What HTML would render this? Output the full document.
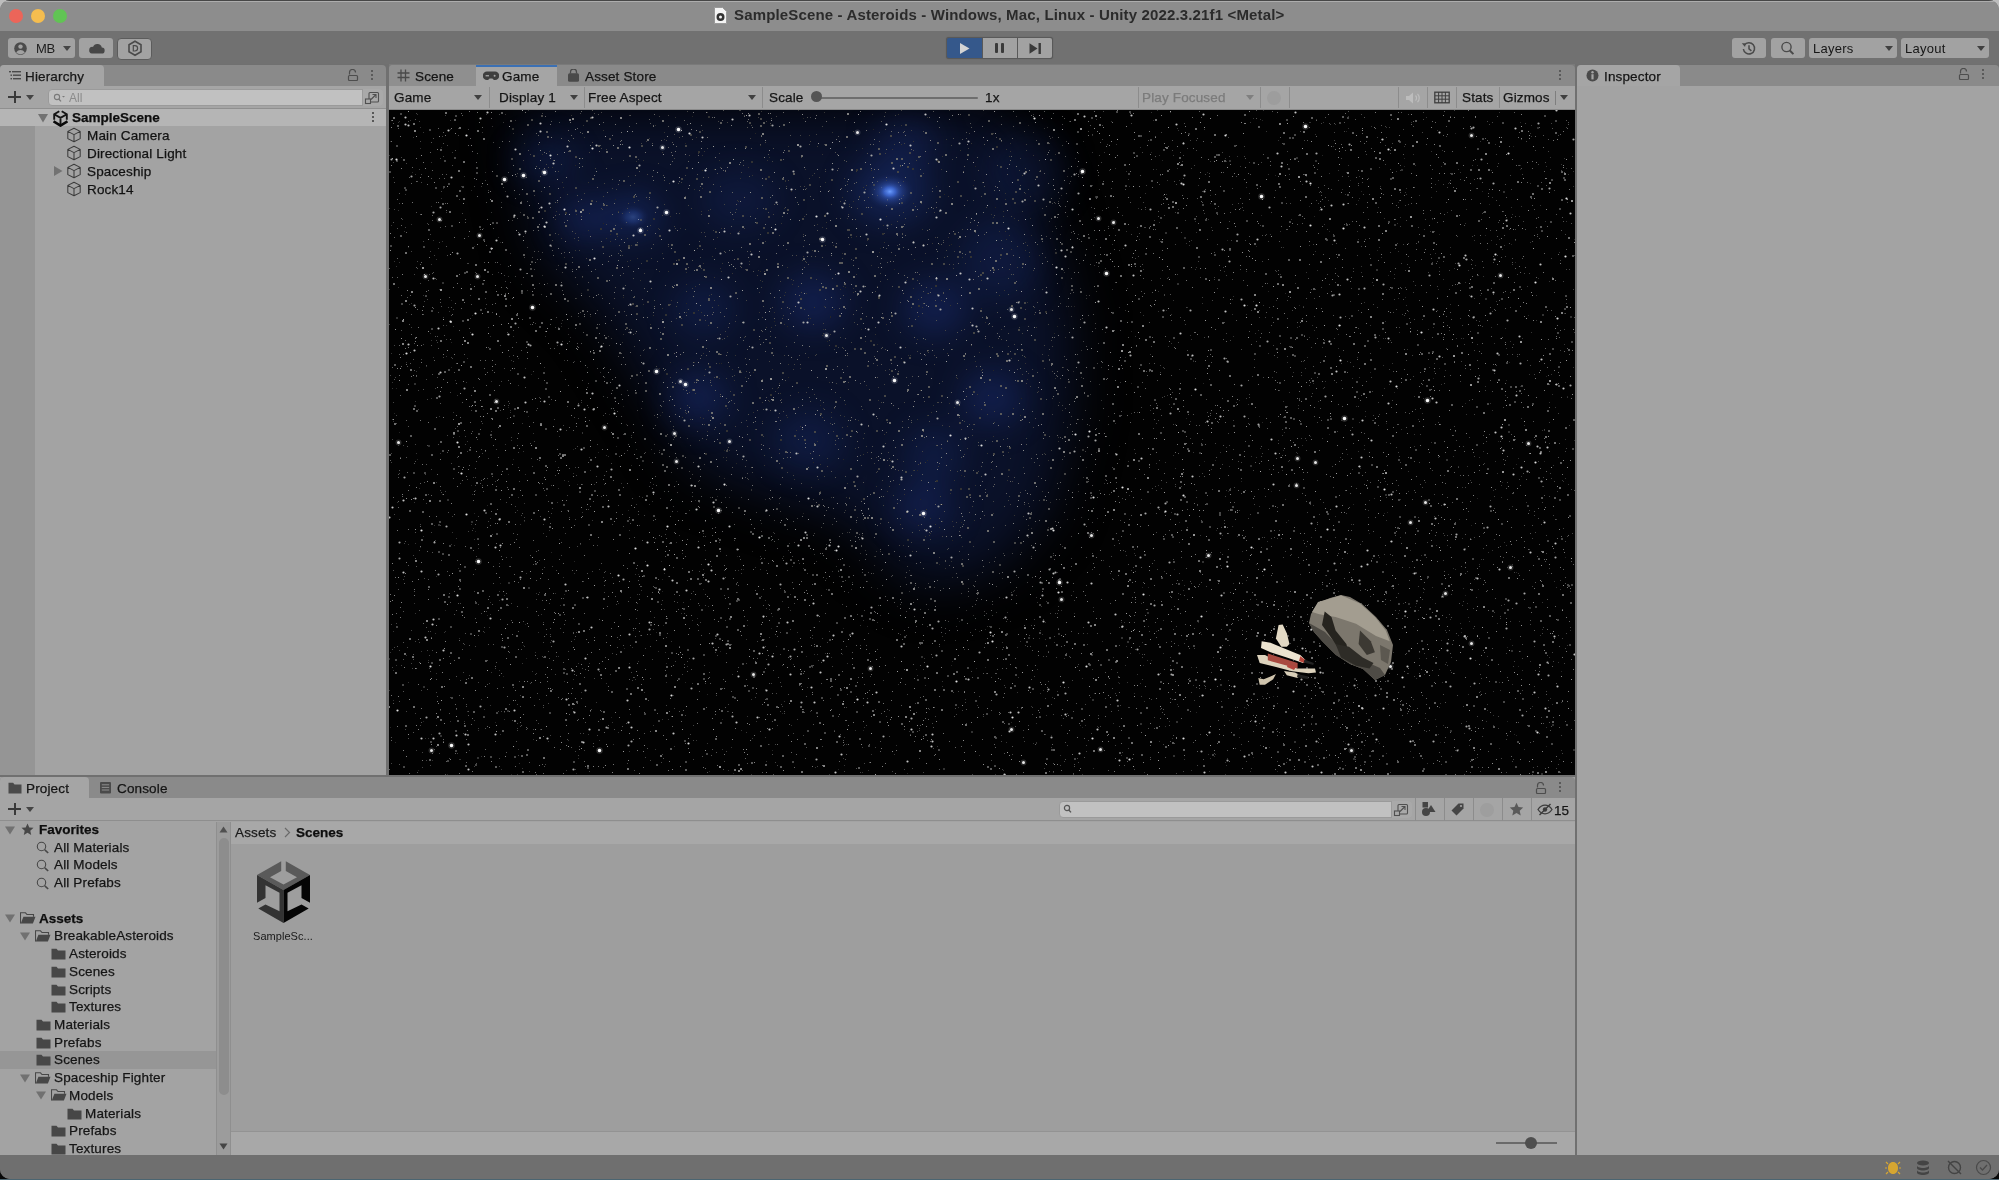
<!DOCTYPE html>
<html><head><meta charset="utf-8">
<style>
*{margin:0;padding:0;box-sizing:border-box}
html,body{width:1999px;height:1180px;overflow:hidden;background:#080808}
body{font-family:"Liberation Sans",sans-serif;font-size:13px;color:#111;position:relative}
.a{position:absolute}
.t{position:absolute;white-space:nowrap;line-height:1;will-change:transform}
#win{position:absolute;left:0;top:0;width:1999px;height:1179px;background:#707070;border-radius:10px;overflow:hidden}
#title{left:0;top:0;width:1999px;height:31px;background:#8d8d8d}
#toolbar{left:0;top:31px;width:1999px;height:33px;background:#717171}
.btn{position:absolute;background:#a2a2a2;border-radius:3px}
.tabbar{position:absolute;background:#8a8a8a;border-top-left-radius:4px;border-top-right-radius:4px}
.tab{position:absolute;top:0;height:22px;background:#a5a5a5;border-top-left-radius:4px;border-top-right-radius:4px}
.sep{position:absolute;width:1px;background:#8c8c8c}
.dd{position:absolute;width:0;height:0;border-left:5px solid transparent;border-right:5px solid transparent;border-top:6px solid #3c3c3c}
.row{position:absolute;left:0;height:18px;width:100%}
.txt{font-size:13.5px;letter-spacing:0.15px;color:#121212;-webkit-text-stroke:0.25px currentColor}
</style></head><body>
<div class="a" style="left:0;top:0;width:20px;height:20px;background:#bdbdbd"></div>
<div class="a" style="left:1979px;top:0;width:20px;height:20px;background:#bdbdbd"></div>
<div id="win">
  <div class="a" style="left:0;top:0;width:1999px;height:1px;background:#474747;z-index:5"></div>
  <div class="a" style="left:0;top:1px;width:1999px;height:1px;background:#adadad;z-index:5"></div>
  <!-- ===== TITLE BAR ===== -->
  <div id="title" class="a">
    <div class="a" style="left:9px;top:9px;width:14px;height:14px;border-radius:50%;background:#ec6559"></div>
    <div class="a" style="left:31px;top:9px;width:14px;height:14px;border-radius:50%;background:#f5bd4f"></div>
    <div class="a" style="left:53px;top:9px;width:14px;height:14px;border-radius:50%;background:#61c454"></div>
    <svg class="a" style="left:712px;top:6px" width="17" height="19" viewBox="0 0 17 19">
      <path d="M2.5 1.5h8l4 4v12h-12z" fill="#f4f4f4" stroke="#9a9a9a" stroke-width="1"/>
      <circle cx="8.5" cy="11" r="4" fill="#333"/><circle cx="8.5" cy="11" r="1.5" fill="#f4f4f4"/>
    </svg>
    <div class="t" style="left:734px;top:7px;font-size:15px;font-weight:bold;color:#2b2b2b;letter-spacing:0.15px">SampleScene - Asteroids - Windows, Mac, Linux - Unity 2022.3.21f1 &lt;Metal&gt;</div>
  </div>
  <!-- ===== TOOLBAR ===== -->
  <div id="toolbar" class="a">
    <div class="btn" style="left:8px;top:7px;width:67px;height:20px"></div>
    <div class="btn" style="left:79px;top:7px;width:34px;height:20px"></div>
    <div class="btn" style="left:117px;top:6.5px;width:35px;height:22.5px;border:1px solid #5c5c5c;border-radius:4px"></div>
    <svg class="a" style="left:13px;top:10px" width="15" height="15" viewBox="0 0 15 15">
      <circle cx="7.5" cy="7.5" r="6.3" fill="#4b4b4b"/>
      <circle cx="7.5" cy="5.6" r="2.2" fill="#a2a2a2"/>
      <path d="M3.2 11.6c1-1.9 2.6-2.6 4.3-2.6s3.3.7 4.3 2.6c-1.1 1.1-2.6 1.6-4.3 1.6s-3.2-.5-4.3-1.6z" fill="#a2a2a2"/>
    </svg>
    <div class="t" style="left:36px;top:11px;font-size:13px;color:#1c1c1c;letter-spacing:-0.3px">MB</div>
    <div class="dd" style="left:63px;top:15px;border-left-width:4px;border-right-width:4px;border-top-width:5px;border-top-color:#454545"></div>
    <svg class="a" style="left:88px;top:10px" width="17" height="14" viewBox="0 0 17 14">
      <path d="M4 12.5h9.5a3 3 0 0 0 .3-6a4.6 4.6 0 0 0-8.8-.6a3.3 3.3 0 0 0-1 6.6z" fill="#474747"/>
    </svg>
    <svg class="a" style="left:127px;top:40px;top:9px" width="16" height="17" viewBox="0 0 16 17">
      <path d="M8 1.3l6 3.5v7l-6 3.5-6-3.5v-7z" fill="none" stroke="#4a4a4a" stroke-width="1.6"/>
      <path d="M6.3 5.6h1.6a2.6 2.6 0 0 1 0 5.4H6.3z" fill="none" stroke="#4a4a4a" stroke-width="1.2"/>
    </svg>
    <!-- play group -->
    <div class="a" style="left:946px;top:6px;width:107px;height:22px;background:#595959;border-radius:3px;box-shadow:0 0 1px #5a5a5a"></div>
    <div class="a" style="left:947px;top:7px;width:35px;height:20px;background:#35588b;border-radius:2px 0 0 2px"></div>
    <div class="a" style="left:983px;top:7px;width:34px;height:20px;background:#a2a2a2"></div>
    <div class="a" style="left:1018px;top:7px;width:34px;height:20px;background:#a2a2a2;border-radius:0 2px 2px 0"></div>
    <svg class="a" style="left:959px;top:11px" width="12" height="13" viewBox="0 0 12 13"><path d="M1 1l9.5 5.5L1 12z" fill="#d4d4d4"/></svg>
    <div class="a" style="left:995px;top:12px;width:3px;height:10px;background:#3a3a3a;border-radius:1px"></div>
    <div class="a" style="left:1001px;top:12px;width:3px;height:10px;background:#3a3a3a;border-radius:1px"></div>
    <svg class="a" style="left:1029px;top:12px" width="13" height="11" viewBox="0 0 13 11"><path d="M0.5 0.2l8 5.3-8 5.3z" fill="#3a3a3a"/><rect x="9.5" y="0" width="2.4" height="11" fill="#3a3a3a"/></svg>
    <!-- right -->
    <div class="btn" style="left:1732px;top:7px;width:34px;height:20px"></div>
    <div class="btn" style="left:1771px;top:7px;width:34px;height:20px"></div>
    <div class="btn" style="left:1809px;top:7px;width:88px;height:20px"></div>
    <div class="btn" style="left:1901px;top:7px;width:88px;height:20px"></div>
    <svg class="a" style="left:1741px;top:10px" width="16" height="15" viewBox="0 0 16 15">
      <path d="M3.3 4.3A5.6 5.6 0 1 1 2.4 8" fill="none" stroke="#4a4a4a" stroke-width="1.5"/>
      <path d="M0.8 2.2l3.6 0.1-0.3 3.6z" fill="#4a4a4a"/>
      <path d="M8 4.2v3.6l2.4 2" fill="none" stroke="#4a4a4a" stroke-width="1.5"/>
    </svg>
    <svg class="a" style="left:1780px;top:10px" width="16" height="15" viewBox="0 0 16 15">
      <circle cx="6.5" cy="6" r="4.6" fill="none" stroke="#4a4a4a" stroke-width="1.4"/>
      <path d="M9.8 9.5l3.6 3.6" stroke="#4a4a4a" stroke-width="2"/>
    </svg>
    <div class="t" style="left:1813px;top:11px;font-size:13px;color:#161616;letter-spacing:0.25px">Layers</div>
    <div class="t" style="left:1905px;top:11px;font-size:13px;color:#161616;letter-spacing:0.25px">Layout</div>
    <div class="dd" style="left:1885px;top:15px;border-left-width:4px;border-right-width:4px;border-top-width:5px;border-top-color:#404040"></div>
    <div class="dd" style="left:1977px;top:15px;border-left-width:4px;border-right-width:4px;border-top-width:5px;border-top-color:#404040"></div>
  </div>

  <!-- ===== HIERARCHY ===== -->
  <div class="a" style="left:0;top:64px;width:386px;height:711px;background:#707070">
    <div class="a" style="left:0;top:22px;width:386px;height:689px;background:#a3a3a3"></div>
    <div class="tabbar" style="left:0;top:1px;width:386px;height:21px"></div>
    <div class="tab" style="left:0;top:1px;height:21px;width:104px"></div>
    <svg class="a" style="left:9px;top:6px" width="12" height="11" viewBox="0 0 12 11">
      <rect x="0" y="1" width="2" height="1.4" fill="#4a4a4a"/><rect x="3" y="1" width="9" height="1.4" fill="#4a4a4a"/>
      <rect x="1.5" y="4.5" width="1.5" height="1.4" fill="#4a4a4a"/><rect x="4" y="4.5" width="8" height="1.4" fill="#4a4a4a"/>
      <rect x="1.5" y="8" width="1.5" height="1.4" fill="#4a4a4a"/><rect x="4" y="8" width="8" height="1.4" fill="#4a4a4a"/>
    </svg>
    <div class="t txt" style="left:25px;top:6px;color:#181818">Hierarchy</div>
    <svg class="a" style="left:347px;top:5px" width="12" height="12" viewBox="0 0 12 12">
      <path d="M2.5 5.5V3.5a3 3 0 0 1 6 0" fill="none" stroke="#4d4d4d" stroke-width="1.2"/>
      <rect x="1.5" y="6.5" width="9" height="5" rx="1" fill="none" stroke="#4d4d4d" stroke-width="1.2"/>
    </svg>
    <div class="a" style="left:371px;top:6px;width:2.4px;height:2.4px;border-radius:50%;background:#4a4a4a;box-shadow:0 4px 0 #4a4a4a,0 8px 0 #4a4a4a"></div>
    <div class="a" style="left:0;top:22px;width:386px;height:23px;background:#a5a5a5;border-bottom:1px solid #8f8f8f"></div>
    <div class="a" style="left:8px;top:32px;width:13px;height:2px;background:#3a3a3a"></div>
    <div class="a" style="left:13.5px;top:27px;width:2px;height:12px;background:#3a3a3a"></div>
    <div class="dd" style="left:26px;top:31px;border-left-width:4px;border-right-width:4px;border-top-width:5px;border-top-color:#444"></div>
    <div class="a" style="left:48px;top:25px;width:335px;height:17px;background:#c1c1c1;border-radius:4px;border:1px solid #9a9a9a"></div>
    <svg class="a" style="left:53px;top:29px" width="12" height="10" viewBox="0 0 12 10">
      <circle cx="4" cy="4" r="2.6" fill="none" stroke="#7a7a7a" stroke-width="1.1"/><path d="M5.8 6l2.2 2.4" stroke="#7a7a7a" stroke-width="1.3"/><path d="M9 3h3l-1.5 1.6z" fill="#7a7a7a"/>
    </svg>
    <div class="t" style="left:69px;top:28px;font-size:12px;color:#8a8a8a">All</div>
    <div class="a" style="left:362px;top:25px;width:21px;height:17px;background:#a9a9a9;border-left:1px solid #9a9a9a;border-radius:0 4px 4px 0"></div>
    <svg class="a" style="left:364px;top:27px" width="16" height="14" viewBox="0 0 16 14">
      <rect x="5" y="1.5" width="9.5" height="9.5" rx="1" fill="none" stroke="#505050" stroke-width="1.1"/>
      <rect x="1.5" y="8" width="5" height="4.5" fill="#a9a9a9" stroke="#505050" stroke-width="1.1"/>
      <path d="M7 8.5l5-5M8.5 3.5h3.5V7" fill="none" stroke="#505050" stroke-width="1.1"/>
    </svg>
    <div class="a" style="left:0;top:45px;width:386px;height:17px;background:#b5b5b5"></div>
    <div class="a" style="left:0;top:62px;width:35px;height:649px;background:#959595"></div>
    <svg class="a" style="left:38px;top:50px" width="10" height="9" viewBox="0 0 10 9"><path d="M0 0h10l-5 8.5z" fill="#727272"/></svg>
    <svg class="a" style="left:52.5px;top:46px" width="15" height="17" viewBox="0 0 15 17">
      <path d="M6.3 1.2L1.2 4.2V9.8M8.7 1.2L13.8 4.2V9.8M1.2 4.2L7.5 7.8 13.8 4.2M7.5 7.8V14" fill="none" stroke="#151515" stroke-width="1.9"/>
      <path d="M0.5 11.4L7.5 15.6 14.5 11.4" fill="none" stroke="#0a0a0a" stroke-width="2.6"/>
    </svg>
    <div class="t txt" style="left:72px;top:46.5px;font-weight:bold;color:#0e0e0e;letter-spacing:0px">SampleScene</div>
    <div class="a" style="left:372px;top:48px;width:2.4px;height:2.4px;border-radius:50%;background:#3a3a3a;box-shadow:0 4px 0 #3a3a3a,0 8px 0 #3a3a3a"></div>
    <svg class="a" style="left:66px;top:63px" width="16" height="16" viewBox="0 0 16 16"><path d="M8 1.2l6.2 3.2v7.2L8 14.8 1.8 11.6V4.4z M1.8 4.4L8 7.6l6.2-3.2 M8 7.6v7.2" fill="none" stroke="#3c3c3c" stroke-width="1.05" stroke-linejoin="round"/></svg>
<div class="t txt" style="left:87px;top:65px">Main Camera</div>
<svg class="a" style="left:66px;top:81px" width="16" height="16" viewBox="0 0 16 16"><path d="M8 1.2l6.2 3.2v7.2L8 14.8 1.8 11.6V4.4z M1.8 4.4L8 7.6l6.2-3.2 M8 7.6v7.2" fill="none" stroke="#3c3c3c" stroke-width="1.05" stroke-linejoin="round"/></svg>
<div class="t txt" style="left:87px;top:83px">Directional Light</div>
<svg class="a" style="left:66px;top:99px" width="16" height="16" viewBox="0 0 16 16"><path d="M8 1.2l6.2 3.2v7.2L8 14.8 1.8 11.6V4.4z M1.8 4.4L8 7.6l6.2-3.2 M8 7.6v7.2" fill="none" stroke="#3c3c3c" stroke-width="1.05" stroke-linejoin="round"/></svg>
<div class="t txt" style="left:87px;top:101px">Spaceship</div>
<svg class="a" style="left:54px;top:102px" width="9" height="10" viewBox="0 0 9 10"><path d="M0 0l8.5 5L0 10z" fill="#727272"/></svg>
<svg class="a" style="left:66px;top:117px" width="16" height="16" viewBox="0 0 16 16"><path d="M8 1.2l6.2 3.2v7.2L8 14.8 1.8 11.6V4.4z M1.8 4.4L8 7.6l6.2-3.2 M8 7.6v7.2" fill="none" stroke="#3c3c3c" stroke-width="1.05" stroke-linejoin="round"/></svg>
<div class="t txt" style="left:87px;top:119px">Rock14</div>
  </div>

  <!-- ===== GAME ===== -->
  <div class="a" style="left:389px;top:64px;width:1186px;height:711px;background:#7a7a7a">
    <div class="tabbar" style="left:0;top:1px;width:1186px;height:21px"></div>
    <div class="a" style="left:0;top:1px;width:87px;height:21px;background:#8f8f8f;border-top-left-radius:4px"></div>
    <div class="tab" style="left:87px;top:1px;height:21px;width:81px;border-top:2px solid #3b70b4;border-radius:0"></div>
    <svg class="a" style="left:8px;top:5px" width="13" height="13" viewBox="0 0 13 13">
      <path d="M4 0.5v12M8.5 0.5v12M0.5 4h12M0.5 8.5h12" stroke="#4a4a4a" stroke-width="1.3"/>
    </svg>
    <div class="t txt" style="left:26px;top:6px;color:#151515">Scene</div>
    <svg class="a" style="left:94px;top:7px" width="16" height="10" viewBox="0 0 16 10">
      <path d="M4 0.5h8a3.8 3.8 0 0 1 0 8.5c-1.5 0-2-1.2-2.6-1.6H6.6C6 7.8 5.5 9 4 9A3.8 3.8 0 0 1 4 0.5z" fill="#3e3e3e"/>
      <rect x="2.6" y="4.1" width="3.4" height="1.3" fill="#a5a5a5"/><circle cx="11.6" cy="4.7" r="1" fill="#a5a5a5"/>
    </svg>
    <div class="t txt" style="left:113px;top:6px;color:#151515">Game</div>
    <svg class="a" style="left:178px;top:5px" width="13" height="13" viewBox="0 0 13 13">
      <path d="M3.5 4.5V3a3 3 0 0 1 6 0v1.5" fill="none" stroke="#4a4a4a" stroke-width="1.3"/>
      <rect x="1" y="4.3" width="11" height="8.5" rx="1.5" fill="#4a4a4a"/>
    </svg>
    <div class="t txt" style="left:196px;top:6px;color:#151515">Asset Store</div>
    <div class="a" style="left:1170px;top:6px;width:2.4px;height:2.4px;border-radius:50%;background:#4a4a4a;box-shadow:0 4px 0 #4a4a4a,0 8px 0 #4a4a4a"></div>
    <!-- game toolbar -->
    <div class="a" style="left:0;top:22px;width:1186px;height:24px;background:#a5a5a5;border-bottom:1px solid #8a8a8a"></div>
    <div class="sep" style="left:100px;top:23px;height:21px"></div>
    <div class="sep" style="left:195px;top:23px;height:21px"></div>
    <div class="sep" style="left:373px;top:23px;height:21px"></div>
    <div class="sep" style="left:749px;top:23px;height:21px"></div>
    <div class="sep" style="left:871px;top:23px;height:21px"></div>
    <div class="sep" style="left:900px;top:23px;height:21px"></div>
    <div class="sep" style="left:1009px;top:23px;height:21px"></div>
    <div class="sep" style="left:1038px;top:23px;height:21px"></div>
    <div class="sep" style="left:1067px;top:23px;height:21px"></div>
    <div class="sep" style="left:1110px;top:23px;height:21px"></div>
    <div class="sep" style="left:1166px;top:27px;height:14px;background:#7e7e7e"></div>
    <div class="t txt" style="left:5px;top:27px;color:#151515">Game</div>
    <div class="dd" style="left:85px;top:31px;border-left-width:4px;border-right-width:4px;border-top-width:5px;border-top-color:#404040"></div>
    <div class="t txt" style="left:110px;top:27px;color:#151515">Display 1</div>
    <div class="dd" style="left:181px;top:31px;border-left-width:4px;border-right-width:4px;border-top-width:5px;border-top-color:#404040"></div>
    <div class="t txt" style="left:199px;top:27px;color:#151515">Free Aspect</div>
    <div class="dd" style="left:359px;top:31px;border-left-width:4px;border-right-width:4px;border-top-width:5px;border-top-color:#404040"></div>
    <div class="t txt" style="left:380px;top:27px;color:#151515">Scale</div>
    <div class="a" style="left:423px;top:32.5px;width:166px;height:2px;background:#6e6e6e;border-radius:1px"></div>
    <div class="a" style="left:422px;top:27px;width:11px;height:11px;border-radius:50%;background:#555"></div>
    <div class="t txt" style="left:596px;top:27px;color:#151515">1x</div>
    <div class="t txt" style="left:753px;top:27px;color:#7b7b7b">Play Focused</div>
    <div class="dd" style="left:857px;top:31px;border-left-width:4px;border-right-width:4px;border-top-width:5px;border-top-color:#7f7f7f"></div>
    <div class="a" style="left:878px;top:27px;width:14px;height:14px;border-radius:50%;background:#9d9d9d"></div>
    <svg class="a" style="left:1016px;top:27px" width="16" height="14" viewBox="0 0 16 14">
      <path d="M1 5h3l4-3.5v11L4 9H1z" fill="#bdbdbd"/><path d="M10.5 4.5a3.5 3.5 0 0 1 0 5M12.5 2.8a6 6 0 0 1 0 8.4" fill="none" stroke="#bdbdbd" stroke-width="1.2"/>
    </svg>
    <svg class="a" style="left:1045px;top:27px" width="16" height="13" viewBox="0 0 16 13">
      <rect x="0.8" y="1.2" width="14.4" height="10.6" fill="none" stroke="#3e3e3e" stroke-width="1.3"/>
      <path d="M1 4.8h14M1 8.2h14M4.6 1v11M8 1v11M11.4 1v11" stroke="#3e3e3e" stroke-width="1"/>
    </svg>
    <div class="t txt" style="left:1073px;top:27px;color:#151515">Stats</div>
    <div class="t txt" style="left:1114px;top:27px;color:#151515">Gizmos</div>
    <div class="dd" style="left:1171px;top:31px;border-left-width:4px;border-right-width:4px;border-top-width:5px;border-top-color:#404040"></div>
    <div class="a" style="left:0;top:46px;width:1186px;height:665px;background:#020202;overflow:hidden">
      <svg class="a" style="left:0;top:0;filter:blur(26px)" width="1186" height="666" viewBox="0 0 1186 666"><path d="M132 -20 L132 41 L153 142 L214 203 L264 285 L305 356 L387 387 L458 407 L509 458 L539 478 L610 458 L661 397 L682 305 L682 203 L661 127 L630 41 L600 -20 Z" fill="#0a1129"/></svg>
      <svg class="a" style="left:0;top:0;filter:blur(15px)" width="1186" height="666" viewBox="0 0 1186 666"><ellipse cx="244.7" cy="105.7" rx="28" ry="22" fill="#1f3685" opacity="0.40"/><ellipse cx="196.7" cy="108.9" rx="28" ry="20" fill="#1f3685" opacity="0.36"/><ellipse cx="155" cy="51" rx="30" ry="20" fill="#1f3685" opacity="0.24"/><ellipse cx="517" cy="32" rx="32" ry="25" fill="#1f3685" opacity="0.28"/><ellipse cx="424" cy="192" rx="32" ry="28" fill="#1f3685" opacity="0.36"/><ellipse cx="545.7" cy="198.5" rx="32" ry="28" fill="#1f3685" opacity="0.36"/><ellipse cx="315" cy="198.5" rx="30" ry="28" fill="#1f3685" opacity="0.24"/><ellipse cx="308.7" cy="288" rx="30" ry="26" fill="#1f3685" opacity="0.36"/><ellipse cx="603" cy="288" rx="30" ry="28" fill="#1f3685" opacity="0.36"/><ellipse cx="500.9" cy="81.6" rx="40" ry="32" fill="#1f3685" opacity="0.40"/><ellipse cx="350" cy="90" rx="40" ry="30" fill="#1f3685" opacity="0.18"/><ellipse cx="420" cy="330" rx="35" ry="30" fill="#1f3685" opacity="0.24"/><ellipse cx="545" cy="345" rx="30" ry="30" fill="#1f3685" opacity="0.24"/><ellipse cx="534" cy="397" rx="30" ry="25" fill="#1f3685" opacity="0.32"/><ellipse cx="610" cy="150" rx="40" ry="40" fill="#1f3685" opacity="0.20"/><ellipse cx="640" cy="60" rx="40" ry="40" fill="#1f3685" opacity="0.20"/></svg>
      <svg class="a" style="left:0;top:0" width="1186" height="666" viewBox="0 0 1186 666">
      <defs>
        <radialGradient id="bg2"><stop offset="0" stop-color="#6a9cff"/><stop offset="0.45" stop-color="#3a64d0" stop-opacity="0.75"/><stop offset="1" stop-color="#18275c" stop-opacity="0"/></radialGradient>
      </defs>
      <path transform="translate(.5 .5)" stroke="rgb(37,37,37)" stroke-width="1" stroke-linecap="square" d="M303 6h0m111 2h0m459 2h0m258 2h0m-750 3h0m258 0h0m445 3h0m-600 1h0m189 0h0m284 2h0m-591 2h0m700 0h0m-1065 8h0m295 2h0m828 3h0m-1072 1h0m710 5h0m171 3h0m82 3h0m-242 2h0m-587 5h0m902 0h0m43 0h0m-545 1h0m429 0h0m-248 3h0m364 0h0m-818 1h0m-290 2h0m795 0h0m68 3h0m31 1h0m44 4h0m-377 5h0m-502 5h0m320 1h0m570 0h0m121 0h0m-538 3h0m219 1h0m-548 4h0m743 1h0m-803 2h0m843 0h0m91 2h0m-180 2h0m-314 1h0m324 3h0m-494 4h0m436 1h0m53 1h0m118 3h0m75 0h0m-904 4h0m-120 5h0m846 3h0m-719 3h0m829 0h0m46 1h0m89 4h0m-347 1h0m-727 2h0m439 2h0m12 0h0m560 0h0m-1037 2h0m782 0h0m-848 1h0m472 1h0m497 2h0m-498 2h0m636 10h0m-1015 2h0m394 5h0m-134 2h0m628 4h0m-543 12h0m310 2h0m113 2h0m17 2h0m195 2h0m-857 2h0m782 0h0m32 0h0m-986 3h0m235 3h0m613 2h0m-225 1h0m-93 2h0m462 5h0m-971 2h0m1056 0h0m-938 1h0m240 0h0m0 1h0m-56 4h0m-213 5h0m226 0h0m270 0h0m-196 3h0m270 2h0m-77 2h0m-227 8h0m-376 1h0m426 2h0m248 13h0m68 3h0m316 2h0m-790 1h0m2 0h0m-302 4h0m32 0h0m208 1h0m780 0h0m-446 2h0m-240 2h0m617 0h0m-839 2h0m1015 2h0m-758 1h0m645 1h0m73 2h0m-375 3h0m72 0h0m317 3h0m-1124 2h0m381 0h0m617 4h0m173 4h0m-546 2h0m218 2h0m226 3h0m-645 2h0m-197 1h0m-115 1h0m-25 2h0m-89 4h0m215 1h0m51 1h0m-132 1h0m731 0h0m-73 2h0m76 4h0m124 1h0m-760 1h0m-227 8h0m930 2h0m-870 2h0m851 0h0m191 3h0m-3 2h0m31 3h0m-913 2h0m503 0h0m-546 3h0m63 0h0m88 1h0m-126 2h0m498 0h0m251 2h0m-930 5h0m96 0h0m330 0h0m84 1h0m288 0h0m-11 1h0m340 0h0m-731 1h0m-77 1h0m780 1h0m-885 1h0m455 2h0m-169 3h0m-409 4h0m453 1h0m-285 6h0m565 0h0m301 0h0m-40 1h0m-925 2h0m-106 1h0m757 6h0m43 0h0m-554 5h0m760 2h0m-557 1h0m-225 1h0m4 2h0m243 2h0m411 0h0m-866 1h0m141 5h0m49 1h0m710 1h0m-913 1h0m329 0h0m581 0h0m-96 7h0m255 0h0m-1019 1h0m437 1h0m218 0h0m292 3h0m-423 2h0m168 3h0m-741 1h0m943 0h0m-49 2h0m-132 3h0m-285 4h0m-532 7h0m1045 1h0m-760 2h0m47 1h0m-201 1h0m1003 0h0m-817 4h0m828 1h0m-991 4h0m87 0h0m278 3h0m-196 5h0m431 0h0m-336 1h0m678 2h0m-104 1h0m-774 1h0m188 4h0m-164 1h0m619 1h0m-781 3h0m642 4h0m6 0h0m-271 1h0m-174 1h0m775 0h0m-816 2h0m-98 3h0m901 1h0m-462 3h0m-106 8h0m391 0h0m127 0h0m-186 3h0m-784 1h0m461 1h0m-419 4h0m739 0h0m-454 1h0m452 2h0m-265 3h0m162 1h0m77 0h0m-673 2h0m138 1h0m84 0h0m120 1h0m-54 1h0m-42 1h0m72 0h0m142 1h0m-6 2h0m-323 1h0m805 0h0m-98 2h0m-644 4h0m791 1h0m-987 6h0m984 2h0m-883 1h0m96 3h0m764 1h0m-345 1h0m-297 1h0m-36 2h0m-280 2h0m625 2h0m-199 1h0m-286 2h0m285 2h0m192 0h0m375 1h0m-533 1h0m-9 1h0m-60 1h0m645 2h0m-1058 5h0m182 6h0m433 0h0m70 0h0m-481 12h0m566 2h0m284 7h0m-169 1h0m-142 4h0m-444 1h0m490 0h0m85 0h0m-787 1h0m-86 2h0m692 0h0m-414 1h0m-171 4h0m111 2h0m507 1h0m-806 1h0m1084 0h0m-1012 1h0m516 0h0m-621 5h0m692 0h0m157 1h0m151 0h0m-527 2h0m651 4h0m-463 1h0m465 0h0m-1121 7h0m1045 0h0m-95 1h0m-576 1h0m777 2h0m-47 2h0m-138 1h0m-589 1h0m481 7h0m222 1h0m-637 11h0m-420 1h0m291 1h0m568 0h0m-701 2h0m157 0h0m174 0h0m-460 1h0m64 0h0m5 1h0"/>
<path transform="translate(.5 .5)" stroke="rgb(52,52,52)" stroke-width="1" stroke-linecap="square" d="M139 0h0m270 0h0m359 0h0m106 0h0m-502 1h0m-54 1h0m117 0h0m327 0h0m19 0h0m329 0h0m-1054 1h0m-28 1h0m69 0h0m19 0h0m367 0h0m26 0h0m135 0h0m-462 1h0m777 1h0m-673 1h0m252 0h0m499 0h0m-173 1h0m-157 1h0m164 0h0m56 0h0m-906 1h0m40 0h0m65 0h0m638 0h0m-754 1h0m670 0h0m42 0h0m-713 1h0m105 0h0m747 0h0m59 0h0m1 0h0m13 0h0m88 0h0m-76 2h0m-752 1h0m72 0h0m246 0h0m630 0h0m-1039 1h0m879 0h0m-951 1h0m627 0h0m259 0h0m80 0h0m-342 1h0m133 0h0m171 0h0m-898 1h0m754 0h0m-756 1h0m155 0h0m575 0h0m259 0h0m-171 1h0m-843 1h0m59 0h0m182 0h0m168 0h0m201 0h0m-520 1h0m480 0h0m537 0h0m-215 1h0m-506 1h0m283 0h0m439 1h0m-1118 1h0m171 0h0m112 0h0m356 0h0m-403 1h0m15 1h0m282 0h0m435 0h0m140 0h0m-243 1h0m-365 1h0m170 0h0m397 0h0m-956 2h0m447 0h0m39 0h0m-109 1h0m215 0h0m379 0h0m-735 1h0m28 1h0m29 0h0m516 0h0m71 0h0m-264 1h0m-720 1h0m442 0h0m30 1h0m114 0h0m-46 1h0m482 0h0m-893 1h0m155 0h0m306 0h0m421 0h0m-979 1h0m210 0h0m430 0h0m12 0h0m-406 1h0m380 0h0m-536 1h0m280 0h0m233 0h0m358 0h0m-1024 1h0m313 0h0m331 0h0m126 0h0m14 0h0m-231 1h0m67 0h0m228 0h0m-468 1h0m781 0h0m-970 1h0m495 0h0m150 0h0m339 0h0m-921 2h0m76 0h0m48 0h0m-131 1h0m546 0h0m28 0h0m16 0h0m-795 1h0m66 2h0m1064 0h0m-213 1h0m67 0h0m57 0h0m-232 1h0m201 0h0m105 0h0m-994 1h0m135 0h0m61 0h0m631 0h0m-311 1h0m47 0h0m62 0h0m389 0h0m-852 1h0m91 0h0m136 0h0m517 0h0m92 0h0m-679 1h0m238 0h0m229 0h0m153 0h0m-635 1h0m270 0h0m270 0h0m177 0h0m-1088 1h0m861 0h0m114 0h0m-131 1h0m-914 1h0m853 0h0m21 0h0m279 0h0m-816 1h0m60 0h0m348 0h0m-696 1h0m603 0h0m292 0h0m-619 2h0m388 1h0m-343 1h0m101 0h0m281 0h0m12 0h0m259 0h0m-653 1h0m524 0h0m-747 1h0m26 0h0m237 0h0m624 0h0m-1 1h0m82 0h0m-228 1h0m133 0h0m-343 1h0m106 0h0m-737 1h0m20 0h0m648 0h0m251 0h0m193 0h0m-1010 1h0m300 0h0m383 0h0m-803 1h0m259 0h0m704 0h0m-712 1h0m405 0h0m243 0h0m39 0h0m-494 1h0m-382 1h0m931 0h0m-31 1h0m-400 1h0m20 0h0m120 0h0m-740 1h0m761 0h0m179 0h0m61 0h0m-345 1h0m149 0h0m209 0h0m-471 1h0m-106 1h0m17 0h0m446 0h0m126 0h0m61 0h0m-1051 1h0m618 0h0m300 0h0m-472 1h0m118 0h0m-268 1h0m591 0h0m-590 1h0m115 0h0m-352 1h0m343 0h0m69 1h0m142 0h0m24 0h0m131 0h0m-361 1h0m691 1h0m-1109 1h0m1090 0h0m-143 1h0m133 0h0m-1122 1h0m395 0h0m354 0h0m-563 1h0m338 0h0m232 0h0m33 0h0m288 0h0m-1068 1h0m310 0h0m394 0h0m-546 1h0m62 0h0m83 0h0m302 0h0m-557 1h0m45 0h0m29 0h0m927 0h0m-858 1h0m505 0h0m-518 1h0m415 0h0m521 0h0m-842 2h0m134 0h0m82 0h0m181 0h0m452 0h0m-526 1h0m101 0h0m306 0h0m-553 1h0m167 0h0m16 0h0m354 0h0m-829 1h0m653 0h0m83 0h0m-96 2h0m350 0h0m21 0h0m-740 1h0m333 0h0m-378 1h0m607 0h0m9 0h0m68 0h0m-1054 1h0m406 0h0m74 0h0m433 0h0m-933 1h0m492 0h0m172 1h0m-233 1h0m389 0h0m-553 1h0m22 0h0m41 0h0m392 0h0m115 0h0m-306 1h0m502 0h0m-836 1h0m59 0h0m-243 1h0m335 0h0m260 0h0m6 0h0m47 0h0m74 0h0m154 0h0m16 0h0m61 0h0m73 0h0m-234 1h0m-806 1h0m340 0h0m-172 1h0m502 0h0m18 0h0m192 0h0m-261 1h0m22 0h0m-414 1h0m239 0h0m-358 1h0m219 0h0m131 0h0m3 0h0m97 0h0m-387 1h0m45 0h0m400 1h0m133 0h0m219 0h0m141 0h0m-1066 1h0m434 0h0m324 0h0m283 0h0m17 0h0m24 0h0m-1073 1h0m168 0h0m274 1h0m141 0h0m505 0h0m-598 1h0m254 0h0m-263 1h0m189 0h0m220 0h0m-701 1h0m194 0h0m8 0h0m116 0h0m240 0h0m120 0h0m195 0h0m-545 1h0m324 1h0m96 0h0m71 0h0m-327 1h0m-112 1h0m476 0h0m15 0h0m-927 1h0m237 0h0m213 0h0m290 1h0m83 0h0m161 1h0m-1049 1h0m152 0h0m180 0h0m593 0h0m-350 1h0m-46 1h0m-327 1h0m91 0h0m226 0h0m-465 1h0m398 0h0m419 0h0m-744 1h0m-201 1h0m478 0h0m-284 1h0m-236 1h0m233 0h0m122 0h0m231 0h0m-581 1h0m304 1h0m19 0h0m357 0h0m-648 1h0m440 1h0m223 0h0m381 0h0m-1079 1h0m965 0h0m-574 1h0m409 0h0m27 0h0m216 0h0m-719 1h0m348 0h0m386 0h0m-311 1h0m52 0h0m-437 1h0m305 0h0m254 0h0m151 0h0m-809 1h0m9 0h0m53 0h0m503 0h0m22 0h0m-748 1h0m64 0h0m124 0h0m378 0h0m242 0h0m55 0h0m-629 1h0m124 1h0m424 0h0m114 0h0m-852 1h0m795 0h0m141 0h0m-970 1h0m975 0h0m-901 1h0m132 0h0m454 0h0m-8 1h0m378 0h0m-747 1h0m652 0h0m-803 1h0m120 0h0m146 0h0m-144 1h0m787 0h0m-177 1h0m93 0h0m-918 1h0m748 0h0m-774 1h0m165 0h0m106 0h0m-97 2h0m148 0h0m34 0h0m650 0h0m-1129 1h0m274 0h0m733 0h0m-552 1h0m60 0h0m167 0h0m47 0h0m-738 1h0m50 0h0m401 0h0m272 0h0m326 0h0m-911 1h0m477 0h0m-592 1h0m684 0h0m62 0h0m-373 1h0m68 0h0m-272 1h0m225 0h0m121 0h0m-386 1h0m-118 1h0m178 0h0m108 0h0m75 0h0m215 0h0m87 0h0m169 0h0m281 0h0m-303 1h0m-657 2h0m510 0h0m312 0h0m76 0h0m-556 1h0m314 0h0m-561 1h0m502 0h0m103 0h0m-23 1h0m243 0h0m-469 1h0m337 0h0m-953 1h0m791 0h0m-793 1h0m234 0h0m807 0h0m-819 1h0m87 0h0m232 0h0m297 0h0m16 0h0m143 0h0m-771 1h0m189 0h0m247 0h0m232 0h0m-489 1h0m47 0h0m61 0h0m197 0h0m68 0h0m-574 1h0m49 0h0m172 1h0m-136 1h0m427 0h0m41 0h0m271 0h0m-988 1h0m709 0h0m250 0h0m84 0h0m-1086 1h0m280 0h0m15 0h0m58 0h0m15 0h0m339 0h0m451 1h0m-530 1h0m137 0h0m61 0h0m14 0h0m-593 1h0m490 0h0m-565 1h0m6 0h0m334 0h0m-475 1h0m365 1h0m2 0h0m249 0h0m-497 2h0m974 0h0m-151 1h0m-400 1h0m-424 1h0m89 1h0m134 0h0m102 0h0m-440 1h0m262 0h0m604 0h0m58 0h0m-917 1h0m846 0h0m-741 1h0m208 0h0m5 0h0m265 0h0m261 0h0m136 0h0m58 0h0m-923 1h0m937 0h0m-682 1h0m178 0h0m427 0h0m-170 1h0m56 0h0m135 0h0m-979 2h0m635 0h0m294 0h0m11 0h0m121 0h0m-1101 1h0m205 0h0m620 0h0m-687 1h0m55 0h0m252 0h0m463 0h0m-516 1h0m368 0h0m189 0h0m-889 1h0m23 0h0m32 0h0m182 0h0m408 0h0m98 0h0m-663 1h0m174 0h0m321 0h0m244 0h0m74 1h0m73 0h0m5 0h0m2 0h0m59 0h0m-800 1h0m37 0h0m158 0h0m274 0h0m233 0h0m-993 1h0m959 0h0m-525 1h0m513 0h0m132 0h0m-888 1h0m549 1h0m323 0h0m-30 1h0m13 0h0m87 0h0m-1007 1h0m432 1h0m179 0h0m154 1h0m16 1h0m42 0h0m126 0h0m-862 1h0m763 0h0m125 0h0m-451 1h0m-154 1h0m-337 1h0m389 0h0m-588 1h0m312 0h0m244 0h0m321 0h0m193 0h0m-311 1h0m-415 1h0m173 0h0m2 0h0m138 0h0m-602 1h0m63 0h0m682 0h0m-758 1h0m375 0h0m217 0h0m282 0h0m50 0h0m-890 1h0m51 0h0m239 1h0m-246 1h0m53 0h0m10 1h0m329 0h0m72 0h0m218 0h0m110 0h0m44 0h0m-941 1h0m264 0h0m24 0h0m593 0h0m-262 1h0m367 0h0m42 0h0m-726 1h0m80 0h0m595 1h0m-957 1h0m118 1h0m43 0h0m476 0h0m38 0h0m328 0h0m144 0h0m-1048 1h0m275 0h0m-68 1h0m40 0h0m407 0h0m-368 1h0m170 0h0m464 0h0m-1029 1h0m657 0h0m361 0h0m-834 1h0m693 0h0m236 2h0m22 0h0m-806 3h0m211 0h0m125 0h0m191 0h0m87 0h0m-640 1h0m238 0h0m98 0h0m297 0h0m-325 1h0m-572 1h0m279 0h0m-243 1h0m834 0h0m-933 1h0m74 0h0m363 0h0m291 0h0m445 0h0m-786 1h0m534 0h0m-214 1h0m290 0h0m52 0h0m-923 1h0m348 0h0m42 0h0m577 1h0m-1012 1h0m114 0h0m-195 1h0m931 0h0m61 0h0m-757 2h0m293 0h0m118 1h0m-240 1h0m491 0h0m-630 1h0m121 0h0m197 1h0m113 0h0m462 0h0m-1095 1h0m710 0h0m338 0h0m-956 1h0m865 0h0m153 1h0m-1136 1h0m992 0h0m-928 1h0m383 1h0m223 0h0m-686 1h0m354 0h0m514 0h0m35 0h0m-750 1h0m13 0h0m181 0h0m297 0h0m177 0h0m313 0h0m-600 1h0m541 0h0m-645 1h0m324 0h0m79 0h0m-670 1h0m355 0h0m303 0h0m62 0h0m58 1h0m-768 1h0m366 0h0m601 0h0m-914 1h0m86 0h0m96 0h0m11 0h0m179 0h0m-595 1h0m742 0h0m-650 1h0m552 0h0m88 0h0m342 0h0m-127 1h0m-912 1h0m57 0h0m152 0h0m23 0h0m68 0h0m78 0h0m100 0h0m206 0h0m-6 1h0m291 0h0m-465 1h0m509 0h0m-539 1h0m93 0h0m-581 1h0m405 0h0m264 0h0m257 0h0m-683 1h0m18 0h0m87 0h0m35 0h0m-315 1h0m196 0h0m818 0h0m-604 1h0m501 0h0m-560 1h0m483 0h0m31 0h0m-979 1h0m369 0h0m428 0h0m-127 1h0m296 0h0m-837 1h0m593 0h0m60 1h0m-86 1h0m435 0h0m-724 1h0m47 0h0m162 1h0m392 2h0m-605 1h0m746 0h0m2 0h0m-837 1h0m-125 1h0m702 0h0m-751 1h0m49 0h0m302 1h0m530 0h0m-783 1h0m-72 1h0m434 0h0m65 1h0m264 1h0m-120 1h0m363 0h0m-1054 1h0m767 0h0m28 0h0m268 0h0m-1107 1h0m350 0h0m241 0h0m487 0h0m-159 1h0m45 0h0m-763 1h0m881 0h0m-1044 1h0m-107 1h0m904 0h0m62 0h0m50 1h0m-339 1h0m151 0h0m34 1h0m-609 1h0m617 0h0m96 0h0m-705 1h0m70 0h0m554 0h0m-760 1h0m665 0h0m170 0h0m125 0h0m-616 1h0m141 0h0m185 0h0m27 0h0m76 0h0m-880 1h0m24 0h0m547 0h0m57 0h0m253 0h0m-434 1h0m-257 1h0m567 0h0m-565 1h0m643 0h0m202 0h0m-864 1h0m134 0h0m3 0h0m530 0h0m84 0h0m98 0h0m41 0h0m39 1h0m-567 1h0m168 0h0m-393 1h0m164 0h0m158 0h0m-493 1h0m573 0h0m160 0h0m207 0h0m-570 1h0m240 0h0m-9 1h0m-336 1h0m-56 1h0m789 0h0m-615 1h0m291 0h0m229 0h0m9 0h0m-292 2h0m185 0h0m-369 1h0m220 0h0m58 0h0m83 0h0m-762 1h0m323 0h0m369 0h0m126 1h0m-835 2h0m924 0h0m-972 1h0m919 1h0m-725 1h0m802 0h0m-438 1h0m-359 1h0m841 0h0m-771 1h0m24 0h0m287 0h0m-541 1h0m390 0h0m53 0h0m463 0h0m92 0h0m-994 1h0m130 0h0m687 0h0m178 0h0m-1127 1h0m989 0h0m-804 1h0m226 0h0m257 0h0m-510 1h0m59 0h0m915 0h0m-1086 1h0m242 0h0m251 0h0m183 0h0m343 0h0m-625 1h0m305 0h0m361 0h0m-80 1h0m-1043 1h0m139 0h0m193 1h0m-276 1h0m276 0h0m348 0h0m127 0h0m267 0h0m-673 1h0m67 0h0m155 0h0m36 0h0m330 0h0m-458 2h0m-508 1h0m30 0h0m432 0h0m225 1h0m-611 2h0m124 0h0m68 0h0m19 0h0m102 0h0m15 0h0m3 0h0m652 0h0m-841 1h0m714 0h0m-609 1h0m5 0h0m289 0h0m226 0h0m115 0h0m-31 1h0m-717 1h0m658 0h0m-913 1h0m17 0h0m143 0h0m493 0h0m476 0h0m-1002 1h0m255 0h0m371 0h0m-514 1h0m13 0h0m417 0h0m247 1h0m-54 1h0m253 0h0m-597 3h0m11 0h0m-409 1h0m50 0h0m122 0h0m156 0h0m394 0h0m129 0h0m-786 2h0m589 0h0m255 0h0m-433 1h0m-282 1h0m303 1h0m321 1h0m-478 1h0m224 0h0m-151 1h0m167 0h0m-468 1h0m438 0h0m392 0h0m-867 1h0m382 0h0m412 0h0m-444 1h0m10 0h0m151 1h0m183 0h0m-525 1h0m-290 1h0m49 0h0m380 0h0m35 0h0m416 0h0m-917 1h0m484 0h0m110 0h0m204 1h0m-293 1h0m248 0h0m-714 1h0m558 0h0m-3 1h0m-479 1h0m80 0h0m-177 2h0m321 0h0m74 0h0m-304 1h0m22 0h0m138 0h0m227 0h0m-251 2h0m183 0h0m67 0h0m271 0h0m22 0h0m-799 1h0m502 0h0m103 1h0m283 0h0m-855 1h0m821 0h0m185 0h0m-988 1h0m85 0h0m912 0h0m-168 1h0m24 0h0m-60 1h0m123 0h0m-714 1h0m503 0h0m325 0h0m-1089 1h0m374 0h0m-381 1h0m43 0h0m129 0h0m246 0h0m-372 1h0m434 0h0m15 0h0m533 0h0m11 0h0m59 0h0m-544 1h0m100 0h0m244 0h0m-828 2h0m656 1h0m-346 1h0m77 0h0m545 0h0m82 0h0m-616 1h0m4 0h0m32 0h0m330 0h0m-221 1h0m199 0h0m268 0h0m-806 1h0m178 0h0m274 0h0m-320 1h0m312 1h0m295 0h0m-661 1h0m23 0h0m91 0h0m157 0h0m-92 1h0m266 0h0m174 0h0m-37 1h0m30 0h0m-612 1h0m202 0h0m519 0h0m-1003 1h0m61 0h0m320 0h0m40 0h0m204 0h0m-287 1h0m135 0h0m443 0h0m-3 1h0m-892 1h0m300 0h0m500 0h0m166 0h0m-209 1h0m223 0h0m33 0h0m-638 1h0m-82 1h0m44 0h0m13 0h0m-94 1h0m462 0h0m192 0h0m-951 1h0m345 0h0m142 0h0m508 0h0m-750 1h0m57 0h0m695 0h0m-717 1h0m28 0h0m143 0h0m580 0h0m-657 1h0m332 0h0m-107 1h0m-531 1h0m48 0h0m90 0h0m40 0h0m814 0h0m29 0h0m-912 1h0m628 1h0m62 0h0m-889 1h0m232 0h0m171 0h0m445 0h0m-721 1h0m40 0h0m9 0h0m340 0h0m50 1h0m110 0h0m368 0h0m-298 2h0m64 0h0m-379 1h0m687 0h0m-702 1h0m-456 1h0m837 0h0m165 1h0m-483 1h0m269 0h0m-266 2h0m514 0h0m124 0h0m-93 1h0m-637 1h0m25 0h0m471 0h0m238 0h0m-919 1h0m373 0h0m169 0h0m-684 1h0m410 0h0m104 0h0m60 0h0m265 0h0m-799 1h0m198 0h0m111 0h0m446 0h0m129 0h0m-887 1h0m19 0h0m82 1h0m153 0h0m-286 1h0m512 0h0m133 0h0m-519 2h0m406 0h0m405 0h0m2 0h0m-466 1h0m-287 1h0m566 0h0m-757 1h0m266 0h0m17 1h0m264 0h0m-556 1h0m193 0h0m354 0h0m505 0h0m-1128 1h0m204 0h0m523 0h0m262 0h0m64 0h0m-907 2h0m318 0h0m-170 1h0m333 0h0m-514 1h0m566 0h0m255 0h0m62 0h0m-746 2h0m105 0h0m159 0h0m-138 1h0m176 0h0m95 0h0m357 0h0m-123 1h0m-299 1h0m11 0h0m-592 1h0m266 0h0m393 0h0m258 0h0m66 0h0m-908 1h0m51 0h0m800 0h0m23 0h0m-484 1h0m93 0h0m275 0h0m21 0h0m199 2h0m-771 1h0m700 0h0m53 1h0m-758 1h0m171 0h0m300 0h0m-344 1h0m191 0h0m459 0h0m50 0h0m-642 1h0m168 0h0m79 0h0m336 1h0m37 0h0m-990 1h0m353 1h0m-84 1h0m151 0h0m29 0h0m31 0h0m161 0h0m265 0h0m-924 1h0m984 1h0m-347 1h0m260 0h0m156 0h0m-909 1h0m407 0h0m393 0h0m137 0h0m-1177 1h0m52 0h0m711 0h0m72 0h0m-784 1h0m40 0h0m54 0h0m259 0h0m-362 1h0m652 0h0m171 0h0m-608 1h0m250 0h0m142 0h0m159 0h0m-561 1h0m818 0h0m82 0h0m-598 1h0m-173 1h0m-310 1h0m353 0h0m227 0h0m262 0h0m178 0h0m-905 1h0m172 0h0m18 0h0m281 0h0m141 0h0m-231 1h0m486 0h0m-770 1h0m349 0h0m82 0h0m-552 1h0m452 0h0m52 0h0m88 0h0m2 2h0m34 1h0m51 0h0m283 0h0m55 0h0m-521 1h0m80 0h0m171 0h0m-665 1h0m385 0h0m256 0h0m-309 2h0m256 1h0m-799 1h0m237 0h0m727 0h0m135 0h0m-1130 1h0m145 0h0m130 0h0m728 0h0m26 0h0m-594 1h0m2 0h0m303 0h0m33 0h0m-349 1h0m3 0h0m-411 1h0m152 1h0m703 0h0m121 0h0m105 0h0m-656 1h0m63 0h0m219 0h0m100 0h0m336 0h0m-625 1h0m140 0h0m355 0h0m-949 1h0m834 0h0m-876 1h0m719 0h0m328 0h0m-837 1h0m892 0h0m-84 1h0m112 0h0m-1036 1h0m56 0h0m11 0h0m40 0h0m218 0h0m497 0h0m-551 1h0m418 0h0m33 0h0m242 0h0m-1090 1h0m631 0h0m98 0h0m-438 1h0m678 0h0m14 0h0m-567 1h0m379 0h0m-154 2h0m55 0h0m347 0h0m-1046 1h0m106 0h0m1023 0h0m-990 1h0m425 0h0m-466 1h0m397 0h0m494 0h0m-946 1h0m972 0h0m-676 1h0m405 0h0m287 0h0m-507 1h0m356 0h0m-255 2h0m64 1h0m334 0h0m-843 1h0m62 0h0m282 0h0m273 1h0m38 0h0m-664 1h0m378 0h0m-534 1h0m258 0h0m461 0h0m222 0h0m93 0h0m57 0h0m-893 1h0m86 0h0m427 0h0m21 0h0m-242 1h0m459 0h0m155 0h0m-587 1h0m268 0h0m59 0h0m115 0h0m-566 1h0m141 0h0m-135 1h0m567 0h0m30 0h0m-199 1h0m-440 1h0m594 0h0m-970 1h0m654 0h0m457 0h0m-443 1h0m423 0h0m13 0h0m-912 1h0m63 0h0m373 0h0m23 1h0m54 0h0m40 0h0m334 1h0m-795 1h0m183 1h0m406 0h0m82 0h0m-292 1h0m38 0h0m448 0h0m-708 1h0m720 0h0m-1069 1h0m270 0h0m214 0h0m402 0h0m-974 1h0m391 1h0m360 0h0m-548 1h0m752 0h0m213 0h0m-121 1h0m-263 1h0m310 0h0m65 0h0m-1062 1h0m487 0h0m54 1h0m501 0h0m-574 1h0m286 0h0m195 0h0m109 0h0m-976 1h0m468 0h0m-556 1h0m391 0h0m54 0h0m231 0h0m171 0h0m-891 1h0m449 0h0m598 0h0m84 0h0m-1104 1h0m261 0h0m82 0h0m106 1h0m151 1h0m156 1h0m-177 1h0m295 0h0m152 0h0m-746 1h0m-309 1h0m-2 1h0m989 0h0m-921 1h0m96 0h0m62 0h0m6 0h0m767 0h0m-985 2h0m14 0h0m292 0h0m413 0h0m297 0h0m20 0h0m-874 1h0m424 1h0m77 0h0m198 0h0m241 1h0m14 0h0m-913 1h0m138 0h0m289 0h0m5 0h0m358 0h0m50 0h0m-396 1h0m68 0h0m-301 1h0m682 0h0m-1006 2h0m756 0h0m114 0h0m-932 1h0m263 0h0m93 0h0m21 0h0m449 0h0m51 0h0m-446 1h0m-291 1h0m128 0h0m718 1h0m-1033 1h0m69 0h0m88 0h0m850 0h0m-673 3h0m79 0h0m395 0h0m-814 1h0m3 0h0m324 0h0m420 0h0m-639 1h0m398 0h0m488 0h0m-851 1h0m31 0h0m97 0h0m463 1h0m219 0h0m-372 1h0m30 0h0m339 0h0m-668 1h0m326 0h0m3 0h0m343 0h0m-766 1h0m233 0h0m50 1h0m364 0h0m209 0h0m-795 1h0m263 0h0m-206 1h0m131 0h0m189 0h0m218 0h0m-751 2h0m137 0h0m67 0h0m736 0h0m66 0h0m-1055 1h0m427 0h0m344 0h0m321 0h0m-932 1h0m781 0h0m-24 2h0m-515 1h0m23 0h0m314 0h0m7 0h0m-236 1h0m81 0h0m61 0h0m-640 1h0m733 0h0m237 0h0m-125 1h0m151 0h0m-899 1h0m265 0h0m367 0h0m17 0h0m-768 1h0m1 0h0m724 0h0m375 0h0m-1127 1h0m334 1h0m459 1h0m-706 1h0m908 0h0m-583 2h0m382 0h0m-411 2h0m-293 1h0m571 0h0m-592 1h0m65 1h0m162 0h0m140 0h0m135 0h0m188 0h0m18 1h0m41 0h0m-388 1h0m191 0h0m91 0h0m-627 2h0m234 0h0m78 0h0m166 0h0m87 0h0m143 0h0m107 0h0m-872 1h0m973 0h0m78 0h0"/>
<path transform="translate(.5 .5)" stroke="rgb(67,67,67)" stroke-width="1" stroke-linecap="square" d="M512 0h0m48 0h0m34 0h0m471 0h0m-767 1h0m416 0h0m-502 1h0m284 0h0m538 0h0m-1007 1h0m126 0h0m38 0h0m14 0h0m-95 1h0m862 0h0m47 0h0m-963 1h0m184 0h0m39 0h0m76 0h0m151 0h0m-236 1h0m117 0h0m225 0h0m15 0h0m434 0h0m-692 1h0m52 0h0m24 0h0m629 0h0m-40 2h0m-578 1h0m-426 1h0m299 0h0m48 0h0m721 0h0m-760 1h0m765 0h0m-722 1h0m361 0h0m190 0h0m204 0h0m26 0h0m-489 1h0m268 0h0m159 0h0m-738 1h0m351 0h0m-280 1h0m563 0h0m4 1h0m177 0h0m-1108 1h0m10 1h0m417 0h0m518 0h0m-701 1h0m209 0h0m-58 1h0m235 0h0m212 0h0m44 0h0m-465 1h0m282 0h0m173 0h0m88 0h0m-453 1h0m-153 1h0m276 0h0m-634 1h0m342 0h0m758 0h0m-1116 1h0m448 0h0m556 0h0m-767 1h0m549 0h0m149 0h0m9 0h0m-636 1h0m300 0h0m52 1h0m-436 1h0m524 0h0m6 0h0m108 0h0m30 0h0m-914 1h0m226 0h0m164 0h0m191 0h0m65 0h0m460 0h0m-1033 1h0m99 0h0m173 0h0m-124 1h0m263 0h0m145 0h0m343 0h0m-854 1h0m286 0h0m70 0h0m132 0h0m81 0h0m-660 1h0m504 0h0m111 0h0m323 0h0m-141 1h0m-643 2h0m106 0h0m261 0h0m219 0h0m-581 1h0m250 1h0m57 0h0m113 0h0m23 0h0m123 0h0m24 0h0m194 0h0m145 0h0m-248 1h0m261 0h0m-959 1h0m553 0h0m38 0h0m42 0h0m-503 1h0m166 0h0m505 0h0m-860 1h0m836 0h0m130 0h0m-807 1h0m410 0h0m84 0h0m-740 1h0m786 0h0m15 0h0m328 0h0m-1171 1h0m400 0h0m-361 1h0m234 0h0m346 0h0m321 0h0m-703 1h0m314 0h0m-429 1h0m393 0h0m123 0h0m-267 1h0m-379 1h0m708 0h0m148 0h0m12 0h0m284 0h0m-1139 1h0m252 0h0m270 0h0m570 0h0m-952 1h0m839 0h0m153 0h0m-1147 1h0m803 0h0m324 0h0m-618 1h0m177 0h0m420 0h0m-949 1h0m172 0h0m-125 1h0m596 0h0m-772 1h0m406 0h0m328 0h0m164 0h0m73 0h0m42 0h0m-413 1h0m381 0h0m161 0h0m-1172 1h0m169 0h0m267 0h0m214 0h0m-298 1h0m-224 1h0m297 0h0m109 0h0m286 0h0m241 0h0m-1029 1h0m226 0h0m558 0h0m99 0h0m218 0h0m-837 1h0m337 0h0m488 0h0m-994 1h0m112 0h0m443 0h0m165 0h0m106 0h0m6 0h0m-955 1h0m315 0h0m111 0h0m-10 1h0m35 0h0m339 0h0m185 0h0m92 1h0m14 0h0m-989 1h0m303 0h0m186 0h0m364 0h0m-435 1h0m167 0h0m-649 1h0m260 0h0m301 0h0m380 0h0m-758 1h0m30 0h0m35 0h0m9 0h0m391 0h0m-222 1h0m312 0h0m17 0h0m267 0h0m-681 1h0m104 0h0m280 0h0m-672 1h0m246 0h0m66 0h0m14 0h0m4 0h0m132 0h0m-433 1h0m944 0h0m-835 1h0m194 0h0m305 0h0m121 0h0m244 0h0m-860 1h0m258 0h0m154 0h0m303 0h0m180 0h0m-1023 1h0m787 0h0m279 0h0m-1113 1h0m100 0h0m343 0h0m318 0h0m117 1h0m2 0h0m-737 1h0m665 0h0m-682 1h0m796 0h0m-829 1h0m343 0h0m26 0h0m-300 1h0m82 0h0m345 0h0m75 0h0m-237 1h0m-409 2h0m179 1h0m249 0h0m80 0h0m349 0h0m83 0h0m97 0h0m-975 1h0m75 0h0m244 0h0m80 0h0m115 0h0m23 0h0m-501 1h0m77 0h0m509 0h0m424 0h0m-1168 1h0m229 0h0m293 0h0m131 0h0m186 0h0m52 0h0m28 0h0m29 0h0m-683 1h0m60 0h0m107 0h0m401 0h0m124 0h0m52 0h0m-801 1h0m81 0h0m717 0h0m-556 1h0m137 1h0m105 0h0m17 0h0m134 0h0m-641 1h0m26 0h0m64 0h0m66 0h0m100 0h0m71 0h0m114 0h0m198 0h0m-846 1h0m208 0h0m108 0h0m26 0h0m507 1h0m208 0h0m-429 1h0m481 0h0m-874 1h0m274 0h0m31 0h0m241 0h0m96 0h0m-809 1h0m160 0h0m57 0h0m525 0h0m278 0h0m-781 1h0m72 0h0m75 0h0m209 0h0m-395 1h0m460 0h0m42 0h0m134 0h0m-382 1h0m87 0h0m8 0h0m504 0h0m-9 1h0m-74 1h0m-1030 1h0m63 0h0m268 0h0m292 0h0m343 0h0m57 0h0m-913 1h0m506 0h0m136 0h0m31 0h0m221 0h0m-509 1h0m152 0h0m180 0h0m294 0h0m-25 1h0m-1071 1h0m281 0h0m-102 1h0m44 1h0m327 0h0m283 0h0m-586 1h0m387 0h0m47 0h0m292 0h0m-995 1h0m732 0h0m7 0h0m1 0h0m273 0h0m-797 1h0m54 0h0m69 0h0m82 0h0m30 0h0m-197 1h0m26 0h0m277 0h0m365 0h0m182 0h0m6 0h0m-802 1h0m777 0h0m-56 1h0m-733 1h0m3 0h0m271 0h0m96 0h0m110 0h0m-606 1h0m309 0h0m255 0h0m-709 1h0m373 0h0m328 0h0m135 0h0m299 0h0m-786 1h0m336 0h0m359 0h0m-1006 1h0m578 0h0m411 0h0m15 0h0m-537 1h0m-361 1h0m53 0h0m131 1h0m321 0h0m80 0h0m206 0h0m-869 1h0m56 0h0m26 0h0m653 0h0m14 0h0m-822 1h0m342 0h0m395 0h0m108 0h0m-829 1h0m979 0h0m-82 1h0m61 0h0m11 0h0m-559 1h0m326 0h0m42 0h0m96 0h0m90 0h0m93 0h0m-599 1h0m130 0h0m66 0h0m-425 1h0m349 0h0m344 0h0m-834 1h0m754 0h0m-843 1h0m259 0h0m18 0h0m71 1h0m-207 1h0m367 0h0m173 0h0m-708 1h0m19 0h0m108 0h0m83 0h0m129 0h0m204 0h0m-412 1h0m487 0h0m361 0h0m-465 1h0m444 1h0m61 0h0m20 0h0m-1016 1h0m188 0h0m174 0h0m561 0h0m140 0h0m77 0h0m-436 1h0m367 0h0m-981 1h0m8 0h0m412 0h0m101 0h0m-459 1h0m65 0h0m191 0h0m158 0h0m135 0h0m416 0h0m-700 1h0m614 0h0m-789 1h0m126 0h0m670 0h0m88 0h0m-1143 1h0m388 0h0m393 0h0m64 0h0m175 0h0m6 0h0m-637 1h0m36 0h0m590 0h0m-965 1h0m1 0h0m173 0h0m324 0h0m436 0h0m54 0h0m-706 1h0m204 0h0m454 0h0m105 0h0m-954 1h0m140 1h0m400 0h0m-81 1h0m-316 1h0m252 0h0m152 0h0m230 0h0m18 0h0m-819 1h0m22 0h0m16 0h0m173 0h0m264 0h0m231 0h0m326 0h0m3 0h0m-536 1h0m129 0h0m113 0h0m130 0h0m44 0h0m-685 1h0m512 0h0m77 0h0m86 0h0m-964 1h0m87 0h0m537 0h0m329 0h0m-784 1h0m236 0h0m644 0h0m5 0h0m-1115 1h0m78 0h0m685 0h0m150 0h0m190 0h0m-1013 1h0m253 0h0m469 0h0m251 0h0m-962 1h0m414 0h0m-406 1h0m677 0h0m14 0h0m338 0h0m-385 1h0m227 0h0m-958 1h0m380 0h0m71 0h0m327 0h0m18 0h0m-439 1h0m124 0h0m19 0h0m45 0h0m170 0h0m-646 1h0m275 0h0m100 0h0m533 0h0m150 0h0m-1053 1h0m605 0h0m220 0h0m-915 1h0m119 0h0m921 0h0m-990 1h0m107 0h0m752 0h0m44 1h0m42 0h0m-617 1h0m639 0h0m-676 1h0m560 0h0m-629 1h0m239 0h0m286 0h0m134 0h0m140 0h0m-542 1h0m93 0h0m269 0h0m4 0h0m74 0h0m60 0h0m124 0h0m-887 2h0m189 0h0m-116 1h0m42 0h0m612 0h0m97 0h0m-1005 1h0m206 1h0m453 0h0m-694 1h0m153 0h0m466 0h0m75 0h0m305 0h0m-880 1h0m45 1h0m0 0h0m568 0h0m-717 1h0m90 0h0m739 0h0m-887 1h0m967 0h0m-680 1h0m32 0h0m195 0h0m271 0h0m75 0h0m-863 1h0m926 0h0m-290 2h0m506 0h0m-1080 1h0m184 0h0m703 0h0m-697 2h0m390 0h0m-618 1h0m463 0h0m123 0h0m152 0h0m83 0h0m34 0h0m74 0h0m133 0h0m-1025 1h0m-32 1h0m351 0h0m221 0h0m371 0h0m-799 1h0m654 0h0m8 0h0m33 0h0m66 0h0m-920 2h0m54 0h0m648 0h0m253 0h0m-714 1h0m212 0h0m511 1h0m-666 1h0m47 0h0m621 0h0m-905 1h0m72 0h0m500 0h0m243 0h0m-758 1h0m206 0h0m418 0h0m79 0h0m6 0h0m7 0h0m-802 1h0m206 0h0m5 0h0m101 0h0m90 0h0m37 0h0m173 0h0m378 0h0m-910 1h0m112 0h0m752 0h0m8 0h0m-717 1h0m415 0h0m356 0h0m-741 1h0m744 0h0m-625 1h0m-319 1h0m288 0h0m272 0h0m-706 1h0m141 0h0m283 0h0m235 0h0m137 0h0m283 0h0m29 0h0m-722 1h0m289 0h0m276 0h0m122 0h0m20 1h0m-1071 1h0m77 0h0m67 0h0m464 0h0m380 0h0m-824 1h0m520 0h0m263 0h0m-727 1h0m0 0h0m933 0h0m-619 1h0m175 0h0m-395 1h0m745 0h0m-963 1h0m847 0h0m220 0h0m-899 1h0m148 0h0m199 0h0m204 0h0m-719 1h0m323 0h0m474 1h0m-696 1h0m162 0h0m-355 1h0m425 0h0m364 0h0m4 0h0m235 0h0m-832 1h0m706 0h0m17 0h0m51 0h0m115 0h0m-1054 1h0m555 0h0m-565 1h0m393 0h0m222 0h0m179 0h0m94 0h0m-762 1h0m7 0h0m514 0h0m173 0h0m-819 1h0m79 0h0m335 0h0m327 0h0m-575 1h0m292 0h0m203 0h0m182 0h0m-857 1h0m314 0h0m195 0h0m82 0h0m340 0h0m110 0h0m49 0h0m-1119 1h0m215 0h0m220 0h0m142 0h0m73 0h0m229 0h0m-639 1h0m374 0h0m44 0h0m99 0h0m-663 1h0m350 0h0m4 0h0m63 0h0m87 0h0m319 0h0m-648 1h0m43 0h0m137 0h0m603 0h0m-790 1h0m178 0h0m51 0h0m356 0h0m-54 1h0m287 0h0m86 0h0m-643 1h0m11 1h0m-369 1h0m115 0h0m696 0h0m-649 1h0m95 0h0m226 0h0m465 0h0m10 0h0m-877 1h0m144 0h0m31 0h0m110 0h0m9 0h0m478 0h0m-125 1h0m230 0h0m-1074 1h0m8 0h0m826 0h0m-825 1h0m559 0h0m-590 1h0m833 0h0m174 0h0m-22 1h0m-893 1h0m256 0h0m692 0h0m-111 1h0m-253 1h0m52 0h0m192 0h0m-547 1h0m140 0h0m-57 1h0m283 0h0m336 0h0m34 0h0m-874 1h0m73 0h0m118 0h0m506 0h0m-190 1h0m-659 1h0m540 0h0m120 0h0m141 0h0m-600 1h0m88 0h0m96 0h0m77 0h0m16 0h0m50 0h0m357 0h0m81 0h0m-960 1h0m375 0h0m301 0h0m-653 1h0m28 0h0m185 0h0m306 0h0m97 0h0m-408 1h0m419 0h0m116 0h0m25 0h0m-273 1h0m466 0h0m-472 1h0m512 0h0m-1144 1h0m252 0h0m62 0h0m30 0h0m567 0h0m-49 1h0m161 0h0m-1018 1h0m42 0h0m167 0h0m66 0h0m44 0h0m549 0h0m54 0h0m54 0h0m-833 1h0m92 0h0m96 0h0m334 0h0m251 0h0m-885 1h0m336 0h0m-180 1h0m759 0h0m-840 1h0m441 0h0m518 0h0m-612 1h0m488 0h0m-748 1h0m248 0h0m190 0h0m418 0h0m-560 1h0m665 0h0m-240 1h0m-279 1h0m-222 1h0m70 0h0m187 0h0m259 0h0m-889 1h0m337 0h0m625 0h0m-714 1h0m165 0h0m21 0h0m39 0h0m593 0h0m-1083 1h0m861 0h0m206 0h0m-755 1h0m45 0h0m597 0h0m-922 1h0m239 0h0m117 0h0m231 0h0m135 0h0m-477 1h0m617 0h0m-691 1h0m193 0h0m312 0h0m123 0h0m-261 1h0m203 0h0m-588 1h0m561 0h0m-625 1h0m68 0h0m233 0h0m322 0h0m87 0h0m-197 1h0m170 0h0m24 0h0m53 0h0m59 0h0m-931 1h0m124 0h0m230 0h0m425 0h0m93 0h0m-718 1h0m187 0h0m624 0h0m77 0h0m-1076 2h0m488 0h0m23 0h0m33 0h0m1 0h0m440 0h0m-869 1h0m40 1h0m-41 1h0m179 0h0m287 0h0m88 0h0m95 0h0m-590 1h0m720 0h0m71 0h0m-217 1h0m362 0h0m-438 1h0m233 0h0m-436 1h0m119 0h0m434 0h0m-944 1h0m29 0h0m36 0h0m78 0h0m23 0h0m71 0h0m377 0h0m-91 1h0m-28 1h0m241 0h0m-521 1h0m119 0h0m753 0h0m-571 1h0m65 0h0m327 0h0m95 0h0m-1078 1h0m207 0h0m51 0h0m132 0h0m54 0h0m88 0h0m445 0h0m-302 1h0m-497 1h0m204 0h0m53 0h0m128 0h0m324 0h0m-705 1h0m-186 1h0m162 0h0m136 0h0m388 0h0m4 0h0m61 0h0m66 0h0m-463 1h0m353 0h0m59 0h0m75 0h0m140 0h0m-471 1h0m62 0h0m30 1h0m323 0h0m121 0h0m111 0h0m-1067 1h0m238 0h0m110 0h0m326 0h0m92 0h0m-544 1h0m265 0h0m4 0h0m135 0h0m65 0h0m-610 1h0m379 0h0m403 0h0m33 0h0m191 0h0m-834 1h0m12 0h0m202 0h0m505 0h0m-612 1h0m191 0h0m319 0h0m-897 1h0m698 0h0m-480 1h0m41 0h0m41 0h0m206 0h0m321 0h0m262 0h0m-978 1h0m-75 1h0m342 0h0m504 0h0m118 0h0m-569 1h0m-22 1h0m364 0h0m-605 1h0m797 0h0m69 0h0m-1042 1h0m525 0h0m310 0h0m201 0h0m-1018 1h0m298 0h0m88 0h0m-340 1h0m120 0h0m838 0h0m-782 1h0m15 0h0m161 0h0m163 0h0m164 0h0m111 0h0m4 0h0m-913 1h0m85 0h0m196 0h0m33 0h0m297 0h0m199 0h0m313 0h0m-816 1h0m213 0h0m35 0h0m509 0h0m-922 1h0m952 0h0m23 0h0m-624 2h0m330 0h0m63 0h0m-863 1h0m50 0h0m132 0h0m57 0h0m-251 1h0m287 0h0m419 0h0m120 0h0m297 0h0m-949 1h0m289 0h0m597 0h0m-735 1h0m668 0h0m-821 1h0m280 0h0m86 0h0m26 0h0m599 0h0m-1070 1h0m638 0h0m99 0h0m-606 1h0m424 0h0m255 0h0m148 0h0m-987 1h0m18 0h0m437 0h0m163 0h0m464 0h0m16 0h0m-1047 1h0m127 0h0m243 0h0m510 0h0m-1007 1h0m91 0h0m172 0h0m125 0h0m328 0h0m28 0h0m127 0h0m-298 1h0m81 0h0m-281 1h0m96 0h0m422 0h0m-663 1h0m445 0h0m197 0h0m138 0h0m75 0h0m-1074 1h0m57 0h0m21 0h0m398 0h0m-388 1h0m43 0h0m105 0h0m191 0h0m62 0h0m121 0h0m-113 1h0m-358 1h0m620 0h0m130 0h0m-386 1h0m335 0h0m300 0h0m-1147 1h0m529 0h0m321 0h0m159 0h0m19 0h0m-968 1h0m160 0h0m263 0h0m610 0h0m-780 1h0m214 0h0m304 0h0m-333 1h0m260 0h0m-690 1h0m73 0h0m295 0h0m505 0h0m-814 1h0m40 0h0m17 0h0m448 0h0m89 0h0m338 0h0m8 0h0m55 1h0m-1082 1h0m467 1h0m16 0h0m339 0h0m179 0h0m16 0h0m-759 1h0m188 0h0m80 0h0m21 0h0m-307 1h0m81 0h0m35 0h0m89 0h0m307 0h0m-784 1h0m803 0h0m348 0h0m-1125 1h0m267 0h0m-137 1h0m21 0h0m217 0h0m-197 1h0m228 0h0m140 0h0m44 0h0m30 0h0m161 0h0m-726 1h0m2 0h0m1068 0h0m-1056 1h0m260 0h0m388 0h0m416 0h0m-1084 1h0m281 0h0m771 0h0m-820 1h0m183 0h0m435 0h0m-822 1h0m24 0h0m416 0h0m77 0h0m542 0h0m-904 1h0m516 0h0m341 0h0m-1047 1h0m122 1h0m22 0h0m295 0h0m179 0h0m97 0h0m212 0h0m92 0h0m-1004 1h0m76 0h0m847 0h0m-749 1h0m240 0h0m266 0h0m20 0h0m368 0h0m-732 1h0m423 0h0m99 0h0m34 0h0m55 0h0m43 0h0m-313 1h0m9 0h0m69 0h0m126 0h0m-452 1h0m308 0h0m46 0h0m237 0h0m76 0h0m-1131 1h0m291 0h0m425 0h0m40 0h0m-751 1h0m219 0h0m893 0h0m-1116 1h0m236 0h0m15 0h0m821 1h0m-1085 1h0m391 0h0m290 0h0m325 0h0m-888 1h0m21 0h0m229 0h0m97 0h0m-292 1h0m38 0h0m53 0h0m248 0h0m69 0h0m216 0h0m40 0h0m229 0h0m55 0h0m-824 1h0m16 0h0m455 0h0m190 0h0m-264 1h0m-309 1h0m9 0h0m243 0h0m76 0h0m366 0h0m-941 1h0m442 0h0m31 0h0m46 0h0m405 0h0m-497 1h0m477 0h0m-964 1h0m817 0h0m219 0h0m-1116 1h0m602 0h0m179 0h0m-267 1h0m70 0h0m14 0h0m230 0h0m56 0h0m-692 1h0m265 0h0m314 0h0m244 0h0m-926 1h0m158 0h0m299 0h0m305 1h0m-725 1h0m942 0h0m-906 1h0m178 0h0m462 1h0m301 0h0m-749 1h0m-265 1h0m241 0h0m88 0h0m463 0h0m-756 1h0m167 0h0m628 0h0m-952 1h0m244 0h0m612 0h0m69 0h0m-798 1h0m123 0h0m487 0h0m307 0h0m96 0h0m19 0h0m17 0h0m-1118 1h0m26 0h0m62 0h0m483 0h0m411 0h0m-910 1h0m45 0h0m799 0h0m50 0h0m-928 1h0m222 0h0m85 0h0m103 0h0m348 0h0m-849 1h0m176 0h0m499 0h0m482 0h0m-1032 1h0m250 0h0m346 0h0m-632 1h0m217 0h0m151 1h0m100 0h0m136 0h0m-212 1h0m344 0h0m176 0h0m-980 1h0m86 0h0m37 0h0m69 0h0m220 0h0m521 0h0m-913 1h0m199 0h0m-16 1h0m330 0h0m-132 1h0m400 0h0m31 0h0m63 1h0m101 0h0m147 0h0m-776 1h0m-315 1h0m447 0h0m100 0h0m162 0h0m98 0h0m-811 1h0m235 0h0m58 0h0m-330 1h0m418 0h0m307 0h0m379 0h0m-970 1h0m209 0h0m40 0h0m28 0h0m236 0h0m15 0h0m312 0h0m38 0h0m40 0h0m89 0h0m-1080 1h0m173 0h0m194 0h0m585 1h0m3 0h0m99 0h0m-1000 1h0m159 0h0m237 0h0m129 0h0m496 0h0m-606 1h0m229 0h0m72 0h0m2 0h0m71 0h0m65 0h0m74 0h0m-845 1h0m26 0h0m616 0h0m199 0h0m62 0h0m-943 1h0m189 0h0m81 0h0m71 0h0m564 0h0m-1059 1h0m299 0h0m37 0h0m347 0h0m244 1h0m203 0h0m-846 1h0m75 0h0m117 0h0m516 0h0m-1023 1h0m265 0h0m691 1h0m-763 1h0m302 0h0m215 0h0m-537 1h0m396 0h0m527 0h0m-363 1h0m124 0h0m222 1h0m-657 1h0m121 0h0m41 0h0m240 0h0m301 0h0m-1110 1h0m346 0h0m355 0h0m3 0h0m195 0h0m-598 1h0m405 0h0m160 0h0m33 1h0m-919 1h0m604 0h0m0 0h0m9 0h0m41 0h0m153 0h0m132 0h0m208 0h0m-324 1h0m69 0h0m62 0h0m31 0h0m-971 1h0m148 0h0m165 0h0m327 0h0m82 0h0m-659 1h0m316 0h0m83 0h0m236 0h0m-605 1h0m5 0h0m484 0h0m288 0h0m143 0h0m77 0h0m11 0h0m-750 1h0m18 0h0m289 0h0m-233 1h0m411 0h0m234 0h0m-329 1h0m166 0h0m123 0h0m-968 1h0m170 0h0m597 0h0m-253 1h0m407 0h0m-695 2h0m649 0h0m36 0h0m-166 1h0m-668 1h0m159 0h0m196 0h0m202 0h0m370 0h0m33 0h0m-968 1h0m129 0h0m460 0h0m374 0h0m-825 1h0m867 0h0m-1074 1h0m67 0h0m57 0h0m142 0h0m141 0h0m210 0h0m65 0h0m196 0h0m-797 1h0m168 0h0m407 0h0m-539 1h0m13 0h0m94 0h0m436 0h0m332 0h0m-605 1h0m6 0h0m646 0h0m-773 1h0m66 0h0m66 0h0m237 0h0m69 0h0m286 0h0m-165 1h0m148 0h0m-432 1h0m-612 1h0m487 0h0m14 1h0m127 0h0m-608 1h0m615 0h0m388 0h0m-1024 1h0m927 0h0m43 0h0m101 0h0m-787 1h0m138 0h0m20 0h0m372 0h0m343 0h0m-977 1h0m21 0h0m238 0h0m185 1h0m174 0h0m-761 1h0m296 0h0m192 0h0m263 0h0m51 0h0m321 2h0m-567 1h0m210 0h0m185 0h0m27 0h0m114 0h0m-661 1h0m63 0h0m331 0h0m-485 1h0m145 0h0m18 0h0m25 0h0m456 1h0m-950 2h0m219 0h0m877 0h0m-966 1h0m407 0h0m-109 1h0m59 0h0m217 0h0m220 0h0m-759 1h0m541 0h0m262 0h0m9 0h0m-727 1h0m347 0h0m204 0h0m-514 1h0m207 0h0m402 0h0m-371 1h0m477 0h0m-940 2h0m599 0h0m52 0h0m63 0h0m172 0h0m-760 1h0m412 0h0m80 0h0m77 0h0m58 0h0m101 0h0m27 1h0m46 0h0m-786 1h0m563 0h0m115 0h0m-895 1h0m51 0h0m38 0h0m88 0h0m157 0h0m428 0h0m138 0h0m1 0h0m55 0h0m19 0h0m-957 1h0m138 0h0m45 0h0m107 0h0m74 0h0m58 0h0m75 0h0m17 0h0m376 0h0m17 0h0m119 0h0m-805 1h0m6 0h0m583 0h0m174 0h0m39 0h0m-443 1h0m249 1h0m-541 1h0m458 0h0m249 0h0m-553 1h0m-56 1h0m531 0h0m4 0h0m-913 1h0m420 0h0m78 0h0m510 1h0m-1013 1h0m203 0h0m302 0h0m64 0h0m5 0h0m2 0h0m161 0h0m-361 1h0m450 0h0m45 0h0m97 0h0m-457 1h0m-78 1h0m344 0h0m242 0h0m-846 1h0m109 0h0m683 0h0m-810 1h0m321 0h0m298 0h0m245 0h0m-493 1h0m27 0h0m9 0h0m-318 1h0m22 0h0m127 0h0m364 0h0m64 0h0m-354 1h0m58 0h0m288 0h0m13 0h0m203 0h0m-967 1h0m106 0h0m51 0h0m-304 1h0m962 0h0m-967 1h0m1139 0h0m-832 1h0m333 0h0m344 0h0m7 0h0m-393 1h0m187 0h0m-692 1h0m599 0h0m36 0h0m209 0h0m215 0h0m27 0h0m-1010 1h0m322 0h0m63 0h0m54 0h0m59 0h0m136 0h0m161 0h0m47 0h0m59 0h0m-808 1h0m137 0h0m86 0h0m99 0h0m198 0h0m0 0h0m48 0h0m-810 1h0m831 0h0m203 0h0m-1015 1h0m53 0h0m346 0h0m320 0h0m97 0h0m138 0h0m-414 1h0m230 0h0m152 0h0m94 0h0m-578 1h0m77 0h0m138 0h0m199 0h0m260 0h0m24 0h0m-1016 1h0m262 1h0m94 0h0m123 0h0m529 0h0m-504 1h0m-388 1h0m49 1h0m107 0h0m740 0h0m-943 1h0m510 0h0m-578 1h0m210 0h0m162 0h0m21 0h0m284 0h0m72 0h0m54 0h0m-939 1h0m342 0h0m41 0h0m373 0h0m-752 1h0m124 0h0m284 0h0m301 0h0m56 1h0m106 0h0m-826 1h0m267 0h0m189 0h0m167 0h0m59 0h0m-286 1h0m165 0h0m-550 1h0m49 0h0m155 0h0m86 0h0m11 0h0m70 0h0m93 0h0m91 0h0m109 0h0m395 0h0m-1140 1h0m13 0h0m933 0h0m-695 1h0m549 0h0m371 0h0m-1173 1h0m485 0h0m229 0h0m29 0h0m160 0h0m-896 1h0m28 0h0m5 0h0m675 0h0m140 0h0m99 0h0m-798 1h0m20 0h0m480 0h0m-333 1h0m837 0h0m-940 1h0m114 0h0m698 0h0m82 0h0m-726 1h0m362 0h0m131 0h0m-844 1h0m288 0h0m601 0h0m229 0h0m-1098 1h0m93 0h0m14 0h0m487 0h0m3 0h0m23 0h0m-526 1h0m513 0h0m86 0h0m28 0h0m56 0h0m225 0h0m-914 1h0m152 0h0m102 0h0m536 0h0m99 0h0m96 0h0m-870 1h0m114 0h0m52 1h0m-143 1h0m12 0h0m628 0h0m199 0h0m39 0h0m-1142 2h0m335 0h0m818 0h0m-486 1h0m172 0h0m195 0h0m-1044 1h0m303 0h0m78 0h0m388 0h0m277 0h0m-615 1h0m40 0h0m205 0h0m142 0h0m294 0h0m-1121 1h0m624 0h0m180 0h0m-784 1h0m17 0h0m66 0h0m87 0h0m434 0h0m-93 1h0m188 0h0m62 0h0m248 0h0m29 1h0m-1020 1h0m169 0h0m372 0h0m361 0h0m-869 1h0m168 0h0m486 0h0m94 0h0m240 0h0m-915 1h0m450 0h0m174 0h0m229 0h0m18 0h0m47 0h0m-919 1h0m20 0h0m55 0h0m56 0h0m16 0h0m562 0h0m0 0h0m236 0h0m-1011 1h0m401 1h0m164 0h0m84 0h0m296 0h0m-780 1h0m357 0h0m117 0h0m174 0h0m-688 1h0m595 0h0m292 0h0m-339 1h0m-682 1h0m172 0h0m251 0h0m189 0h0m-553 1h0m529 0h0m-570 1h0m302 0h0m516 0h0m3 0h0m18 0h0m-828 1h0m41 0h0m175 0h0m66 0h0m621 0h0m-78 1h0m29 0h0m34 0h0m-373 1h0m200 0h0m122 0h0m-95 1h0m101 0h0m138 0h0m64 0h0m-1021 1h0m492 0h0m63 0h0m161 2h0m-808 1h0m803 0h0m121 0h0m177 0h0m-564 1h0m588 0h0m-1110 1h0m517 0h0m238 0h0m-415 1h0m339 0h0m-268 1h0m60 0h0m417 0h0m41 0h0m-845 1h0m196 0h0m487 0h0m277 0h0m-501 1h0m162 0h0m58 0h0m78 0h0m-827 1h0m305 0h0m108 1h0m4 0h0m178 0h0m60 0h0m123 0h0m35 0h0m-724 1h0m612 0h0m21 0h0m241 0h0m-219 1h0m354 0h0m-327 1h0m117 0h0m-373 1h0m-417 1h0m367 0h0m362 0h0m67 0h0m-835 1h0m8 0h0m211 0h0m53 0h0m270 0h0m34 0h0m25 0h0m290 0h0m-734 1h0m454 0h0m283 0h0m-621 1h0m396 0h0m285 0h0m-920 1h0m303 0h0m171 0h0m15 0h0m96 0h0m1 0h0m106 0h0m2 0h0m-563 1h0m643 0h0m-861 1h0m135 0h0m296 0h0m436 0h0m-361 1h0m156 0h0m-712 1h0m92 0h0m3 0h0m89 0h0m11 0h0m126 0h0m53 0h0m-365 2h0m369 0h0m582 0h0m41 0h0m18 0h0m-795 1h0m326 0h0m76 0h0m21 0h0m-368 1h0m413 0h0m133 0h0m-560 1h0m215 0h0m49 0h0m48 0h0m494 0h0m21 0h0m-344 1h0m387 0h0m-478 1h0m-266 1h0m-323 1h0m38 0h0m739 0h0m177 0h0m-184 1h0m-727 2h0m21 0h0m394 0h0m34 0h0m293 0h0m10 0h0m139 0h0m53 0h0m-150 1h0m86 0h0m-977 1h0m273 0h0m84 0h0m89 0h0m162 0h0m33 0h0m195 0h0m-850 1h0m114 0h0m580 0h0m19 0h0m4 0h0m313 0h0m-338 1h0m-620 1h0m39 0h0m402 0h0m74 0h0m284 0h0m221 0h0m-1093 1h0m128 0h0m-16 1h0m402 0h0m104 0h0m305 0h0m32 1h0m66 0h0m-963 2h0m117 0h0m3 0h0m210 0h0m298 0h0m273 0h0m175 0h0m-849 1h0m220 0h0m135 0h0m155 0h0m204 0h0m-854 1h0m47 0h0m206 0h0m198 0h0m560 0h0m-672 1h0m593 0h0m-459 1h0m-384 1h0m667 1h0m13 0h0m187 0h0m-813 1h0m395 0h0m-645 1h0m105 0h0m453 0h0m23 0h0m271 0h0m48 0h0m11 1h0m-579 2h0m69 0h0m319 0h0m78 0h0m-270 1h0m96 0h0m19 0h0m29 0h0m-679 1h0m143 0h0m243 0h0m40 1h0m13 0h0m424 0h0m-366 1h0m195 0h0m107 0h0m-819 2h0m168 0h0m871 0h0m-880 1h0m151 0h0m360 0h0m225 0h0m-889 1h0m700 0h0m-683 1h0m18 0h0m757 0h0m348 0h0m-900 1h0m350 0h0m130 0h0m187 0h0m32 0h0m-843 1h0m60 0h0m596 0h0m142 1h0m-671 1h0m758 0h0m10 0h0m-914 1h0m420 0h0m158 0h0m424 0h0m-808 1h0m662 0h0m158 0h0m-1087 1h0m224 0h0m341 0h0m-267 1h0m340 0h0m182 0h0m31 0h0m235 0h0m-851 1h0m114 0h0m94 0h0m209 0h0m208 0h0m51 0h0m-946 1h0m236 0h0m237 0h0m-319 1h0m819 0h0m77 0h0m117 0h0m-1128 1h0m347 0h0m283 0h0m137 0h0m148 0h0m15 0h0m-886 1h0m25 0h0m318 0h0m720 0h0m-1115 1h0m1056 0h0m55 0h0m-621 1h0m132 0h0m207 0h0m305 0h0m-981 1h0m329 0h0m98 0h0m132 0h0m-500 1h0m-105 1h0m60 0h0m255 0h0m48 0h0m291 0h0m297 0h0m-620 1h0m63 0h0m467 0h0m116 0h0m54 0h0m-384 1h0m-204 1h0m33 0h0m68 0h0m235 0h0m156 0h0m68 0h0m-1106 1h0m668 0h0m138 0h0m307 0h0"/>
<path transform="translate(.5 .5)" stroke="rgb(82,82,82)" stroke-width="1" stroke-linecap="square" d="M203 0h0m131 0h0m533 0h0m-323 1h0m111 0h0m228 0h0m76 0h0m96 0h0m-43 1h0m113 0h0m-461 1h0m77 0h0m-532 1h0m362 0h0m-330 1h0m-19 1h0m273 0h0m178 0h0m435 0h0m-690 1h0m394 0h0m124 0h0m39 0h0m-593 1h0m293 0h0m192 0h0m-841 1h0m940 0h0m36 0h0m-1000 1h0m1175 0h0m-1158 1h0m143 0h0m330 0h0m-322 1h0m307 0h0m478 0h0m224 0h0m-1175 1h0m257 0h0m320 0h0m214 0h0m145 0h0m5 0h0m-647 1h0m881 0h0m-674 1h0m196 0h0m291 0h0m-713 1h0m345 0h0m400 0h0m33 0h0m-699 1h0m224 0h0m581 1h0m-629 3h0m101 0h0m-58 1h0m0 0h0m-384 1h0m92 1h0m116 1h0m753 0h0m-705 1h0m211 0h0m106 0h0m-159 1h0m284 0h0m-847 1h0m520 0h0m13 0h0m231 0h0m-505 1h0m270 0h0m586 0h0m-512 1h0m112 0h0m24 0h0m135 0h0m-738 1h0m310 0h0m-448 1h0m241 0h0m376 0h0m52 0h0m83 0h0m28 0h0m-768 1h0m209 0h0m630 0h0m-522 1h0m49 0h0m175 0h0m421 0h0m21 0h0m-826 1h0m909 1h0m-664 1h0m546 0h0m74 0h0m-714 1h0m22 0h0m598 0h0m-916 2h0m73 0h0m385 0h0m432 0h0m-777 1h0m797 0h0m-530 1h0m-358 1h0m390 0h0m618 0h0m-717 1h0m69 0h0m210 0h0m216 0h0m140 0h0m-414 2h0m76 0h0m90 0h0m-199 1h0m289 1h0m-692 2h0m70 0h0m221 0h0m2 1h0m552 2h0m89 0h0m-926 1h0m-109 1h0m291 0h0m254 0h0m403 0h0m119 0h0m-983 1h0m70 2h0m232 0h0m187 0h0m496 0h0m-543 2h0m62 0h0m-401 1h0m324 0h0m-573 1h0m118 0h0m590 0h0m125 0h0m341 0h0m-847 1h0m364 0h0m-635 1h0m251 0h0m381 0h0m172 0h0m-615 1h0m28 0h0m435 0h0m42 0h0m-600 1h0m209 0h0m329 0h0m131 0h0m-506 1h0m-272 1h0m8 0h0m173 1h0m52 1h0m786 0h0m-1033 1h0m430 0h0m30 0h0m297 0h0m-780 1h0m1088 0h0m59 0h0m-183 1h0m-740 1h0m887 0h0m-875 1h0m390 0h0m304 0h0m34 0h0m188 0h0m-562 1h0m334 1h0m96 0h0m39 0h0m-521 1h0m-67 1h0m260 0h0m80 0h0m-506 1h0m130 0h0m18 1h0m85 0h0m92 1h0m376 0h0m-1001 1h0m151 0h0m516 0h0m422 0h0m-969 1h0m850 0h0m14 0h0m-806 1h0m744 0h0m-511 1h0m49 0h0m122 0h0m507 0h0m-842 1h0m639 0h0m40 0h0m181 0h0m-991 1h0m437 0h0m144 0h0m101 0h0m-548 1h0m514 0h0m308 0h0m-498 1h0m-446 1h0m-41 1h0m69 0h0m242 0h0m257 0h0m76 0h0m72 0h0m244 0h0m-204 1h0m44 0h0m125 0h0m-637 1h0m622 1h0m103 0h0m33 0h0m-617 1h0m131 0h0m14 0h0m5 0h0m153 0h0m-433 1h0m86 0h0m65 0h0m181 0h0m28 0h0m23 0h0m-235 1h0m282 0h0m-74 1h0m393 0h0m-104 1h0m-272 1h0m-742 1h0m202 0h0m117 0h0m33 0h0m158 0h0m304 0h0m147 0h0m106 0h0m-807 1h0m-256 1h0m139 0h0m247 0h0m272 0h0m139 0h0m227 0h0m112 0h0m-1001 1h0m439 0h0m-467 1h0m54 0h0m201 0h0m376 0h0m38 0h0m315 1h0m51 0h0m-1045 1h0m319 0h0m4 0h0m65 0h0m146 0h0m-586 1h0m390 0h0m626 0h0m-1049 1h0m682 1h0m238 0h0m211 0h0m-1170 1h0m72 0h0m161 0h0m811 0h0m-681 1h0m546 0h0m44 0h0m225 0h0m-1143 1h0m869 0h0m47 0h0m5 0h0m115 1h0m-1024 2h0m709 0h0m387 0h0m-1139 1h0m96 0h0m385 0h0m178 0h0m52 0h0m-628 1h0m675 0h0m131 0h0m1 0h0m238 0h0m-987 1h0m279 0h0m287 0h0m108 0h0m349 0h0m-989 1h0m724 0h0m-771 2h0m30 0h0m347 0h0m-142 1h0m142 0h0m82 0h0m349 0h0m204 0h0m-275 1h0m3 0h0m239 0h0m-981 1h0m182 0h0m544 0h0m248 0h0m40 0h0m-959 1h0m359 0h0m21 1h0m411 0h0m170 0h0m-443 1h0m111 0h0m308 0h0m-572 1h0m-244 1h0m214 0h0m276 0h0m90 0h0m139 0h0m114 0h0m-895 1h0m306 0h0m306 1h0m167 0h0m93 0h0m-856 1h0m288 0h0m96 0h0m-551 1h0m0 0h0m0 0h0m133 0h0m-173 1h0m105 0h0m252 0h0m100 1h0m-17 1h0m459 0h0m50 0h0m-693 1h0m353 0h0m59 0h0m452 0h0m-1014 1h0m-18 1h0m190 0h0m23 0h0m12 0h0m-195 1h0m161 0h0m166 0h0m323 0h0m-596 1h0m705 1h0m-876 1h0m345 0h0m103 0h0m190 0h0m-274 1h0m4 0h0m132 0h0m461 0h0m85 0h0m-921 1h0m128 0h0m122 0h0m679 0h0m-131 1h0m61 0h0m81 0h0m10 0h0m-985 1h0m229 0h0m655 0h0m50 0h0m-779 1h0m-35 1h0m265 0h0m560 0h0m-998 1h0m11 0h0m77 0h0m315 0h0m606 0h0m19 0h0m48 1h0m-752 1h0m141 0h0m103 0h0m38 0h0m52 0h0m329 0h0m-252 1h0m-711 1h0m120 0h0m112 0h0m400 0h0m-452 1h0m12 0h0m41 0h0m63 0h0m74 0h0m531 0h0m74 0h0m-1066 1h0m178 1h0m403 0h0m222 1h0m58 0h0m-525 1h0m-320 1h0m-1 1h0m191 0h0m-194 1h0m490 0h0m92 0h0m2 0h0m-235 1h0m-196 1h0m-59 1h0m52 0h0m776 0h0m-916 1h0m198 0h0m199 0h0m176 0h0m63 0h0m72 0h0m165 0h0m-880 2h0m815 0h0m-655 2h0m410 1h0m269 0h0m-568 1h0m433 0h0m325 0h0m-832 1h0m715 0h0m112 0h0m-560 1h0m370 0h0m-647 1h0m311 0h0m474 0h0m-893 1h0m144 0h0m750 0h0m-415 1h0m535 0h0m-959 1h0m454 0h0m-93 1h0m218 0h0m-198 1h0m130 0h0m79 0h0m274 0h0m128 0h0m-626 1h0m15 0h0m127 0h0m-133 1h0m71 0h0m162 0h0m188 0h0m135 0h0m-650 1h0m36 1h0m409 0h0m-881 1h0m42 0h0m331 0h0m443 0h0m-711 1h0m90 0h0m12 0h0m692 0h0m97 1h0m-749 1h0m281 0h0m484 0h0m-863 1h0m463 0h0m-579 1h0m460 0h0m137 0h0m-114 1h0m34 0h0m39 0h0m-525 1h0m39 1h0m-69 1h0m322 0h0m305 0h0m83 0h0m-700 1h0m261 0h0m60 0h0m53 0h0m665 0h0m-1057 1h0m348 0h0m8 0h0m50 0h0m482 0h0m184 0h0m-817 1h0m806 0h0m-442 1h0m499 0h0m-927 1h0m-44 1h0m417 0h0m114 0h0m155 0h0m184 0h0m-528 1h0m643 0h0m-1154 1h0m12 0h0m430 0h0m240 0h0m-642 1h0m175 0h0m462 0h0m245 0h0m-467 1h0m479 0h0m101 0h0m23 0h0m-487 1h0m588 0h0m4 0h0m-287 1h0m62 0h0m60 0h0m-887 1h0m558 0h0m371 0h0m-515 1h0m235 0h0m65 0h0m-266 2h0m179 0h0m75 0h0m49 0h0m24 0h0m-888 2h0m141 0h0m49 0h0m258 0h0m131 0h0m-545 1h0m828 0h0m176 0h0m-455 1h0m36 0h0m-510 1h0m146 0h0m53 0h0m11 0h0m147 0h0m-406 1h0m160 1h0m196 0h0m139 0h0m-563 1h0m58 0h0m54 0h0m375 0h0m73 0h0m153 0h0m303 0h0m-872 1h0m217 0h0m487 0h0m-666 1h0m45 0h0m272 0h0m57 0h0m51 1h0m-375 1h0m87 0h0m-276 1h0m-9 1h0m2 0h0m308 0h0m383 1h0m132 0h0m172 0h0m70 0h0m-778 1h0m121 0h0m153 0h0m-301 1h0m228 0h0m298 0h0m-625 3h0m793 0h0m-977 1h0m163 0h0m4 0h0m-150 2h0m69 0h0m286 1h0m300 0h0m50 0h0m153 0h0m-689 1h0m282 0h0m630 0h0m-1074 1h0m112 0h0m4 0h0m327 0h0m71 1h0m97 0h0m355 0h0m-883 1h0m122 0h0m285 0h0m415 0h0m-616 2h0m-106 1h0m184 0h0m-402 1h0m61 0h0m613 0h0m435 0h0m7 0h0m50 0h0m-1056 1h0m188 0h0m5 0h0m93 0h0m48 0h0m175 0h0m252 0h0m-737 1h0m81 0h0m256 0h0m150 0h0m40 0h0m378 1h0m-697 1h0m-332 1h0m551 0h0m-397 1h0m482 0h0m428 0h0m50 0h0m-332 1h0m106 0h0m-728 1h0m638 0h0m109 0h0m-910 1h0m46 0h0m260 0h0m157 0h0m281 0h0m-354 1h0m81 0h0m-455 1h0m-19 1h0m569 0h0m136 0h0m18 0h0m78 0h0m105 0h0m-709 1h0m458 0h0m192 0h0m-657 1h0m868 0h0m-464 1h0m16 0h0m50 0h0m337 0h0m-990 1h0m78 0h0m172 0h0m-219 1h0m453 0h0m248 0h0m247 0h0m-939 1h0m222 0h0m361 0h0m-605 2h0m624 1h0m91 0h0m24 0h0m279 0h0m29 0h0m69 0h0m-1132 1h0m316 0h0m180 0h0m-35 1h0m29 0h0m177 1h0m112 0h0m-801 1h0m171 0h0m425 0h0m219 0h0m201 0h0m-902 1h0m202 0h0m75 0h0m372 0h0m177 0h0m156 0h0m-400 1h0m276 0h0m-672 1h0m448 0h0m168 0h0m-635 1h0m264 0h0m-531 1h0m1014 0h0m-923 1h0m69 0h0m143 0h0m-186 2h0m253 0h0m188 1h0m376 0h0m-919 1h0m189 1h0m880 1h0m-657 1h0m-57 1h0m-58 1h0m197 0h0m190 0h0m94 0h0m-730 1h0m319 0h0m571 0h0m-641 1h0m591 0h0m-545 1h0m405 0h0m336 0h0m54 0h0m-1021 1h0m186 0h0m320 1h0m426 0h0m-652 1h0m-312 1h0m134 0h0m168 0h0m114 0h0m-462 1h0m361 0h0m118 0h0m-501 1h0m138 0h0m156 0h0m604 1h0m-751 1h0m372 0h0m99 0h0m92 0h0m-489 1h0m200 0h0m481 0h0m-544 1h0m373 0h0m-634 1h0m74 0h0m69 0h0m423 0h0m50 0h0m167 0h0m-557 1h0m61 0h0m-67 1h0m13 0h0m-153 1h0m166 0h0m338 0h0m284 1h0m-800 1h0m174 0h0m169 0h0m262 0h0m199 0h0m-661 1h0m440 0h0m5 0h0m-72 1h0m40 0h0m49 0h0m-589 1h0m387 0h0m306 0h0m-657 1h0m220 1h0m158 0h0m213 0h0m-94 1h0m-565 1h0m322 0h0m110 0h0m300 0h0m-840 1h0m189 0h0m259 0h0m604 0h0m-792 1h0m146 0h0m24 0h0m118 0h0m176 0h0m13 0h0m-824 1h0m2 0h0m211 0h0m367 1h0m113 0h0m310 0h0m1 0h0m37 0h0m-808 1h0m28 0h0m541 0h0m3 0h0m-791 1h0m265 0h0m394 1h0m339 0h0m-310 1h0m171 0h0m-511 1h0m216 0h0m-500 2h0m225 0h0m226 0h0m441 2h0m-697 1h0m844 0h0m-58 1h0m-404 1h0m-596 1h0m227 0h0m380 0h0m-358 1h0m140 0h0m165 0h0m-209 1h0m737 0h0m-700 1h0m157 1h0m253 0h0m255 0h0m-781 1h0m259 0h0m315 0h0m-763 1h0m671 0h0m152 0h0m37 0h0m93 0h0m76 0h0m-1121 1h0m190 0h0m133 0h0m74 0h0m191 0h0m-599 1h0m90 0h0m419 0h0m42 0h0m245 0h0m-816 1h0m465 0h0m44 0h0m91 0h0m254 0h0m-403 1h0m-377 2h0m246 0h0m52 0h0m-332 3h0m212 0h0m770 0h0m-805 1h0m20 0h0m154 0h0m12 0h0m368 0h0m309 0h0m-445 1h0m-223 1h0m-150 1h0m838 0h0m-1101 1h0m92 0h0m178 0h0m111 0h0m174 0h0m255 0h0m64 0h0m278 0h0m-282 1h0m75 0h0m-289 1h0m72 0h0m208 0h0m161 0h0m-757 1h0m759 0h0m-1090 1h0m61 0h0m863 0h0m75 0h0m-721 1h0m341 0h0m221 0h0m-841 1h0m365 0h0m-353 1h0m86 0h0m971 0h0m-622 1h0m178 0h0m160 0h0m188 0h0m-642 1h0m236 0h0m377 0h0m-626 1h0m19 0h0m-276 1h0m94 0h0m502 0h0m87 1h0m115 0h0m-874 1h0m551 0h0m529 0h0m-873 1h0m225 0h0m447 1h0m87 0h0m-618 1h0m776 0h0m-1125 1h0m206 1h0m307 0h0m549 0h0m8 0h0m-976 1h0m163 0h0m190 0h0m136 0h0m223 0h0m-806 1h0m344 0h0m3 0h0m90 0h0m179 0h0m-561 1h0m31 0h0m206 0h0m551 0h0m-743 1h0m590 0h0m215 0h0m223 0h0m-1045 1h0m440 0h0m185 0h0m55 0h0m206 0h0m29 0h0m-308 1h0m-664 1h0m439 0h0m253 0h0m254 0h0m101 0h0m-991 1h0m321 0h0m256 0h0m-277 1h0m509 0h0m75 0h0m56 0h0m-764 1h0m36 0h0m400 0h0m-469 2h0m29 1h0m48 0h0m564 0h0m242 0h0m-521 1h0m-441 1h0m481 0h0m220 0h0m34 0h0m66 0h0m51 0h0m18 0h0m160 0h0m-1091 1h0m185 0h0m352 1h0m395 0h0m-174 1h0m61 0h0m48 0h0m162 0h0m-525 1h0m-381 1h0m938 0h0m-843 1h0m417 0h0m136 0h0m-474 1h0m667 0h0m-815 1h0m147 0h0m70 0h0m241 0h0m-667 1h0m77 0h0m556 0h0m264 0h0m92 0h0m-379 1h0m-485 1h0m45 0h0m206 0h0m507 0h0m-72 1h0m218 0h0m10 0h0m-565 1h0m300 1h0m-383 1h0m32 0h0m-256 1h0m414 0h0m25 0h0m320 1h0m-256 1h0m11 0h0m165 0h0m-110 1h0m28 0h0m143 0h0m179 0h0m-788 1h0m105 0h0m-188 1h0m34 0h0m93 0h0m179 0h0m524 0h0m66 0h0m-1086 1h0m521 0h0m95 0h0m100 0h0m-642 1h0m164 0h0m470 0h0m-534 1h0m147 1h0m215 0h0m147 0h0m68 1h0m176 1h0m-589 1h0m153 0h0m599 0h0m-675 1h0m225 0h0m41 0h0m106 0h0m94 0h0m226 0h0m-902 1h0m107 0h0m441 0h0m23 0h0m-431 1h0m262 0h0m-167 1h0m429 0h0m138 0h0m-825 1h0m104 1h0m229 0h0m354 0h0m224 0h0m-536 1h0m519 0h0m8 0h0m-446 1h0m-523 1h0m152 0h0m245 0h0m33 0h0m234 0h0m-538 2h0m161 0h0m169 1h0m150 0h0m105 0h0m77 0h0m80 0h0m-472 1h0m414 0h0m-958 1h0m259 0h0m238 0h0m493 0h0m-892 1h0m603 0h0m112 0h0m302 0h0m-1013 1h0m948 0h0m-652 1h0m582 0h0m40 0h0m-774 1h0m42 0h0m136 0h0m16 0h0m266 0h0m124 0h0m-611 1h0m640 0h0m-608 1h0m52 0h0m563 0h0m-765 1h0m171 0h0m-45 1h0m-237 1h0m293 0h0m76 0h0m556 0h0m194 0h0m-963 1h0m19 1h0m539 0h0m282 0h0m14 0h0m-355 1h0m479 0h0m-678 1h0m0 1h0m410 0h0m179 1h0m-673 1h0m171 0h0m-410 2h0m79 0h0m217 0h0m-298 1h0m423 0h0m-527 1h0m660 1h0m255 0h0m-137 1h0m180 0h0m-860 1h0m760 0h0m102 0h0m-891 1h0m164 0h0m74 0h0m166 0h0m607 0h0m25 0h0m-451 1h0m95 0h0m117 0h0m-883 1h0m325 1h0m125 0h0m189 0h0m119 0h0m-732 1h0m16 0h0m341 0h0m147 0h0m0 1h0m49 0h0m377 0h0m174 0h0m26 0h0m-253 1h0m-717 1h0m551 0h0m-619 1h0m595 0h0m-720 1h0m541 0h0m-533 1h0m93 0h0m562 0h0m390 0h0m-320 1h0m261 0h0m-216 1h0m35 0h0m-828 2h0m179 0h0m120 0h0m43 0h0m52 0h0m94 0h0m189 0h0m-623 1h0m391 0h0m606 0h0m-840 1h0m302 0h0m76 0h0m218 0h0m-613 1h0m284 0h0m85 0h0m43 0h0m126 0h0m147 0h0m-799 1h0m626 0h0m-207 1h0m226 0h0m208 0h0m193 0h0m-816 2h0m22 0h0m98 0h0m528 0h0m214 0h0m-221 1h0m-916 1h0m120 0h0m420 0h0m452 0h0m103 0h0m-987 1h0m102 0h0m299 0h0m240 0h0m232 0h0m-566 1h0m132 0h0m215 0h0m92 0h0m105 0h0m-869 1h0m219 0h0m55 0h0m351 0h0m96 0h0m296 0h0m-1042 1h0m208 0h0m475 0h0m42 0h0m347 0h0m-829 1h0m170 0h0m266 0h0m27 0h0m123 0h0m10 0h0m-728 1h0m134 0h0m235 0h0m113 0h0m483 0h0m-929 1h0m1 0h0m12 0h0m247 0h0m14 1h0m102 0h0m-102 1h0m509 0h0m-1025 1h0m365 0h0m-8 1h0m605 0h0m127 0h0m-1073 1h0m40 0h0m390 0h0m-223 1h0m31 0h0m84 0h0m398 0h0m96 0h0m22 0h0m-803 1h0m57 0h0m47 0h0m138 0h0m-153 1h0m136 0h0m31 0h0m479 1h0m151 0h0m-846 1h0m126 0h0m270 0h0m285 0h0m-38 1h0m264 0h0m-958 1h0m125 0h0m932 0h0m-514 1h0m120 0h0m77 0h0m207 0h0m139 0h0m23 0h0m-1005 1h0m-67 1h0m153 0h0m46 0h0m318 0h0m295 0h0m56 0h0m40 0h0m-933 1h0m444 0h0m7 0h0m12 0h0m-455 1h0m369 0h0m283 0h0m190 0h0m159 0h0m-967 1h0m434 0h0m330 0h0m-748 1h0m255 0h0m480 0h0m122 0h0m-848 1h0m90 0h0m239 0h0m126 0h0m202 0h0m-386 1h0m740 0h0m-16 1h0m-834 1h0m468 0h0m1 0h0m24 0h0m61 0h0m235 0h0m95 0h0m-1143 1h0m37 0h0m181 0h0m421 0h0m194 0h0m34 0h0m-883 1h0m690 0h0m113 0h0m138 1h0m88 0h0m-661 1h0m54 0h0m355 0h0m-726 1h0m110 0h0m862 0h0m-888 1h0m280 0h0m166 0h0m150 0h0m140 1h0m18 0h0m159 1h0m-976 1h0m192 0h0m308 0h0m28 0h0m323 0h0m76 0h0m104 0h0m-1006 1h0m99 0h0m30 0h0m100 0h0m-218 1h0m54 0h0m556 0h0m409 0h0m-1007 1h0m611 1h0m21 0h0m-516 1h0m-75 1h0m358 0h0m263 0h0m190 0h0m-351 1h0m-108 1h0m378 0h0m180 0h0m-1048 1h0m482 0h0m33 0h0m-391 1h0m-4 1h0m43 0h0m303 0h0m359 0h0m-553 1h0m251 0h0m356 0h0m144 0h0m-1021 1h0m90 0h0m553 0h0m-508 1h0m10 0h0m3 0h0m204 0h0m135 0h0m26 0h0m-476 1h0m108 0h0m94 0h0m42 0h0m189 0h0m180 0h0m19 0h0m13 0h0m346 0h0m-910 1h0m101 0h0m128 0h0m-297 1h0m128 0h0m95 0h0m631 0h0m-782 1h0m25 0h0m60 0h0m125 0h0m17 0h0m690 0h0m-1036 1h0m186 0h0m193 0h0m346 0h0m116 0h0m231 0h0m-470 1h0m-131 1h0m343 0h0m-589 1h0m-85 1h0m-168 1h0m763 0h0m-703 1h0m856 0h0m-831 1h0m5 0h0m959 0h0m70 0h0m-1053 1h0m154 0h0m7 0h0m236 0h0m253 0h0m103 0h0m-825 1h0m111 0h0m142 0h0m164 0h0m6 0h0m186 0h0m21 0h0m34 0h0m498 0h0m-942 1h0m367 0h0m12 0h0m7 0h0m186 1h0m303 0h0m-1030 1h0m59 0h0m320 0h0m161 0h0m30 1h0m451 0h0m-974 2h0m343 0h0m196 0h0m44 0h0m278 0h0m-541 1h0m40 0h0m197 0h0m217 0h0m99 0h0m24 0h0m44 0h0m-1037 1h0m174 0h0m29 0h0m315 0h0m213 0h0m261 0h0m-106 1h0m-67 1h0m123 0h0m-750 1h0m275 0h0m52 0h0m138 0h0m165 0h0m95 0h0m106 0h0m-887 1h0m208 0h0m-354 1h0m10 0h0m27 1h0m47 0h0m806 0h0m163 0h0m-701 1h0m506 0h0m-842 1h0m9 0h0m68 0h0m67 0h0m258 0h0m103 0h0m-240 2h0m229 0h0m585 0h0m-1059 1h0m374 0h0m107 0h0m170 0h0m122 1h0m-474 1h0m264 1h0m4 0h0m-441 1h0m20 0h0m106 0h0m213 0h0m93 0h0m167 0h0m-391 1h0m516 0h0m10 0h0m77 0h0m56 0h0m103 0h0m-848 1h0m717 0h0m-695 1h0m396 0h0m154 0h0m-456 1h0m59 0h0m121 0h0m12 0h0m1 0h0m423 0h0m-845 1h0m823 0h0m-821 1h0m95 0h0m-215 1h0m928 0h0m-800 1h0m49 0h0m145 0h0m80 0h0m114 0h0m146 0h0m90 0h0m299 0h0m-1039 1h0m182 0h0m593 0h0m-807 1h0m287 0h0m23 0h0m254 0h0m31 0h0m189 0h0m-45 2h0m210 0h0m-675 2h0m59 0h0m52 0h0m735 0h0m-1069 1h0m377 0h0m41 0h0m-106 1h0m-18 1h0m51 0h0m228 0h0m145 0h0m12 0h0m130 0h0m-844 1h0m327 0h0m366 0h0m-474 1h0m390 0h0m87 0h0m156 0h0m-928 1h0m199 0h0m243 1h0m-466 1h0m296 0h0m32 0h0m444 1h0m223 0h0m81 0h0m-942 1h0m219 0h0m16 0h0m495 0h0m218 0h0m-697 1h0m655 0h0m89 0h0m14 0h0m-1087 1h0m657 0h0m306 0h0m35 0h0m-1020 1h0m369 0h0m-248 1h0m362 0h0m446 0h0m-785 1h0m282 0h0m307 0h0m-405 1h0m409 0h0m-526 1h0m691 0h0m62 0h0m-1002 1h0m1046 1h0m-1052 1h0m184 0h0m499 0h0m224 0h0m-834 1h0m781 0h0m179 0h0m-883 1h0m320 0h0m38 0h0m-435 1h0m54 0h0m527 0h0m256 0h0m-578 1h0m119 0h0m90 0h0m87 0h0m-93 1h0m27 0h0m66 0h0m140 0h0m184 0h0m72 0h0m113 0h0m-727 1h0m163 0h0m197 0h0m-172 1h0m424 0h0m-947 1h0m211 0h0m105 0h0m289 0h0m38 0h0m79 0h0m112 0h0m56 0h0m-661 1h0m107 0h0m112 0h0m246 0h0m-713 1h0m48 0h0m384 0h0m386 0h0m41 0h0m-325 1h0m-515 1h0m934 0h0m-564 1h0m116 0h0m310 0h0m-505 1h0m794 0h0m-975 2h0m-42 1h0m682 0h0m356 0h0m-802 1h0m793 0h0m-1144 1h0m164 0h0m694 0h0m54 0h0m185 0h0m31 0h0m-923 1h0m792 0h0m125 0h0m-730 1h0m546 0h0m-838 1h0m87 0h0m312 0h0m249 0h0m55 0h0m303 0h0m-905 1h0m393 0h0m176 0h0m360 0h0m-618 1h0m438 0h0m74 0h0m30 0h0m84 0h0m-1074 1h0m42 0h0m621 0h0m6 0h0m-628 1h0m88 0h0m290 0h0m667 0h0m-225 1h0m78 0h0m5 0h0m121 0h0m-900 1h0m110 0h0m74 0h0m83 0h0m336 0h0m9 0h0m-849 1h0m866 0h0m5 0h0m-640 1h0m196 1h0m518 0h0m-185 1h0m104 0h0m74 0h0m156 0h0m-1116 2h0m1054 0h0m-1037 1h0m159 1h0m360 1h0m438 0h0m-870 1h0m21 0h0m364 0h0m290 0h0m363 0h0m-468 1h0m128 0h0m125 0h0m212 0h0m-937 1h0m581 0h0m147 0h0m-553 1h0m75 1h0m521 0h0m-771 1h0m419 0h0m-441 1h0m235 0h0m-159 1h0m-213 1h0m278 0h0m515 1h0m261 1h0m-982 1h0m210 0h0m723 0h0m-435 1h0m257 0h0m-489 1h0m74 0h0m287 0h0m344 0h0m-766 1h0m-9 1h0m606 0h0m133 0h0m-357 1h0m66 0h0m15 0h0m-716 1h0m214 0h0m142 0h0m514 0h0m103 0h0m-577 1h0m220 0h0m85 0h0m53 0h0m106 0h0m33 2h0m29 0h0m99 0h0m-941 1h0m-53 1h0m271 0h0m306 0h0m-654 1h0m675 0h0m45 1h0m5 0h0m-580 1h0m530 0h0m-218 2h0m689 0h0m-822 1h0m216 0h0m-197 1h0m366 0h0m-59 1h0m4 0h0m-636 1h0m290 0h0m55 0h0m592 0h0m116 0h0m-397 1h0m-628 1h0m91 0h0m237 0h0m243 0h0m-535 1h0m399 0h0"/>
<path transform="translate(.5 .5)" stroke="rgb(97,97,97)" stroke-width="1" stroke-linecap="square" d="M192 1h0m432 0h0m81 0h0m105 0h0m-416 1h0m494 0h0m121 0h0m-937 1h0m884 0h0m-691 1h0m-192 1h0m569 0h0m-486 1h0m199 0h0m-32 1h0m217 0h0m171 0h0m-609 1h0m551 0h0m-393 1h0m35 1h0m38 0h0m594 0h0m-569 1h0m79 0h0m244 0h0m343 0h0m19 0h0m-829 1h0m832 0h0m-799 1h0m365 1h0m410 0h0m-758 1h0m48 0h0m-72 1h0m353 0h0m-500 1h0m457 0h0m370 0h0m230 0h0m-1141 1h0m40 0h0m139 0h0m142 0h0m656 0h0m192 0h0m-999 2h0m323 1h0m13 0h0m-461 1h0m137 0h0m323 0h0m616 0h0m-983 1h0m826 0h0m198 1h0m-1022 1h0m33 0h0m190 0h0m638 0h0m44 0h0m-761 1h0m634 0h0m219 0h0m-477 1h0m234 0h0m-822 1h0m91 0h0m12 0h0m912 0h0m-824 2h0m826 0h0m-985 1h0m7 0h0m111 0h0m583 0h0m157 0h0m6 0h0m-2 2h0m-494 1h0m3 0h0m468 0h0m-873 1h0m768 0h0m-560 1h0m492 0h0m331 0h0m-1000 1h0m169 0h0m875 0h0m-350 1h0m-307 1h0m25 0h0m424 0h0m-863 2h0m972 0h0m8 0h0m-1022 1h0m241 0h0m-114 2h0m141 1h0m313 1h0m-34 1h0m-366 1h0m286 0h0m-114 1h0m368 0h0m324 0h0m37 0h0m-769 1h0m267 0h0m463 0h0m-801 1h0m16 0h0m582 0h0m28 0h0m234 0h0m-1056 1h0m967 0h0m-864 1h0m708 1h0m-387 1h0m198 0h0m82 0h0m90 0h0m43 0h0m117 0h0m86 0h0m-934 1h0m382 0h0m-552 1h0m127 1h0m993 0h0m39 0h0m-651 1h0m249 0h0m-737 1h0m291 0h0m2 0h0m112 0h0m260 0h0m261 0h0m-816 1h0m183 0h0m315 0h0m504 0h0m-344 1h0m-156 1h0m204 0h0m-806 1h0m565 0h0m296 0h0m-651 2h0m626 0h0m-869 1h0m117 0h0m830 0h0m-912 1h0m946 0h0m-355 1h0m209 0h0m45 0h0m78 0h0m-951 2h0m263 0h0m93 0h0m331 0h0m-247 1h0m42 0h0m629 0h0m-1116 1h0m443 0h0m194 0h0m383 0h0m39 0h0m-1043 1h0m286 0h0m49 1h0m548 0h0m-761 1h0m151 0h0m120 0h0m175 0h0m225 0h0m-623 1h0m284 0h0m271 0h0m-311 1h0m416 0h0m199 0h0m21 0h0m-682 1h0m10 0h0m489 0h0m195 0h0m-495 1h0m326 1h0m-832 1h0m119 0h0m125 0h0m326 0h0m157 2h0m-581 1h0m288 0h0m260 0h0m222 0h0m-927 1h0m159 0h0m-76 1h0m184 0h0m26 0h0m370 0h0m134 0h0m78 0h0m-451 1h0m150 0h0m136 0h0m53 0h0m291 0h0m-1134 1h0m416 0h0m436 0h0m73 0h0m143 0h0m-620 1h0m-267 1h0m623 0h0m119 0h0m-884 1h0m500 0h0m431 0h0m-922 1h0m718 0h0m317 0h0m-744 1h0m425 0h0m7 0h0m-562 1h0m-105 2h0m49 0h0m316 0h0m501 0h0m31 0h0m-859 1h0m224 0h0m331 0h0m-648 2h0m757 0h0m-264 1h0m563 0h0m-847 1h0m75 0h0m335 0h0m298 0h0m60 1h0m-811 1h0m-180 1h0m467 0h0m-149 1h0m552 0h0m-245 1h0m432 0h0m49 0h0m-1137 1h0m141 0h0m429 0h0m235 0h0m98 0h0m232 0h0m-1049 1h0m908 0h0m-954 1h0m1058 0h0m-56 1h0m-879 1h0m406 0h0m228 1h0m-294 1h0m-503 1h0m214 0h0m199 0h0m256 0h0m-625 1h0m286 0h0m172 0h0m378 0h0m41 0h0m225 0h0m-660 2h0m262 0h0m-220 1h0m224 0h0m-620 1h0m5 0h0m389 0h0m569 0h0m-1090 2h0m112 0h0m440 0h0m360 1h0m-674 1h0m444 0h0m331 0h0m-514 1h0m204 0h0m347 0h0m24 0h0m-677 1h0m334 0h0m-743 1h0m454 0h0m202 1h0m-435 1h0m98 0h0m155 0h0m60 0h0m142 0h0m-266 1h0m197 0h0m-400 1h0m410 0h0m31 0h0m39 0h0m-245 2h0m187 0h0m-355 1h0m21 0h0m210 0h0m226 1h0m-25 2h0m-449 1h0m-160 1h0m101 0h0m494 0h0m330 0h0m9 0h0m-805 1h0m109 0h0m433 0h0m-225 1h0m312 0h0m-688 2h0m42 0h0m359 0h0m80 0h0m68 0h0m434 0h0m-633 1h0m54 0h0m135 0h0m213 0h0m23 0h0m222 0h0m-1005 1h0m460 0h0m82 0h0m-486 1h0m198 0h0m439 0h0m-114 1h0m205 0h0m-940 1h0m63 0h0m203 0h0m71 1h0m534 0h0m74 0h0m-489 1h0m525 0h0m37 0h0m-807 1h0m285 0h0m154 0h0m-626 1h0m76 0h0m38 0h0m561 0h0m-216 1h0m78 0h0m478 0h0m-1016 1h0m590 0h0m299 0h0m188 0h0m-644 1h0m-153 1h0m414 0h0m21 0h0m384 0h0m-1103 1h0m606 0h0m169 0h0m334 0h0m-1136 1h0m346 0h0m660 0h0m77 0h0m43 0h0m-859 1h0m174 0h0m339 0h0m85 2h0m-337 1h0m157 0h0m4 0h0m442 0h0m-1044 1h0m50 0h0m809 0h0m-57 1h0m-658 1h0m284 0h0m434 1h0m134 0h0m-1080 1h0m5 0h0m1139 0h0m-163 1h0m-890 2h0m78 2h0m555 0h0m398 0h0m-595 1h0m138 0h0m398 1h0m-790 1h0m9 0h0m488 0h0m85 0h0m183 0h0m-929 2h0m33 1h0m110 0h0m762 1h0m-978 1h0m203 0h0m829 0h0m-605 1h0m476 0h0m174 0h0m-575 1h0m66 0h0m507 0h0m-600 1h0m241 0h0m337 0h0m-980 1h0m4 0h0m93 0h0m197 0h0m-394 1h0m9 0h0m389 0h0m58 0h0m-223 1h0m244 0h0m264 0h0m177 0h0m-686 1h0m288 0h0m369 0h0m-553 1h0m103 0h0m-400 1h0m202 0h0m208 0h0m532 0h0m184 0h0m-67 1h0m-555 1h0m-480 1h0m213 0h0m-222 1h0m40 0h0m735 0h0m131 0h0m118 0h0m-987 1h0m1005 0h0m-39 1h0m-804 1h0m379 0h0m240 0h0m-841 1h0m355 0h0m-326 1h0m265 0h0m44 0h0m75 0h0m-428 1h0m590 0h0m-151 1h0m183 0h0m168 0h0m200 0h0m88 0h0m52 0h0m-894 2h0m60 0h0m7 0h0m315 0h0m326 0h0m-479 1h0m523 0h0m-815 1h0m122 0h0m-97 1h0m71 0h0m18 0h0m20 1h0m262 0h0m-212 2h0m528 0h0m-387 1h0m269 1h0m303 0h0m-816 1h0m635 0h0m-773 1h0m209 0h0m668 0h0m33 0h0m-714 1h0m-197 1h0m65 0h0m881 1h0m2 0h0m77 0h0m-241 2h0m39 0h0m41 0h0m-60 1h0m74 0h0m-785 1h0m477 0h0m113 0h0m122 0h0m-576 1h0m799 0h0m-790 1h0m322 0h0m-432 1h0m409 0h0m125 0h0m1 0h0m74 0h0m-272 1h0m264 0h0m-850 1h0m386 1h0m368 1h0m139 0h0m187 0h0m65 0h0m-781 1h0m139 0h0m140 0h0m98 0h0m407 0h0m-574 1h0m-535 1h0m315 0h0m191 0h0m339 0h0m12 0h0m241 0h0m-1143 1h0m338 0h0m263 0h0m220 1h0m-463 1h0m31 0h0m594 0h0m84 0h0m33 0h0m-938 1h0m349 0h0m566 0h0m-231 1h0m-852 1h0m1058 0h0m-880 1h0m-65 1h0m14 0h0m52 0h0m596 0h0m-402 1h0m773 0h0m22 0h0m-820 1h0m196 0h0m341 0h0m-357 1h0m-218 1h0m56 0h0m245 0h0m469 0h0m85 0h0m-934 1h0m767 0h0m-723 1h0m246 0h0m561 0h0m-1082 1h0m566 0h0m245 0h0m-484 1h0m47 0h0m434 1h0m132 0h0m-403 1h0m-409 1h0m173 0h0m201 0h0m325 0h0m-429 1h0m252 0h0m17 0h0m291 0h0m-923 1h0m46 0h0m5 0h0m533 0h0m286 0h0m-724 1h0m874 0h0m-761 1h0m409 0h0m-211 1h0m653 0h0m-1049 1h0m998 0h0m-1092 2h0m-9 1h0m346 0h0m809 0h0m-1063 1h0m30 0h0m608 0h0m-512 1h0m55 0h0m177 0h0m266 0h0m-40 1h0m-42 1h0m31 0h0m217 0h0m-787 1h0m7 0h0m255 0h0m598 0h0m73 0h0m138 0h0m-123 1h0m-546 1h0m-490 1h0m17 0h0m540 0h0m603 0h0m-502 1h0m235 0h0m152 0h0m-696 2h0m359 0h0m-664 1h0m169 0h0m494 0h0m-562 1h0m571 0h0m133 0h0m36 0h0m38 1h0m-712 1h0m100 0h0m274 0h0m293 0h0m124 0h0m-945 1h0m182 0h0m222 0h0m50 0h0m511 0h0m84 0h0m-247 1h0m-772 1h0m422 0h0m511 1h0m-381 1h0m107 1h0m286 1h0m93 0h0m-838 1h0m29 0h0m563 0h0m161 0h0m-140 1h0m217 0h0m-775 1h0m210 0h0m133 0h0m-473 1h0m473 0h0m95 0h0m342 0h0m-1121 2h0m270 1h0m296 0h0m174 0h0m-331 1h0m762 1h0m-949 1h0m109 1h0m49 0h0m64 0h0m455 0h0m61 0h0m-820 1h0m123 0h0m-169 1h0m287 0h0m102 0h0m136 1h0m137 0h0m-652 2h0m389 0h0m322 0h0m-744 1h0m712 0h0m72 1h0m59 0h0m77 0h0m132 0h0m26 0h0m-936 1h0m124 1h0m-52 1h0m53 0h0m294 1h0m147 0h0m-491 1h0m446 0h0m-20 1h0m39 0h0m-478 1h0m452 1h0m-416 1h0m512 0h0m55 0h0m-842 1h0m24 0h0m125 0h0m-93 1h0m774 0h0m28 0h0m-841 1h0m402 0h0m53 0h0m-502 1h0m374 0h0m182 0h0m-207 1h0m462 0h0m83 0h0m86 0h0m33 0h0m-949 1h0m63 0h0m597 0h0m95 0h0m45 0h0m-508 1h0m72 0h0m242 0h0m-682 1h0m239 0h0m437 0h0m179 0h0m191 0h0m-983 2h0m119 0h0m292 0h0m-370 1h0m71 0h0m333 0h0m6 0h0m255 0h0m96 0h0m134 0h0m-740 1h0m636 0h0m-809 1h0m322 0h0m648 0h0m-877 1h0m777 0h0m-278 1h0m-619 1h0m404 0h0m504 0h0m-890 1h0m627 0h0m-351 1h0m310 1h0m252 0h0m143 0h0m-346 1h0m80 0h0m-695 1h0m122 0h0m61 0h0m250 0h0m44 0h0m566 0h0m-1017 1h0m321 0h0m224 0h0m-77 2h0m-128 1h0m587 0h0m-809 1h0m887 0h0m-708 1h0m311 0h0m67 0h0m13 1h0m-712 1h0m444 0h0m312 1h0m210 0h0m-161 1h0m203 0h0m-732 1h0m743 0h0m-910 1h0m236 0h0m508 0h0m-27 1h0m136 0h0m-211 1h0m220 0h0m-674 1h0m81 0h0m285 0h0m19 0h0m194 0h0m76 0h0m28 0h0m-131 1h0m-306 1h0m114 0h0m-529 1h0m382 0h0m77 1h0m306 0h0m-791 1h0m90 0h0m723 0h0m-771 1h0m146 0h0m88 0h0m9 0h0m151 0h0m-494 1h0m205 0h0m490 0h0m-842 1h0m497 0h0m374 1h0m-673 1h0m332 1h0m19 0h0m178 0h0m142 0h0m-164 1h0m409 0h0m-1035 1h0m170 0h0m-181 1h0m120 1h0m230 0h0m341 0h0m-472 1h0m543 0h0m210 0h0m110 0h0m-1072 1h0m174 0h0m58 0h0m195 0h0m-349 1h0m356 0h0m71 0h0m-471 1h0m1044 0h0m-1139 1h0m51 0h0m845 0h0m4 0h0m147 0h0m-290 1h0m130 0h0m-857 1h0m485 0h0m222 0h0m84 1h0m134 0h0m-545 1h0m513 0h0m86 0h0m-634 1h0m259 1h0m-558 1h0m120 0h0m-141 1h0m151 0h0m280 0h0m152 0h0m379 0h0m-442 1h0m28 0h0m-414 1h0m464 0h0m320 0h0m-960 1h0m119 0h0m3 0h0m85 0h0m391 0h0m89 0h0m189 0h0m149 0h0m-864 1h0m413 0h0m-585 1h0m78 0h0m82 0h0m157 0h0m794 0h0m-1080 1h0m56 0h0m178 0h0m319 0h0m358 0h0m-844 1h0m36 1h0m515 0h0m-201 1h0m381 1h0m-253 2h0m126 0h0m15 0h0m387 0h0m-507 1h0m-187 1h0m51 0h0m160 0h0m412 0h0m-1011 1h0m660 0h0m116 0h0m98 0h0m-903 1h0m479 0h0m2 0h0m538 0h0m-1028 1h0m116 0h0m203 0h0m121 0h0m264 0h0m36 0h0m-8 2h0m172 0h0m-824 1h0m93 0h0m480 0h0m-648 1h0m284 0h0m179 0h0m609 0h0m-749 1h0m95 0h0m378 1h0m-683 1h0m424 0h0m270 0h0m-70 1h0m-346 1h0m35 0h0m31 0h0m-457 1h0m561 0h0m123 0h0m-249 1h0m705 0h0m-1041 1h0m89 0h0m282 0h0m497 0h0m-797 1h0m149 0h0m-226 1h0m57 0h0m13 0h0m716 0h0m-661 1h0m116 0h0m299 0h0m226 0h0m-572 1h0m843 0h0m-1074 1h0m929 1h0m-713 1h0m132 0h0m-253 1h0m80 0h0m236 0h0m59 0h0m-90 1h0m-303 1h0m124 0h0m457 0h0m58 0h0m280 0h0m16 0h0m-990 1h0m563 0h0m-203 1h0m199 0h0m-255 1h0m-230 1h0m273 0h0m652 0h0m-1000 1h0m276 0h0m170 0h0m-431 1h0m84 0h0m303 0h0m-457 1h0m720 0h0m154 1h0m217 0h0m-799 1h0m190 0h0m315 0h0m-551 1h0m258 0h0m391 1h0m53 0h0m-646 1h0m209 0h0m465 0h0m-467 1h0m162 0h0m345 0h0m-132 1h0m-174 1h0m35 0h0m286 0h0m-792 1h0m53 0h0m530 0h0m326 0h0m-797 1h0m350 0h0m440 0h0m-700 1h0m13 0h0m215 0h0m291 0h0m-645 1h0m485 0h0m337 0h0m-207 1h0m-817 1h0m713 0h0m185 0h0m85 0h0m-209 1h0m-811 2h0m-18 1h0m115 1h0m295 0h0m143 0h0m354 0h0m101 0h0m-1021 1h0m443 0h0m-408 1h0m69 0h0m929 0h0m-688 1h0m443 0h0m-515 1h0m142 0h0m648 0h0m-1055 1h0m773 0h0m-819 1h0m467 0h0m22 0h0m295 1h0m116 0h0m-507 1h0m2 0h0m44 1h0m-43 1h0m87 0h0m94 0h0m333 0h0m41 0h0m-693 1h0m838 0h0m-427 1h0m110 0h0m-445 1h0m270 0h0m-472 1h0m146 0h0m135 0h0m704 0h0m-761 1h0m318 0h0m202 0h0m117 0h0m98 0h0m-106 1h0m25 0h0m-517 1h0m-357 1h0m205 0h0m148 0h0m177 0h0m400 1h0m80 0h0m-936 1h0m87 0h0m809 0h0m-1040 1h0m6 0h0m11 0h0m473 0h0m482 1h0m-838 1h0m9 0h0m287 0h0m127 0h0m427 0h0m-724 1h0m505 0h0m305 0h0m-987 1h0m742 0h0m211 0h0m-1008 1h0m709 0h0m-228 1h0m-392 1h0m556 0h0m385 0h0m-1037 1h0m688 0h0m-349 1h0m57 0h0m67 0h0m294 0h0m-602 1h0m288 1h0m61 0h0m-285 1h0m-75 1h0m455 0h0m-653 2h0m122 0h0m219 0h0m65 0h0m482 0h0m193 0h0m-708 1h0m299 0h0m124 0h0m97 0h0m71 0h0m61 0h0m-1081 1h0m209 0h0m460 0h0m263 0h0m134 0h0m-658 1h0m639 0h0m32 0h0m-601 1h0m272 0h0m-180 1h0m58 0h0m166 0h0m-544 1h0m541 0h0m-425 1h0m623 0h0m177 0h0m-236 1h0m31 0h0m-581 1h0m22 0h0m162 1h0m74 0h0m245 0h0m3 0h0m196 0h0m-933 2h0m106 0h0m317 0h0m410 0h0m-409 1h0m396 0h0m-694 1h0m142 0h0m264 0h0m-438 1h0m524 1h0m-610 1h0m164 0h0m-237 1h0m62 0h0m89 0h0m261 0h0m111 0h0m292 0h0m-327 1h0m167 2h0m262 0h0m-707 1h0m595 0h0m41 3h0m221 0h0m-1155 1h0m559 0h0m588 0h0m-819 1h0m263 2h0m497 0h0m-614 1h0m1 1h0m656 0h0m-1135 1h0m188 0h0m304 0h0m-268 2h0m71 0h0m454 0h0m297 0h0m-698 1h0m22 0h0m482 0h0m244 0h0m-919 2h0m207 0h0m616 0h0m-682 1h0m704 0h0m-473 1h0m-57 1h0m681 0h0m-1146 2h0m544 0h0m265 0h0m71 0h0m-796 1h0m724 0h0m-197 1h0m312 0h0m-569 1h0m497 0h0m48 1h0m-711 1h0m595 0h0m185 0h0m-333 1h0m489 0h0m-643 1h0m53 0h0m201 0h0m376 0h0m-895 1h0m631 1h0m217 0h0m-975 2h0m553 0h0m-424 1h0m18 0h0m313 0h0m209 0h0m-637 1h0m976 0h0m-926 1h0m69 1h0m324 0h0m259 0h0m308 0h0m-1136 1h0m168 0h0m678 0h0m-805 1h0m768 0h0m226 0h0m-865 2h0m18 0h0m379 1h0m189 0h0m243 0h0m-603 1h0m125 0h0m441 0h0m47 0h0m-616 1h0m45 0h0m190 0h0m18 0h0m310 0h0m-823 1h0m162 1h0m5 0h0m-200 2h0m348 0h0m102 0h0m451 2h0m100 0h0m-963 1h0m928 0h0m-711 1h0m68 0h0m-306 2h0m233 0h0m270 0h0m-250 2h0m227 1h0m205 0h0m130 0h0m-782 1h0m1003 0h0m-1117 1h0m99 0h0m314 0h0m624 0h0m-208 1h0m-557 1h0m548 0h0m-675 1h0m38 0h0m215 1h0m158 0h0m341 0h0m-678 1h0m354 0h0m8 0h0m384 0h0m69 0h0m-993 1h0m788 0h0m269 0h0m-868 1h0m855 0h0m-1123 1h0m349 0h0m-214 1h0m94 0h0m-57 1h0m77 0h0m414 0h0m-342 1h0m64 0h0m41 0h0m396 0h0m301 0h0m-1038 2h0m486 0h0m-442 1h0m-46 1h0m784 0h0m155 0h0m-97 1h0m-632 1h0m-108 1h0m-152 1h0m17 0h0m163 0h0m14 0h0m545 0h0m333 0h0m-986 1h0m12 1h0m942 0h0m-958 1h0m746 0h0m157 0h0m45 1h0m-838 1h0m208 0h0m-102 1h0m-139 1h0m223 0h0m465 0h0m83 0h0m-332 1h0m17 0h0m293 0h0m-860 1h0m227 0h0m-172 1h0m658 0h0m111 2h0m-347 1h0m56 0h0m89 0h0m-548 1h0m949 0h0m-141 1h0m-833 1h0m543 0h0m-582 1h0m432 0h0m64 1h0m266 0h0m-707 1h0m492 0h0m95 0h0m7 0h0m92 0h0m18 0h0m160 0h0m89 0h0m-264 1h0m-736 1h0m476 0h0m571 0h0m-392 2h0m81 0h0m57 1h0m-853 1h0m307 0h0m-228 1h0m714 0h0m-609 1h0m771 0h0m-704 1h0m272 0h0m451 0h0m-973 1h0m-16 1h0m391 0h0m231 0h0m347 0h0m-809 1h0m83 0h0m128 0h0m424 0h0m-731 1h0m165 0h0m672 0h0m185 0h0m-882 1h0m364 0h0m31 0h0m451 0h0m-833 1h0m343 0h0m242 0h0m-673 1h0m146 0h0m52 0h0m232 0h0m165 0h0m-103 1h0m192 0h0m136 0h0m-572 1h0m288 0h0m220 0h0m-853 2h0m453 0h0m173 0h0m62 0h0m21 0h0m-253 1h0m-351 1h0m268 0h0m1 0h0m-248 1h0m83 0h0m-161 1h0m712 0h0m-768 1h0m540 0h0m75 0h0m162 0h0m-770 1h0m318 0h0m-353 1h0m51 1h0m185 0h0m-146 1h0m814 0h0m-568 1h0m711 0h0m-942 1h0m735 0h0m-809 1h0m654 0h0m156 1h0m-673 1h0m537 0h0m90 0h0m219 0h0m-383 1h0m255 0h0m-278 1h0m175 0h0m4 1h0m-663 1h0m363 0h0m161 2h0m-641 1h0m23 0h0m167 0h0m349 0h0m472 0h0m-1063 1h0m452 0h0m626 0h0m-555 1h0m16 0h0m19 0h0m299 0h0m-116 1h0m282 0h0m30 0h0m-759 1h0m436 0h0m96 0h0m66 0h0m-506 1h0m92 0h0m125 0h0m41 0h0m17 0h0m98 1h0m-189 1h0m-6 1h0m40 0h0m271 1h0m-781 1h0m75 0h0m544 1h0m370 0h0m-594 1h0m317 0h0m174 0h0m-580 1h0m-359 1h0m23 0h0m964 0h0m-623 1h0m456 0h0m104 0h0m-422 1h0m395 0h0m182 1h0m45 0h0m-811 2h0m370 0h0m17 0h0m155 0h0m92 1h0m18 1h0m-951 1h0m138 0h0m255 0h0m288 0h0m228 0h0m-889 1h0m1105 0h0m-138 1h0m-891 1h0m-27 2h0m70 0h0m695 0h0m14 0h0m77 0h0m-768 1h0m40 0h0m151 0h0m688 0h0m66 0h0m-843 1h0m537 0h0m-853 1h0m886 0h0m-214 1h0m405 1h0m92 0h0m-535 1h0m-614 1h0m134 0h0m20 0h0m811 1h0m-969 1h0m93 0h0"/>
<path transform="translate(.5 .5)" stroke="rgb(112,112,112)" stroke-width="1" stroke-linecap="square" d="M728 0h0m351 0h0m-999 1h0m86 0h0m305 0h0m169 0h0m-552 1h0m48 0h0m168 0h0m682 0h0m-633 1h0m26 0h0m2 0h0m363 0h0m195 1h0m-512 1h0m401 0h0m-503 2h0m478 0h0m262 0h0m21 0h0m-727 2h0m201 0h0m-144 2h0m132 0h0m151 0h0m-609 1h0m91 0h0m542 0h0m191 0h0m-753 2h0m65 0h0m38 2h0m126 0h0m406 0h0m285 0h0m-718 1h0m711 1h0m-597 2h0m231 1h0m52 0h0m379 0h0m35 0h0m-942 1h0m277 0h0m483 0h0m-859 2h0m925 0h0m-1002 1h0m167 0h0m293 0h0m183 0h0m-688 1h0m361 0h0m715 0h0m-769 1h0m794 0h0m17 0h0m-506 1h0m-176 1h0m38 0h0m260 0h0m-513 1h0m932 0h0m-1162 1h0m989 1h0m-216 1h0m-542 1h0m345 0h0m-377 1h0m557 0h0m-41 1h0m71 0h0m154 0h0m-396 3h0m-151 1h0m-185 1h0m76 0h0m250 0h0m-381 1h0m101 0h0m-99 1h0m139 1h0m465 0h0m-33 1h0m-197 1h0m-205 1h0m486 0h0m237 0h0m-1022 1h0m134 0h0m32 0h0m385 1h0m241 0h0m-785 3h0m317 0h0m346 0h0m441 0h0m9 0h0m-627 1h0m-239 1h0m69 0h0m270 0h0m221 0h0m28 0h0m-745 1h0m950 0h0m-447 1h0m-289 1h0m518 0h0m69 0h0m-770 1h0m327 0h0m136 0h0m-133 1h0m4 0h0m-225 1h0m376 0h0m-537 1h0m63 0h0m575 0h0m91 1h0m-145 1h0m158 0h0m45 0h0m132 0h0m28 0h0m15 0h0m-294 1h0m-566 1h0m638 1h0m-812 1h0m363 0h0m103 0h0m580 0h0m-992 1h0m288 0h0m437 0h0m232 0h0m46 0h0m69 0h0m-1070 1h0m577 0h0m-434 1h0m34 0h0m411 0h0m400 0h0m-465 1h0m301 0h0m-143 1h0m89 0h0m-759 2h0m358 1h0m55 0h0m239 1h0m121 0h0m171 1h0m-743 1h0m91 0h0m7 0h0m542 0h0m52 0h0m-577 1h0m766 0h0m-1055 1h0m152 0h0m804 0h0m-980 1h0m231 0h0m620 1h0m8 0h0m-714 2h0m756 1h0m-742 2h0m479 0h0m37 0h0m246 0h0m-830 2h0m277 0h0m29 0h0m-23 1h0m436 0h0m100 0h0m-333 1h0m-655 1h0m26 0h0m9 1h0m156 0h0m11 0h0m444 0h0m253 0h0m81 0h0m24 0h0m-639 1h0m21 0h0m88 1h0m78 0h0m95 0h0m265 1h0m-473 1h0m17 0h0m452 0h0m-214 1h0m77 0h0m52 1h0m188 1h0m-440 2h0m-196 1h0m437 0h0m216 0h0m-708 1h0m244 0h0m483 1h0m-611 1h0m-295 1h0m413 0h0m-211 1h0m-188 2h0m789 1h0m-601 1h0m248 0h0m255 1h0m34 0h0m96 0h0m-849 1h0m226 0h0m10 0h0m353 0h0m231 1h0m70 0h0m-279 1h0m85 0h0m54 0h0m-565 2h0m503 0h0m-745 1h0m485 0h0m546 0h0m-836 1h0m417 0h0m-625 1h0m484 0h0m120 0h0m233 0h0m-320 1h0m-331 1h0m294 0h0m125 0h0m-177 2h0m144 0h0m493 0h0m-944 1h0m375 0h0m-511 1h0m10 1h0m613 0h0m424 0h0m-880 1h0m-137 2h0m81 0h0m744 0h0m-807 1h0m330 0h0m145 0h0m503 1h0m7 0h0m-678 1h0m118 0h0m-149 1h0m110 0h0m184 1h0m-331 1h0m142 0h0m-325 1h0m378 1h0m-160 4h0m377 0h0m58 0h0m-107 1h0m277 0h0m-770 1h0m9 0h0m211 0h0m692 1h0m-1094 1h0m319 0h0m189 1h0m-397 1h0m174 0h0m-96 1h0m272 1h0m-162 1h0m832 1h0m-1030 1h0m201 0h0m51 1h0m458 0h0m102 2h0m-484 1h0m176 0h0m166 0h0m-624 1h0m670 0h0m-674 2h0m19 0h0m42 0h0m757 0h0m-475 1h0m628 0h0m-1042 1h0m397 0h0m-439 1h0m376 0h0m340 0h0m264 0h0m-827 1h0m528 0h0m155 0h0m-317 1h0m384 0h0m133 0h0m-588 1h0m66 2h0m359 0h0m138 0h0m-284 1h0m369 0h0m-820 1h0m281 0h0m334 0h0m-893 2h0m344 0h0m20 0h0m444 0h0m13 0h0m191 0h0m-974 2h0m426 0h0m500 0h0m-947 1h0m198 0h0m193 0h0m229 0h0m-641 1h0m53 0h0m540 0h0m146 0h0m198 0h0m-356 2h0m446 1h0m-1054 1h0m70 0h0m151 0h0m-33 1h0m156 1h0m557 0h0m-781 3h0m147 0h0m-100 1h0m181 0h0m57 0h0m-6 2h0m42 1h0m0 0h0m40 0h0m-443 2h0m145 1h0m315 0h0m203 1h0m-499 1h0m72 0h0m226 0h0m-131 1h0m725 0h0m-226 1h0m-334 1h0m148 0h0m169 0h0m169 0h0m23 2h0m-882 1h0m206 0h0m335 0h0m260 0h0m48 0h0m-752 1h0m233 0h0m194 0h0m279 0h0m-812 1h0m212 0h0m256 0h0m238 0h0m-862 1h0m30 0h0m132 0h0m224 1h0m362 0h0m-586 1h0m940 0h0m-877 1h0m353 0h0m-532 2h0m290 0h0m-147 1h0m279 2h0m237 0h0m173 0h0m-437 1h0m503 0h0m102 1h0m-560 2h0m96 0h0m-586 1h0m240 1h0m-42 1h0m769 3h0m-786 1h0m761 0h0m-163 1h0m149 0h0m-742 1h0m454 0h0m-73 1h0m223 0h0m142 0h0m-610 1h0m312 0h0m-335 1h0m206 0h0m216 0h0m-373 1h0m686 0h0m-283 2h0m-621 2h0m401 0h0m-189 1h0m-339 1h0m715 0h0m-327 1h0m648 0h0m-1049 1h0m723 0h0m-726 1h0m546 1h0m-19 1h0m640 0h0m-695 1h0m-467 1h0m1010 0h0m-977 2h0m11 0h0m226 0h0m40 0h0m68 1h0m186 1h0m238 0h0m113 0h0m-702 1h0m168 0h0m329 0h0m-371 2h0m-257 1h0m627 0h0m86 0h0m345 0h0m-449 1h0m406 0h0m32 0h0m-1118 1h0m307 0h0m726 0h0m106 0h0m-852 1h0m-302 1h0m215 0h0m4 0h0m121 0h0m-161 1h0m466 0h0m70 0h0m344 0h0m-628 1h0m143 0h0m96 1h0m10 0h0m204 0h0m-627 1h0m357 0h0m119 0h0m220 0h0m119 0h0m-645 1h0m176 1h0m210 0h0m321 0h0m14 0h0m-130 1h0m-816 1h0m931 0h0m-485 1h0m-569 1h0m441 0h0m-176 1h0m-339 1h0m192 0h0m315 0h0m-303 1h0m202 0h0m-339 1h0m1057 0h0m-1056 1h0m589 0h0m-53 1h0m260 0h0m34 0h0m114 0h0m-960 1h0m141 0h0m260 0h0m-192 1h0m24 0h0m136 0h0m474 0h0m-126 1h0m378 0h0m-324 1h0m321 0h0m-193 1h0m-10 2h0m-183 1h0m147 0h0m-146 1h0m105 0h0m-781 1h0m562 0h0m163 0h0m201 2h0m-733 1h0m230 1h0m-289 1h0m374 0h0m380 0h0m-329 1h0m-130 1h0m74 0h0m369 0h0m170 0h0m-239 1h0m-765 1h0m-52 1h0m189 0h0m45 0h0m606 0h0m-591 1h0m572 0h0m-573 1h0m256 0h0m537 0h0m-452 2h0m-409 1h0m14 0h0m128 0h0m-333 1h0m13 0h0m353 0h0m627 0h0m-773 1h0m145 0h0m45 1h0m19 0h0m522 0h0m-209 2h0m17 0h0m57 0h0m18 0h0m109 1h0m-126 1h0m110 0h0m-909 1h0m729 0h0m170 0h0m-930 2h0m115 0h0m158 0h0m-249 1h0m136 0h0m714 0h0m48 0h0m61 0h0m-996 1h0m408 0h0m-360 1h0m599 0h0m125 0h0m-523 1h0m385 0h0m142 0h0m-799 1h0m404 0h0m24 0h0m-420 2h0m325 0h0m-132 1h0m372 0h0m83 0h0m-374 1h0m130 0h0m357 0h0m-547 1h0m226 0h0m130 0h0m10 1h0m415 0h0m-708 1h0m496 1h0m-432 1h0m316 0h0m292 0h0m-923 1h0m991 0h0m-898 1h0m54 1h0m-93 1h0m586 0h0m303 0h0m59 0h0m-394 1h0m178 1h0m-448 1h0m241 2h0m99 0h0m12 0h0m143 0h0m247 0h0m-827 1h0m186 0h0m57 0h0m351 0h0m-364 2h0m598 1h0m-740 1h0m381 0h0m-245 1h0m236 0h0m-414 1h0m574 0h0m83 0h0m-950 2h0m425 0h0m192 0h0m96 0h0m-664 1h0m765 0h0m-727 1h0m-109 1h0m288 0h0m-260 1h0m311 1h0m596 0h0m-708 1h0m206 0h0m234 0h0m164 0h0m250 0h0m-895 1h0m-76 1h0m727 0h0m-827 1h0m399 0h0m387 0h0m125 0h0m70 0h0m-668 1h0m67 1h0m-398 1h0m655 0h0m-217 1h0m37 1h0m77 0h0m-340 1h0m330 0h0m9 0h0m438 0h0m-1007 2h0m913 0h0m-389 1h0m327 0h0m178 1h0m-74 1h0m-417 3h0m569 2h0m-505 1h0m326 0h0m32 0h0m105 0h0m-756 1h0m478 0h0m117 0h0m236 0h0m-122 1h0m23 0h0m-997 1h0m107 0h0m127 0h0m-156 1h0m217 0h0m233 0h0m-510 1h0m735 0h0m-722 2h0m881 0h0m-488 1h0m552 1h0m26 1h0m-976 1h0m702 0h0m241 0h0m-683 1h0m-295 1h0m1051 0h0m-717 2h0m143 0h0m182 0h0m251 0h0m-859 1h0m211 0h0m421 0h0m-732 1h0m112 0h0m250 0h0m0 0h0m157 0h0m419 0h0m-872 1h0m657 0h0m-83 1h0m24 0h0m288 1h0m-886 1h0m630 0h0m-507 1h0m742 0h0m-369 2h0m-201 1h0m484 0h0m-505 1h0m149 0h0m495 0h0m-722 1h0m303 1h0m51 1h0m95 0h0m111 0h0m-385 1h0m593 0h0m-592 1h0m519 0h0m-734 1h0m711 0h0m-644 1h0m577 0h0m278 0h0m-919 1h0m65 0h0m14 0h0m13 0h0m819 0h0m-467 1h0m247 0h0m23 0h0m-780 3h0m667 0h0m0 1h0m2 0h0m104 0h0m3 0h0m151 0h0m-751 2h0m168 1h0m253 0h0m-736 1h0m7 0h0m146 0h0m380 0h0m479 1h0m-544 1h0m83 0h0m-411 1h0m457 0h0m-344 1h0m174 0h0m-242 1h0m327 0h0m117 1h0m66 0h0m-629 1h0m943 0h0m-923 1h0m360 0h0m254 0h0m-73 1h0m92 0h0m185 0h0m-371 1h0m-475 1h0m573 0h0m335 0h0m-641 1h0m-346 1h0m-11 1h0m700 0h0m146 0h0m105 0h0m136 2h0m-622 1h0m365 0h0m73 0h0m196 1h0m-536 1h0m87 0h0m-101 1h0m217 0h0m316 0h0m-881 1h0m136 1h0m38 1h0m683 0h0m-605 1h0m597 0h0m-143 3h0m-794 1h0m1001 0h0m-1023 1h0m-68 1h0m1048 0h0m-949 1h0m307 0h0m255 0h0m443 0h0m29 1h0m-214 1h0m224 0h0m-463 1h0m20 0h0m-455 1h0m516 0h0m360 0h0m23 1h0m-596 2h0m52 0h0m175 0h0m56 0h0m-667 1h0m315 1h0m601 0h0m-49 1h0m-949 2h0m466 0h0m338 0h0m240 0h0m-175 1h0m-661 1h0m63 0h0m729 0h0m-1096 1h0m15 0h0m116 0h0m965 0h0m-699 1h0m11 0h0m526 0h0m-717 2h0m330 2h0m141 0h0m320 0h0m146 0h0m-1125 3h0m714 0h0m-62 2h0m222 0h0m40 0h0m-853 1h0m-47 2h0m327 0h0m135 0h0m-272 1h0m-244 1h0m657 0h0m195 0h0m-707 1h0m905 0h0m-1027 1h0m102 0h0m964 1h0m-1072 1h0m207 0h0m10 0h0m506 0h0m-125 1h0m312 0h0m-178 1h0m185 0h0m-764 1h0m74 0h0m108 0h0m105 0h0m690 0h0m25 3h0m-1018 1h0m244 0h0m263 0h0m478 0h0m-1120 1h0m14 0h0m783 0h0m104 0h0m-375 1h0m37 0h0m390 0h0m85 0h0m-875 1h0m81 0h0m425 0h0m-693 3h0m24 1h0m194 1h0m99 0h0m630 0h0m-751 1h0m142 0h0m348 0h0m-263 2h0m87 0h0m17 0h0m-30 1h0m99 0h0m-369 1h0m544 0h0m-26 1h0m-119 1h0m250 0h0m-410 1h0m79 2h0m346 0h0m-531 1h0m-147 1h0m79 0h0m218 0h0m9 0h0m-365 1h0m117 0h0m658 0h0m-821 1h0m978 0h0m-940 1h0m114 0h0m-96 1h0m251 2h0m-119 1h0m443 0h0m-310 1h0m-419 1h0m64 0h0m593 0h0m350 0h0m159 0h0m-900 1h0m430 0h0m4 0h0m57 0h0m-169 1h0m158 0h0m95 0h0m315 0h0m-787 1h0m104 0h0m-155 1h0m453 0h0m-557 1h0m452 0h0m63 0h0m-602 1h0m16 1h0m154 0h0m64 0h0m584 1h0m-817 1h0m616 0h0m142 0h0m161 0h0m-42 1h0m-772 1h0m2 0h0m54 0h0m445 1h0m73 0h0m137 0h0m73 1h0m-729 4h0m330 0h0m-277 1h0m249 0h0m71 0h0m-559 3h0m298 0h0m64 1h0m535 0h0m49 0h0m18 0h0m-964 1h0m341 1h0m184 0h0m-505 1h0m410 1h0m226 1h0m-585 3h0m106 0h0m239 0h0m-319 2h0m873 0h0m-705 1h0m21 0h0m447 0h0m-727 1h0m1058 0h0m-1130 1h0m155 0h0m501 0h0m-416 1h0m405 0h0m-399 1h0m276 1h0m523 0h0m-237 2h0m101 0h0m217 0h0m-1119 1h0m63 0h0m247 0h0m467 0h0m-430 1h0m213 0h0m355 0h0m-260 1h0m-496 1h0m-21 3h0m898 0h0m-594 1h0m-309 1h0m95 0h0m208 0h0m-308 2h0m837 0h0m165 1h0m-999 2h0m62 0h0m168 0h0m393 1h0m40 0h0m216 1h0m-582 1h0m189 2h0m59 1h0m192 0h0m154 0h0m21 0h0m-778 1h0m100 0h0m93 0h0m13 0h0m84 0h0m95 0h0m16 0h0m-283 1h0m9 0h0m706 0h0m-864 1h0m831 0h0m-981 1h0m198 0h0m640 0h0m-825 1h0m317 0h0m447 0h0m198 0h0m-701 1h0m-383 1h0m623 0h0m64 0h0m73 1h0m-693 1h0m660 0h0m170 0h0m89 0h0m-560 1h0m-272 1h0m-57 2h0m93 0h0m703 0h0m-419 1h0m72 0h0m83 0h0m-235 1h0m356 0h0m-452 1h0m288 0h0m-192 1h0m669 0h0m-1090 1h0m717 0h0m207 0h0m-392 1h0m-393 1h0m-67 1h0m112 0h0m95 0h0m641 0h0m-750 1h0m696 0h0m-434 1h0m68 0h0m509 1h0m162 0h0m5 0h0m-214 1h0m-470 1h0m523 0h0m-832 1h0m835 1h0m-824 1h0m614 0h0m64 1h0m-842 1h0m566 0h0m149 0h0m264 0h0m7 0h0m-778 1h0m173 0h0m529 0h0m-421 1h0m128 0h0m375 0h0m-904 1h0m64 0h0m311 0h0m524 0h0m-793 1h0m117 0h0m267 0h0m-476 2h0m247 0h0m69 0h0m229 1h0m21 0h0m167 0h0m56 0h0m-441 1h0m195 0h0m305 0h0m-752 1h0m685 0h0m49 0h0m-933 1h0m292 0h0m409 0h0m-231 1h0m478 1h0m114 0h0m-619 1h0m-10 1h0m118 0h0m545 0h0m-819 1h0m453 0h0m391 0h0m-975 2h0m282 0h0m-451 1h0m529 0h0m233 0h0m186 0h0m-856 1h0m801 0h0m11 0h0m146 0h0m-712 1h0m32 0h0m452 1h0m180 0h0m4 0h0m-766 1h0m432 0h0m402 0h0m39 1h0m-942 2h0m61 0h0m314 0h0m418 0h0m-698 2h0m91 0h0m34 0h0m122 0h0m197 0h0m100 0h0m-664 1h0m372 0h0m347 0h0m-185 1h0m-438 1h0m49 0h0m235 0h0m395 0h0m33 0h0m-554 1h0m24 0h0m-285 1h0m214 0h0m445 0h0m-87 1h0m-265 1h0m5 2h0m-282 1h0m697 1h0m120 0h0m-829 1h0m900 0h0m-766 1h0m193 0h0m-302 1h0m58 1h0m259 0h0m318 0h0m112 0h0m-683 1h0m649 0h0m-826 1h0m498 0h0m331 0h0m-571 2h0m211 0h0m137 0h0m112 1h0m87 2h0m225 2h0m24 0h0m-1098 1h0m1015 0h0m-768 1h0m560 0h0m210 0h0m90 0h0m-644 2h0m-272 1h0m-74 1h0m178 0h0m105 0h0m-224 1h0m82 0h0m132 0h0m-109 1h0m377 1h0m214 1h0m-626 1h0m-196 1h0m642 0h0m-579 1h0m231 0h0m735 0h0m-1042 1h0m180 0h0m256 0h0m634 0h0m-382 1h0m308 0h0m87 1h0"/>
<path transform="translate(.5 .5)" stroke="rgb(127,127,127)" stroke-width="1" stroke-linecap="square" d="M860 1h0m-758 1h0m215 0h0m42 1h0m663 1h0m110 0h0m-569 1h0m209 0h0m282 0h0m-410 1h0m260 0h0m182 0h0m-25 1h0m-635 1h0m236 0h0m-659 2h0m397 2h0m65 0h0m387 0h0m3 1h0m1 0h0m-514 2h0m395 1h0m-735 1h0m712 0h0m271 0h0m57 0h0m-980 1h0m124 1h0m116 0h0m5 1h0m-64 1h0m342 0h0m329 0h0m-118 1h0m-730 1h0m771 1h0m186 1h0m-973 1h0m228 0h0m-116 1h0m604 0h0m137 0h0m135 1h0m94 0h0m8 0h0m28 1h0m-989 1h0m197 0h0m165 0h0m71 0h0m-300 1h0m410 0h0m-212 1h0m-226 2h0m761 0h0m-963 1h0m638 0h0m-385 1h0m441 1h0m177 0h0m-641 1h0m34 0h0m-298 1h0m103 1h0m229 0h0m570 1h0m-556 1h0m265 0h0m-376 3h0m92 2h0m370 0h0m204 0h0m0 0h0m20 0h0m-68 2h0m-750 1h0m843 0h0m-161 1h0m-357 1h0m314 0h0m139 1h0m-448 1h0m-479 1h0m1172 0h0m-984 2h0m225 0h0m759 0h0m-1162 1h0m24 0h0m296 0h0m-6 1h0m102 0h0m293 0h0m-514 2h0m61 1h0m835 0h0m-48 1h0m-929 1h0m647 0h0m123 1h0m-248 1h0m284 0h0m-755 1h0m98 0h0m119 0h0m90 0h0m32 0h0m457 1h0m183 0h0m-279 1h0m-154 2h0m-678 1h0m438 0h0m111 0h0m538 0h0m-71 1h0m-761 2h0m364 0h0m-104 1h0m48 1h0m416 0h0m-855 1h0m934 1h0m-493 1h0m500 0h0m-679 1h0m729 1h0m-677 2h0m-100 1h0m341 1h0m-280 1h0m547 0h0m-384 1h0m187 0h0m-693 1h0m409 0h0m-159 2h0m-338 2h0m136 0h0m810 0h0m-162 2h0m-345 1h0m76 3h0m322 0h0m307 0h0m-539 1h0m245 3h0m-831 1h0m144 0h0m493 0h0m-477 5h0m209 0h0m62 0h0m239 0h0m303 0h0m-886 1h0m291 0h0m31 0h0m144 0h0m283 1h0m-798 1h0m1044 1h0m-421 1h0m378 0h0m58 1h0m-878 3h0m882 0h0m-552 1h0m-580 4h0m415 2h0m55 1h0m42 1h0m654 1h0m-1128 1h0m936 2h0m-740 1h0m411 0h0m-558 2h0m959 0h0m-653 1h0m-375 1h0m957 0h0m-762 1h0m312 0h0m-244 1h0m331 0h0m165 0h0m-259 1h0m525 0h0m-701 1h0m492 0h0m24 0h0m-489 1h0m59 0h0m-249 1h0m855 0h0m-291 1h0m273 1h0m-529 2h0m351 0h0m21 0h0m-230 1h0m-138 1h0m371 0h0m-176 1h0m34 0h0m-27 1h0m-595 2h0m896 0h0m-342 1h0m-440 1h0m-14 1h0m141 0h0m273 2h0m203 1h0m-403 1h0m655 0h0m-763 1h0m296 0h0m-15 1h0m258 1h0m-706 1h0m275 0h0m-400 1h0m1075 0h0m-592 1h0m440 3h0m-841 2h0m125 0h0m713 0h0m-471 4h0m26 3h0m521 1h0m-991 2h0m372 0h0m347 0h0m-594 1h0m162 0h0m616 1h0m221 0h0m-727 1h0m595 0h0m-836 1h0m33 1h0m123 1h0m340 0h0m388 0h0m-379 2h0m369 0h0m-207 1h0m-75 1h0m-139 2h0m507 0h0m3 1h0m-987 1h0m506 0h0m-622 2h0m635 0h0m-226 1h0m-178 1h0m641 0h0m-873 2h0m60 3h0m14 0h0m21 0h0m926 1h0m-736 1h0m599 0h0m179 0h0m-880 1h0m950 0h0m-912 1h0m-125 1h0m33 1h0m85 0h0m152 0h0m101 0h0m644 1h0m-928 3h0m-104 1h0m194 0h0m556 0h0m-217 3h0m46 0h0m131 0h0m76 0h0m69 0h0m93 0h0m-902 1h0m296 0h0m22 0h0m690 0h0m-578 1h0m596 0h0m-546 1h0m-391 1h0m718 1h0m87 1h0m-682 3h0m106 0h0m484 0h0m-934 2h0m1141 0h0m-233 1h0m120 0h0m-1028 2h0m900 2h0m-294 1h0m484 0h0m-828 1h0m125 0h0m-53 1h0m-263 1h0m806 0h0m-716 1h0m515 0h0m84 0h0m-598 1h0m510 0h0m360 0h0m-939 1h0m337 0h0m252 1h0m-570 1h0m156 0h0m427 0h0m-414 1h0m151 0h0m118 0h0m110 1h0m-230 1h0m698 0h0m-1026 1h0m-117 1h0m521 2h0m-53 2h0m-227 1h0m-184 1h0m323 0h0m705 0h0m10 1h0m-1003 2h0m844 0h0m-939 2h0m810 0h0m227 0h0m-753 1h0m214 0h0m-238 1h0m739 1h0m-809 1h0m53 0h0m203 0h0m139 0h0m425 2h0m-994 1h0m480 1h0m677 0h0m-639 2h0m470 0h0m-325 1h0m-378 1h0m157 0h0m-109 1h0m731 0h0m-1030 1h0m216 0h0m-153 1h0m282 3h0m641 0h0m-996 1h0m4 0h0m136 0h0m235 2h0m19 0h0m210 0h0m408 1h0m95 0h0m-1104 1h0m467 0h0m227 1h0m-674 1h0m512 1h0m142 0h0m414 1h0m-296 1h0m198 0h0m-657 1h0m-238 1h0m281 0h0m259 0h0m-273 1h0m435 0h0m-682 1h0m628 0h0m-568 1h0m299 0h0m160 0h0m-456 2h0m341 1h0m388 0h0m-872 1h0m742 0h0m-620 2h0m623 0h0m-706 1h0m509 1h0m-206 1h0m406 0h0m226 0h0m-925 1h0m412 0h0m-141 2h0m25 2h0m139 0h0m-290 1h0m207 0h0m33 0h0m299 0h0m111 1h0m56 1h0m-883 1h0m931 0h0m-713 1h0m140 0h0m170 0h0m279 0h0m-524 1h0m1 0h0m-200 2h0m465 1h0m167 1h0m-679 1h0m24 0h0m693 0h0m-364 4h0m-249 2h0m410 0h0m353 0h0m-677 1h0m109 0h0m369 0h0m-416 2h0m69 1h0m-108 1h0m601 0h0m-187 1h0m-191 1h0m114 1h0m173 0h0m38 0h0m68 0h0m-644 1h0m471 2h0m-663 2h0m436 0h0m-368 1h0m215 1h0m605 0h0m-262 1h0m-387 1h0m-276 1h0m475 0h0m-147 1h0m-76 3h0m354 0h0m-98 1h0m-115 1h0m85 0h0m-173 1h0m151 0h0m-541 1h0m637 0h0m-321 1h0m466 0h0m86 1h0m256 1h0m-587 1h0m212 2h0m330 1h0m-762 1h0m279 0h0m-533 1h0m289 0h0m547 0h0m-408 1h0m187 0h0m160 0h0m163 0h0m-939 1h0m475 0h0m202 0h0m-582 1h0m652 0h0m-117 1h0m382 1h0m-916 1h0m-57 1h0m679 2h0m2 0h0m-440 2h0m642 0h0m-747 1h0m774 0h0m135 0h0m-1019 1h0m-100 1h0m79 0h0m604 1h0m282 1h0m76 0h0m-284 1h0m-768 3h0m66 0h0m975 0h0m60 1h0m-636 1h0m23 0h0m123 4h0m73 0h0m299 0h0m7 0h0m-1004 1h0m41 0h0m210 0h0m577 0h0m-708 1h0m81 0h0m870 0h0m-428 1h0m-632 2h0m569 1h0m-420 1h0m456 0h0m362 0h0m-698 1h0m9 0h0m424 0h0m-664 2h0m386 0h0m-250 1h0m236 1h0m582 0h0m-824 2h0m247 0h0m619 0h0m-579 1h0m304 0h0m294 0h0m-3 1h0m53 0h0m-334 1h0m21 0h0m34 0h0m-375 3h0m516 0h0m-403 1h0m-151 1h0m45 0h0m-288 2h0m987 0h0m-952 1h0m171 1h0m-109 1h0m598 1h0m-779 2h0m516 0h0m355 1h0m-731 1h0m816 2h0m-54 1h0m160 1h0m-910 3h0m26 1h0m403 0h0m337 1h0m-464 2h0m255 0h0m-348 1h0m-245 2h0m569 0h0m288 0h0m-447 2h0m-509 1h0m140 0h0m686 0h0m-897 1h0m59 0h0m533 0h0m5 1h0m-276 1h0m-98 1h0m471 0h0m415 0h0m-624 2h0m225 0h0m165 0h0m-649 2h0m366 0h0m-245 2h0m-161 1h0m426 2h0m-372 3h0m143 0h0m16 0h0m-298 1h0m438 1h0m-447 1h0m-47 1h0m977 0h0m-1073 1h0m1157 1h0m-52 3h0m-771 1h0m136 1h0m-340 2h0m8 0h0m295 1h0m-420 1h0m362 0h0m548 0h0m163 1h0m-237 1h0m151 0h0m68 0h0m-818 1h0m-143 1h0m541 0h0m-510 1h0m891 1h0m-907 2h0m401 2h0m74 0h0m-531 3h0m603 0h0m313 0h0m-514 1h0m3 0h0m546 1h0m83 1h0m-924 1h0m-65 1h0m109 1h0m192 0h0m365 0h0m-362 1h0m-112 1h0m-301 1h0m417 0h0m609 2h0m-711 1h0m-281 1h0m369 0h0m-405 1h0m154 0h0m569 0h0m128 0h0m-853 1h0m268 0h0m429 0h0m120 0h0m113 0h0m-919 1h0m235 0h0m897 0h0m-764 3h0m40 0h0m71 0h0m487 0h0m-679 1h0m789 0h0m-165 1h0m108 0h0m-707 3h0m30 0h0m-67 1h0m509 0h0m61 0h0m70 0h0m-753 1h0m572 0h0m-580 1h0m-163 1h0m902 0h0m-832 1h0m438 0h0m431 0h0m-201 1h0m-207 1h0m314 0h0m185 0h0m-548 3h0m-398 2h0m36 0h0m250 0h0m-108 2h0m31 0h0m-249 1h0m222 0h0m698 0h0m-542 2h0m167 3h0m-241 1h0m756 0h0m-212 1h0m-130 1h0m396 0h0m2 0h0m-1051 1h0m525 0h0m216 0h0m-622 1h0m303 0h0m554 0h0m-1046 3h0m417 1h0m302 0h0m-556 1h0m373 0h0m-522 1h0m869 1h0m-181 1h0m38 3h0m17 0h0m-57 1h0m-271 1h0m445 0h0m-556 1h0m18 1h0m672 0h0m105 0h0m-506 1h0m-211 2h0m-30 3h0m636 0h0m-167 1h0m-598 1h0m184 0h0m145 0h0m-389 1h0m268 0h0m-6 2h0m429 0h0m115 1h0m-964 1h0m700 0h0m398 0h0m-1144 4h0m383 0h0m154 0h0m74 0h0m485 4h0m-1058 1h0m138 1h0m742 0h0m-685 2h0m792 0h0m-882 2h0m713 0h0m-433 2h0m-292 1h0m-11 1h0m856 0h0m-813 1h0m473 0h0m-28 1h0m156 0h0m267 0h0m-561 1h0m171 0h0m89 1h0m65 0h0m-755 1h0m104 2h0m2 0h0m206 0h0m84 0h0m74 0h0m258 1h0m-144 1h0m540 1h0m-701 1h0m97 0h0m457 0h0m-853 1h0m527 0h0m-697 3h0m89 1h0m623 0h0m75 0h0m226 0h0m-843 1h0m829 0h0m-988 1h0m288 0h0m478 0h0m8 0h0m-670 1h0m224 0h0m330 0h0m-630 1h0m780 1h0m-779 1h0m351 0h0m137 5h0m503 0h0m-710 1h0m630 0h0m-759 1h0m125 1h0m211 1h0m-490 1h0m153 2h0m970 0h0m-263 1h0m-260 1h0m48 2h0m-161 1h0m-14 1h0m27 0h0m83 0h0m231 0h0m116 0h0m13 1h0m-935 1h0m303 0h0m2 1h0m593 0h0m-926 1h0m80 0h0m408 1h0m306 0h0m268 2h0m-1060 1h0m203 1h0m691 0h0m163 1h0m-942 2h0m973 0h0m-398 1h0m98 0h0m-30 3h0m0 1h0m-510 1h0m66 0h0m88 0h0m111 0h0m539 0h0m-679 2h0m311 0h0m-659 1h0m-12 2h0m175 0h0m255 0h0m-217 1h0m702 3h0m12 0h0m-615 1h0m547 0h0m190 0h0m-1077 1h0m489 1h0m650 0h0m-798 1h0m414 0h0m182 1h0m-593 1h0m262 1h0m-603 1h0m78 0h0m21 0h0m-55 3h0m489 0h0m72 0h0m-383 1h0m-137 1h0m1060 0h0m12 0h0m-809 1h0m116 0h0m273 0h0m-217 1h0m119 0h0m12 1h0m-464 2h0m289 0h0m606 1h0m-489 1h0m-327 1h0m407 1h0m-467 2h0m752 0h0m156 2h0m-137 1h0"/>
<path transform="translate(.5 .5)" stroke="rgb(142,142,142)" stroke-width="1" stroke-linecap="square" d="M605 1h0m-192 3h0m156 0h0m81 1h0m-100 2h0m271 1h0m-439 2h0m264 2h0m165 0h0m-510 1h0m-91 1h0m605 3h0m-110 1h0m268 0h0m0 2h0m-228 2h0m-139 1h0m104 0h0m82 0h0m62 0h0m-134 2h0m79 0h0m168 0h0m173 0h0m-1113 1h0m567 1h0m516 0h0m-512 3h0m-148 1h0m472 0h0m-772 1h0m279 1h0m250 0h0m267 0h0m-715 1h0m-7 1h0m39 0h0m676 0h0m23 0h0m182 1h0m-788 2h0m594 0h0m35 3h0m-810 1h0m513 0h0m-414 2h0m446 0h0m327 0h0m70 0h0m-1085 1h0m417 0h0m277 2h0m-536 1h0m987 1h0m-1012 1h0m524 1h0m136 0h0m-516 1h0m275 0h0m-141 1h0m72 0h0m494 0h0m-269 1h0m210 0h0m-268 2h0m156 1h0m-521 1h0m240 3h0m-172 1h0m189 0h0m429 0h0m-406 2h0m252 0h0m178 1h0m-988 1h0m251 1h0m403 0h0m441 1h0m-966 1h0m-75 4h0m-35 3h0m921 0h0m-846 3h0m318 0h0m214 0h0m-203 1h0m359 0h0m-460 2h0m631 1h0m-586 4h0m739 1h0m-272 1h0m186 0h0m69 0h0m50 0h0m-1010 1h0m-94 3h0m66 2h0m402 2h0m597 3h0m-952 1h0m542 1h0m387 3h0m-224 1h0m-310 2h0m-333 1h0m340 3h0m242 0h0m14 1h0m-368 2h0m-219 1h0m863 2h0m-994 2h0m866 3h0m-358 1h0m-46 1h0m293 1h0m276 0h0m-886 3h0m501 0h0m-639 1h0m537 2h0m514 0h0m-812 1h0m176 0h0m378 1h0m91 0h0m-541 1h0m434 1h0m-154 2h0m-756 2h0m745 0h0m-683 2h0m790 0h0m199 1h0m-991 1h0m709 3h0m170 1h0m-345 1h0m178 0h0m93 1h0m-143 1h0m-284 4h0m-95 1h0m385 0h0m13 0h0m36 0h0m58 0h0m-344 1h0m-243 1h0m355 4h0m-289 4h0m804 1h0m-911 1h0m247 4h0m-300 2h0m129 3h0m288 0h0m-500 1h0m296 0h0m398 2h0m-283 2h0m342 0h0m-706 1h0m296 0h0m-223 2h0m554 0h0m397 0h0m-24 2h0m-562 1h0m331 0h0m-369 3h0m224 0h0m-472 3h0m494 0h0m-4 1h0m-222 1h0m494 0h0m-1007 1h0m1155 0h0m-402 1h0m200 1h0m-599 2h0m553 0h0m-727 2h0m267 0h0m606 2h0m-29 1h0m-567 1h0m9 0h0m337 1h0m-710 5h0m481 0h0m-496 2h0m300 1h0m-398 3h0m370 0h0m-337 2h0m60 2h0m929 1h0m36 0h0m-422 1h0m-32 1h0m-583 1h0m47 0h0m-62 1h0m1100 0h0m40 1h0m-902 1h0m327 0h0m-504 4h0m158 0h0m351 0h0m-554 1h0m600 4h0m-570 1h0m146 0h0m615 0h0m-618 1h0m412 0h0m-500 1h0m174 0h0m160 0h0m441 0h0m81 0h0m74 1h0m-508 1h0m495 0h0m49 0h0m-520 1h0m204 1h0m-162 1h0m-115 1h0m-177 4h0m-5 3h0m415 0h0m-708 3h0m112 0h0m695 5h0m-47 1h0m-98 1h0m398 0h0m15 1h0m-649 1h0m-44 2h0m-383 1h0m446 1h0m194 1h0m259 0h0m-631 5h0m-81 2h0m176 0h0m-127 1h0m286 0h0m513 0h0m45 1h0m26 0h0m-587 3h0m252 0h0m402 0h0m-240 1h0m-385 2h0m-357 1h0m82 1h0m99 0h0m734 1h0m-174 1h0m-440 2h0m346 1h0m159 0h0m-86 1h0m196 0h0m26 0h0m-1051 1h0m432 0h0m-410 3h0m185 2h0m381 1h0m70 0h0m148 0h0m-630 2h0m158 0h0m465 0h0m-797 2h0m27 1h0m245 0h0m-362 2h0m629 0h0m531 0h0m-1040 4h0m926 1h0m-401 1h0m-71 1h0m339 0h0m178 5h0m-273 1h0m23 0h0m-135 1h0m-688 2h0m296 0h0m32 1h0m187 0h0m179 0h0m409 0h0m34 0h0m-1072 1h0m457 0h0m-18 1h0m239 0h0m214 0h0m-873 1h0m669 0h0m-574 1h0m303 0h0m-487 1h0m659 0h0m-44 3h0m-490 1h0m314 1h0m155 0h0m9 0h0m491 2h0m-893 1h0m821 0h0m44 0h0m-967 1h0m518 0h0m203 1h0m-522 2h0m242 0h0m556 0h0m-609 2h0m388 2h0m91 0h0m-560 1h0m45 2h0m706 0h0m7 0h0m-1073 5h0m123 1h0m-73 1h0m1004 0h0m16 0h0m-384 2h0m-664 1h0m865 0h0m-1 3h0m103 0h0m-215 1h0m76 1h0m-14 2h0m-160 1h0m-628 1h0m955 2h0m-962 1h0m390 0h0m-323 1h0m586 0h0m-600 1h0m87 0h0m-125 1h0m427 0h0m56 1h0m521 0h0m-66 1h0m-775 2h0m-215 1h0m410 0h0m157 0h0m183 1h0m64 0h0m-230 2h0m440 2h0m-658 1h0m513 0h0m-608 1h0m-366 1h0m5 1h0m260 0h0m-63 1h0m292 0h0m529 3h0m16 1h0m-428 2h0m375 0h0m-619 3h0m771 0h0m-1006 1h0m661 0h0m294 0h0m-511 1h0m-21 2h0m-98 2h0m242 0h0m463 2h0m-818 2h0m58 0h0m636 0h0m-739 1h0m76 0h0m183 0h0m543 1h0m-25 2h0m-345 1h0m297 1h0m-863 2h0m319 0h0m-338 1h0m-137 1h0m380 0h0m-96 3h0m454 2h0m346 1h0m-846 2h0m365 0h0m503 0h0m-231 1h0m-608 2h0m-248 1h0m421 0h0m655 0h0m-800 1h0m120 0h0m518 1h0m-38 1h0m-606 1h0m-205 5h0m183 0h0m524 0h0m96 2h0m204 0h0m-624 2h0m177 1h0m132 1h0m-659 1h0m-117 3h0m357 0h0m485 3h0m-797 1h0m962 0h0m-151 1h0m270 0h0m-520 3h0m19 3h0m71 0h0m-569 2h0m16 0h0m157 1h0m455 1h0m274 0h0m-615 1h0m206 0h0m126 0h0m259 0h0m-1022 1h0m1052 0h0m-862 1h0m807 0h0m122 0h0m-631 1h0m-281 1h0m441 0h0m494 0h0m-412 1h0m111 2h0m-440 1h0m764 1h0m-805 1h0m83 0h0m353 0h0m-245 2h0m496 0h0m25 1h0m-158 3h0m-767 1h0m839 1h0m-249 3h0m57 0h0m-152 1h0m234 3h0m108 0h0m-251 1h0m-684 2h0m265 1h0m623 1h0m-872 1h0m864 1h0m-692 1h0m643 0h0m229 1h0m55 0h0m-1078 1h0m74 2h0m319 0h0m291 1h0m182 0h0m42 0h0m-726 2h0m698 2h0m-810 1h0m679 0h0m-631 1h0m660 0h0m-709 2h0m362 0h0m591 2h0m-316 1h0m249 0h0m82 0h0m-213 1h0m60 3h0m-694 1h0m136 0h0m321 1h0m8 0h0m414 0h0m-354 2h0m-205 1h0m194 0h0m-714 1h0m550 3h0m-192 1h0m-110 1h0m-13 3h0m-9 1h0m445 0h0m-535 1h0m849 0h0m-658 1h0m-357 2h0m628 0h0m-116 1h0m359 1h0m-440 1h0m-195 1h0m693 0h0m87 0h0m-698 1h0m-84 1h0m-35 1h0m106 1h0m378 1h0m-617 7h0m273 0h0m357 1h0m-552 1h0m206 0h0m587 0h0m-966 2h0m190 0h0m427 2h0m393 0h0m89 2h0m3 2h0m-553 2h0m597 0h0m-699 1h0m236 0h0m210 0h0m-877 1h0m497 0h0m643 1h0m-215 1h0m-456 2h0m263 1h0m25 0h0m341 1h0m-392 1h0m384 0h0m-432 1h0m-287 3h0m-327 1h0m628 2h0m406 0h0m-644 1h0m234 0h0m35 3h0m-370 6h0m90 0h0m108 3h0m-276 1h0m474 0h0m277 0h0m-659 1h0m155 0h0m89 0h0m546 1h0m-1112 8h0m442 0h0m436 0h0m200 0h0m-643 1h0m86 0h0m278 0h0m-672 1h0m584 0h0m-402 1h0m497 1h0m-375 2h0m-64 2h0m99 0h0m-34 1h0m29 0h0m220 0h0m-591 1h0m865 0h0m-876 3h0m147 0h0m346 0h0m-620 5h0m876 1h0m-568 1h0m607 0h0m44 0h0m-446 3h0m42 1h0m-402 2h0m958 1h0m-912 3h0m-26 2h0m165 1h0m-41 1h0m270 1h0m16 3h0m30 1h0m314 0h0m3 2h0m135 2h0m-454 2h0m473 2h0m-509 1h0m63 0h0m8 0h0m-449 1h0m673 0h0m-119 3h0m179 1h0m-555 1h0"/>
<path transform="translate(.5 .5)" stroke="rgb(157,157,157)" stroke-width="1" stroke-linecap="square" d="M133 0h0m-114 1h0m762 0h0m-312 3h0m-112 1h0m541 8h0m-778 3h0m1012 0h0m-353 1h0m-106 2h0m-457 7h0m512 3h0m-285 3h0m-119 4h0m117 2h0m472 0h0m-910 10h0m341 1h0m483 1h0m-314 5h0m-367 3h0m157 0h0m-180 7h0m336 4h0m164 3h0m71 3h0m50 1h0m216 0h0m-805 1h0m284 4h0m336 3h0m299 5h0m-252 2h0m-312 2h0m481 9h0m-404 1h0m-407 1h0m865 4h0m-409 1h0m-535 5h0m542 1h0m-261 2h0m125 0h0m-40 1h0m630 0h0m-387 2h0m-380 2h0m277 8h0m118 0h0m22 0h0m114 4h0m-758 4h0m1041 0h0m-702 5h0m159 4h0m509 4h0m-474 3h0m106 0h0m-621 1h0m107 0h0m5 2h0m-198 7h0m632 0h0m-100 1h0m-20 2h0m-215 2h0m448 0h0m104 7h0m-531 4h0m160 0h0m119 1h0m-60 4h0m-448 2h0m1005 1h0m-423 4h0m164 0h0m-563 1h0m620 5h0m128 3h0m-679 1h0m126 0h0m-50 1h0m-345 1h0m70 0h0m65 0h0m451 1h0m164 2h0m280 1h0m-1083 1h0m124 0h0m198 0h0m440 1h0m119 5h0m119 1h0m-370 2h0m-527 3h0m864 0h0m-272 1h0m306 2h0m24 0h0m-220 3h0m-542 3h0m-90 3h0m-50 6h0m321 1h0m241 2h0m-452 4h0m-83 3h0m973 1h0m-620 1h0m-406 2h0m386 1h0m-465 1h0m436 0h0m-294 3h0m208 2h0m203 2h0m-32 3h0m-107 2h0m393 0h0m-565 3h0m422 1h0m372 1h0m-718 3h0m522 1h0m-741 5h0m403 0h0m-497 8h0m498 0h0m-199 1h0m-293 5h0m102 3h0m756 5h0m-651 3h0m-94 5h0m939 0h0m-22 3h0m-697 1h0m371 0h0m349 5h0m-669 1h0m630 6h0m16 1h0m-175 3h0m-698 5h0m113 0h0m549 0h0m156 1h0m-246 6h0m329 0h0m-142 1h0m-767 1h0m817 0h0m-959 1h0m87 9h0m736 4h0m-743 1h0m777 3h0m-50 1h0m-398 2h0m478 9h0m-98 4h0m-104 3h0m-285 5h0m193 0h0m-208 6h0m77 1h0m-80 6h0m227 0h0m-494 1h0m595 4h0m309 4h0m-823 5h0m500 0h0m-231 5h0m-229 3h0m462 0h0m252 1h0m-147 1h0m-323 1h0m-400 8h0m127 1h0m753 3h0m-626 2h0m513 0h0m114 1h0m-296 1h0m-470 3h0m576 1h0m321 3h0m-140 2h0m-546 2h0m176 2h0m-392 1h0m74 0h0m406 1h0m-485 2h0m61 1h0m537 2h0m-129 1h0m-681 1h0m482 8h0m58 3h0m-398 1h0m34 2h0m607 2h0m135 0h0m-712 3h0m575 1h0m-203 1h0m237 12h0m-141 7h0m-52 3h0m-169 1h0m518 1h0m1 0h0m-571 1h0m173 0h0m-507 3h0m132 0h0m855 0h0m-888 4h0m864 1h0m-977 1h0m528 0h0m238 2h0m135 2h0m-795 4h0m239 0h0m213 0h0m414 0h0m-41 4h0m-473 7h0m448 1h0m30 0h0m-867 1h0m854 0h0m-46 1h0m127 0h0m18 6h0m-626 5h0m-481 2h0m812 1h0m-685 3h0m528 0h0m-275 2h0m-313 1h0m410 1h0m125 1h0m-260 2h0m346 2h0m-466 1h0m-212 2h0m275 2h0m290 0h0m280 3h0m-46 1h0m-357 9h0m-431 6h0m402 1h0m430 7h0m15 0h0m-458 2h0m639 0h0m-903 3h0m106 3h0m-152 1h0m899 4h0m-457 3h0m-249 5h0m134 0h0m-351 2h0m375 2h0m274 2h0m212 0h0m-189 10h0m42 0h0m-697 1h0m55 0h0m665 2h0m-610 3h0m66 1h0m318 0h0m-43 8h0m194 0h0m121 5h0m-146 1h0m-258 8h0"/>
<path transform="translate(.5 .5)" stroke="rgb(172,172,172)" stroke-width="1" stroke-linecap="square" d="M292 20h0m-54 1h0m418 28h0m-58 46h0m-293 45h0m515 30h0m-806 39h0m319 77h0m80 31h0m376 5h0m82 39h0m-608 7h0m541 31h0m-536 40h0m476 81h0m-357 1h0m-95 26h0m293 4h0m401 2h0m-57 20h0m173 61h0m41 15h0"/>
<path stroke="rgb(50,50,50)" stroke-width="2" stroke-linecap="square" d="M320 7h0m829 11h0m-1025 1h0m676 5h0m-192 13h0m-298 5h0m598 6h0m-359 3h0m292 0h0m86 0h0m-564 1h0m161 7h0m-56 1h0m545 0h0m-633 7h0m735 15h0m-408 5h0m-551 14h0m21 2h0m88 6h0m741 6h0m-794 4h0m167 4h0m398 0h0m-283 1h0m302 4h0m-129 15h0m-85 4h0m-292 3h0m-32 1h0m730 9h0m-934 13h0m735 1h0m-242 2h0m-348 4h0m898 9h0m-567 7h0m127 6h0m-352 1h0m-28 2h0m877 0h0m28 2h0m-1174 1h0m429 17h0m45 6h0m-35 5h0m-169 28h0m-252 10h0m356 11h0m-257 21h0m839 3h0m156 6h0m-782 6h0m782 1h0m-728 8h0m-352 6h0m654 4h0m117 3h0m-494 1h0m741 6h0m-804 1h0m608 5h0m-242 4h0m-72 11h0m24 8h0m425 6h0m-938 5h0m24 22h0m-33 3h0m469 15h0m295 22h0m-694 21h0m20 5h0m880 16h0m121 4h0m-382 5h0m-89 21h0m-30 4h0m93 0h0m6 4h0m384 9h0m-420 4h0m-170 2h0m-533 2h0m966 20h0m-134 6h0m-797 2h0m669 13h0m-585 11h0m829 7h0m-160 4h0m-36 2h0m412 1h0m-102 6h0m-479 1h0m-531 4h0m854 6h0m279 8h0m-400 6h0m196 0h0m-892 2h0m876 1h0m-410 10h0m598 5h0"/>
<path stroke="rgb(70,70,70)" stroke-width="2" stroke-linecap="square" d="M351 0h0m377 2h0m13 0h0m-729 2h0m568 1h0m-513 1h0m86 0h0m1003 0h0m-954 2h0m501 0h0m256 0h0m-587 1h0m-229 1h0m755 0h0m-700 1h0m969 0h0m-806 2h0m590 0h0m163 0h0m-597 2h0m-476 5h0m270 2h0m378 0h0m-86 2h0m-301 1h0m604 0h0m-404 1h0m250 0h0m149 2h0m3 0h0m-683 1h0m390 0h0m483 0h0m-332 1h0m249 2h0m-323 2h0m207 0h0m-887 2h0m245 0h0m44 0h0m549 0h0m-489 1h0m732 2h0m-314 1h0m-375 1h0m121 2h0m224 0h0m-254 1h0m337 1h0m-683 1h0m603 0h0m-561 1h0m-121 1h0m813 0h0m-756 1h0m269 1h0m270 0h0m-654 1h0m48 0h0m809 2h0m-346 4h0m93 0h0m-524 1h0m210 0h0m602 1h0m82 0h0m-981 3h0m508 0h0m-421 1h0m838 0h0m-186 1h0m323 0h0m-955 2h0m1067 2h0m-882 1h0m15 0h0m69 0h0m625 0h0m-559 1h0m186 0h0m534 0h0m-400 1h0m-194 1h0m-509 2h0m361 1h0m64 0h0m252 1h0m412 0h0m-1094 1h0m19 0h0m-58 1h0m31 0h0m140 0h0m-170 2h0m480 1h0m338 0h0m-208 1h0m-366 1h0m-100 1h0m798 1h0m-387 1h0m-327 1h0m306 0h0m157 0h0m-84 2h0m-209 1h0m-212 1h0m443 0h0m-133 2h0m113 0h0m267 0h0m-79 2h0m-437 4h0m794 0h0m-772 1h0m390 3h0m39 0h0m-355 1h0m-119 2h0m26 1h0m-241 1h0m633 0h0m-358 1h0m392 0h0m-554 1h0m565 0h0m41 1h0m43 1h0m99 0h0m162 0h0m-1058 1h0m4 0h0m260 0h0m590 2h0m-895 1h0m811 0h0m-783 1h0m284 1h0m84 2h0m1 0h0m693 1h0m-826 1h0m-99 2h0m338 0h0m-405 1h0m301 0h0m-191 1h0m674 0h0m-245 2h0m-221 1h0m-384 1h0m843 0h0m-265 4h0m-425 1h0m-246 1h0m238 0h0m71 0h0m-276 1h0m179 0h0m253 2h0m374 1h0m-555 2h0m295 0h0m101 0h0m75 2h0m-145 1h0m214 0h0m-456 2h0m199 0h0m241 0h0m-343 1h0m583 0h0m-701 1h0m-206 3h0m567 1h0m-533 1h0m108 0h0m270 0h0m488 0h0m-61 1h0m-840 4h0m173 1h0m290 0h0m-529 3h0m518 0h0m-2 2h0m-170 3h0m251 0h0m-149 1h0m306 1h0m-736 4h0m354 2h0m62 1h0m621 0h0m-128 1h0m78 0h0m-111 1h0m-539 1h0m252 0h0m-550 3h0m11 2h0m801 0h0m-908 1h0m1140 0h0m-687 2h0m-78 1h0m338 0h0m363 0h0m-934 2h0m80 1h0m135 0h0m242 1h0m-623 1h0m231 0h0m36 1h0m352 3h0m544 1h0m-1084 1h0m-49 1h0m681 2h0m-476 1h0m715 2h0m-189 1h0m311 0h0m-944 1h0m331 1h0m164 0h0m-325 1h0m-237 1h0m669 1h0m-552 2h0m827 0h0m27 0h0m-752 1h0m230 1h0m-372 1h0m57 1h0m30 0h0m-195 1h0m951 0h0m-629 1h0m265 0h0m-45 3h0m504 0h0m80 0h0m-971 2h0m715 0h0m-22 1h0m-130 1h0m24 1h0m117 0h0m-256 2h0m333 1h0m-841 1h0m1045 0h0m-802 1h0m104 2h0m544 0h0m-158 1h0m31 1h0m-801 2h0m365 0h0m422 0h0m276 0h0m-342 1h0m222 2h0m-4 1h0m-421 1h0m7 0h0m240 0h0m244 1h0m-204 1h0m-400 1h0m15 1h0m281 1h0m-148 2h0m82 0h0m-661 1h0m764 0h0m279 1h0m-62 1h0m-304 1h0m-273 1h0m-158 1h0m849 0h0m-465 1h0m-406 1h0m687 0h0m-926 1h0m1044 0h0m-753 1h0m152 0h0m-348 2h0m239 0h0m532 0h0m-797 1h0m119 1h0m204 3h0m-245 3h0m473 1h0m288 0h0m-810 1h0m250 0h0m483 0h0m147 3h0m95 0h0m-384 1h0m373 0h0m-965 2h0m147 1h0m737 0h0m-456 2h0m383 0h0m-721 1h0m98 2h0m151 1h0m57 0h0m146 0h0m-539 1h0m380 0h0m-314 1h0m145 0h0m281 1h0m114 1h0m360 2h0m-341 2h0m314 0h0m45 0h0m-1118 2h0m311 0h0m751 1h0m-962 2h0m12 3h0m294 2h0m299 2h0m-140 2h0m314 1h0m37 0h0m-444 1h0m441 0h0m-368 3h0m341 1h0m-67 2h0m52 2h0m-740 1h0m-88 2h0m394 0h0m25 0h0m306 0h0m-368 1h0m370 0h0m-24 1h0m-682 1h0m12 1h0m271 0h0m283 0h0m-379 1h0m10 0h0m119 0h0m42 0h0m-219 2h0m132 2h0m55 0h0m-406 3h0m321 0h0m715 0h0m-233 2h0m275 0h0m-228 1h0m-665 2h0m426 0h0m178 1h0m385 0h0m-1103 1h0m946 0h0m-973 1h0m284 0h0m276 1h0m-443 2h0m56 0h0m46 0h0m332 0h0m-311 2h0m-42 1h0m758 3h0m-260 1h0m233 4h0m-690 3h0m100 0h0m-328 1h0m425 0h0m235 0h0m374 0h0m-582 3h0m-492 1h0m11 0h0m552 0h0m382 0h0m-867 1h0m573 0h0m474 4h0m-685 4h0m233 0h0m291 5h0m-74 1h0m-757 1h0m422 0h0m-18 1h0m279 0h0m-635 1h0m-15 1h0m568 0h0m245 0h0m-302 1h0m115 0h0m-670 2h0m434 0h0m-323 1h0m689 1h0m-245 1h0m-227 1h0m-148 1h0m328 0h0m355 0h0m30 0h0m131 0h0m-393 2h0m20 0h0m20 2h0m-643 1h0m255 0h0m454 1h0m255 0h0m-814 1h0m519 0h0m-494 1h0m38 1h0m78 1h0m377 0h0m259 1h0m-1005 2h0m734 0h0m38 0h0m-133 1h0m50 0h0m153 0h0m-108 1h0m-566 1h0m916 0h0m-170 1h0m15 0h0m-385 1h0m-149 1h0m-253 2h0m-188 1h0m762 0h0m137 0h0m163 2h0m-913 1h0m621 2h0m188 1h0m86 0h0m-436 2h0m75 1h0m148 0h0m23 0h0m124 0h0m-667 1h0m644 1h0m-898 1h0m310 1h0m366 2h0m-695 2h0m686 0h0m398 0h0m-842 1h0m828 1h0m-578 1h0m45 1h0m6 0h0m-571 3h0m402 0h0m415 3h0m-828 3h0m4 2h0m446 0h0m256 1h0m280 0h0m-374 2h0m422 2h0m-682 1h0m383 2h0m203 0h0m-583 1h0m143 0h0m-401 1h0m308 1h0m156 0h0m-37 1h0m-498 1h0m871 3h0m-876 1h0m868 0h0m55 1h0m33 1h0m-603 2h0m52 0h0m-221 1h0m198 1h0m7 0h0m579 0h0m-266 1h0m314 0h0m-416 1h0m-1 1h0m-17 3h0m-342 1h0m263 0h0m216 0h0m181 0h0m82 0h0m126 1h0m4 0h0m-245 1h0m242 0h0m-913 2h0m-196 1h0m261 0h0m322 0h0m-214 1h0m-263 1h0m219 1h0m462 0h0m-345 1h0m322 0h0m-212 2h0m-563 2h0m134 1h0m177 0h0m551 0h0m-380 1h0m575 0h0m-767 1h0m-2 1h0m641 0h0m39 0h0m-759 1h0m-182 1h0m572 0h0m301 0h0m-619 1h0m669 0h0m-835 1h0m11 0h0m465 0h0m218 0h0m278 2h0m-852 2h0m746 0h0m-728 1h0m76 0h0m730 0h0m-15 1h0m12 2h0m-945 2h0m302 1h0m543 0h0m-117 1h0m-567 1h0m-282 1h0m291 0h0m140 0h0m448 0h0m-356 1h0m596 0h0m-360 1h0m-419 2h0m58 0h0m-258 1h0m72 1h0m-254 2h0m54 0h0m276 0h0m264 0h0m239 3h0m81 0h0m-524 3h0m253 0h0m-569 1h0m536 0h0m-347 1h0m190 0h0m-134 1h0m572 0h0m-383 1h0m145 1h0m439 0h0m-769 1h0m574 0h0m-464 1h0m464 0h0m-566 1h0m694 0h0m-786 1h0m391 0h0m287 0h0m256 3h0m-376 1h0m-692 1h0m282 2h0m-96 1h0m254 1h0m467 0h0m-99 1h0m-638 1h0m32 2h0m-308 5h0m713 0h0m-677 3h0m745 0h0m-434 1h0m347 1h0m11 0h0m269 0h0m-558 1h0m-2 1h0m158 1h0m352 0h0m-756 1h0m200 3h0m-200 1h0m3 1h0m449 1h0m-68 1h0m-194 1h0m171 1h0m53 0h0m-299 1h0m25 0h0m214 1h0m278 0h0m192 1h0m-227 1h0m335 0h0m-239 2h0m-854 1h0m453 1h0m159 0h0m417 0h0m-28 1h0m-651 1h0m567 0h0m-693 1h0m406 0h0m348 0h0m-540 1h0m-92 1h0m102 1h0m484 1h0m-81 1h0m-416 1h0m467 1h0m-572 1h0m-281 1h0m283 0h0m87 0h0m-55 1h0m756 0h0m-184 1h0m-363 1h0m528 1h0m-548 3h0m162 1h0m356 0h0m-252 1h0m-140 2h0m-427 1h0m533 0h0m-331 2h0m-360 1h0m53 0h0m267 0h0m324 0h0m212 0h0m-708 1h0m342 0h0m-154 2h0m-349 1h0m556 0h0m272 0h0m-240 1h0m297 2h0m-710 1h0m221 1h0m-159 1h0m288 1h0m307 0h0m43 1h0m208 0h0m-1111 6h0m352 0h0m728 0h0m-623 1h0m360 0h0m-448 1h0m548 1h0m-139 1h0m-238 3h0m133 0h0m-444 3h0m-254 1h0m1087 0h0m34 2h0m-683 2h0m70 4h0m113 0h0m-596 1h0m822 1h0m-571 2h0m506 1h0m170 1h0m-892 1h0m24 0h0m840 0h0m-228 1h0m-80 1h0m28 0h0m-627 2h0m126 1h0m112 0h0m107 0h0m512 0h0m60 0h0m81 0h0m-59 2h0m-911 1h0m519 1h0m-591 1h0m1112 0h0m-928 1h0m752 0h0m3 1h0m81 0h0m109 3h0m-87 3h0"/>
<path stroke="rgb(90,90,90)" stroke-width="2" stroke-linecap="square" d="M113 3h0m257 1h0m486 1h0m146 0h0m-48 2h0m-31 1h0m-857 2h0m56 1h0m478 0h0m427 0h0m33 0h0m-728 2h0m43 0h0m256 0h0m-492 2h0m256 0h0m-386 1h0m363 0h0m498 1h0m-712 5h0m806 1h0m203 0h0m-417 3h0m-591 1h0m851 4h0m-461 2h0m110 0h0m441 0h0m-450 1h0m-440 2h0m841 0h0m-561 3h0m-438 1h0m129 1h0m489 2h0m-91 2h0m251 0h0m-589 1h0m6 1h0m283 0h0m296 0h0m-35 1h0m196 0h0m-474 1h0m393 0h0m-891 1h0m821 1h0m-333 2h0m522 1h0m31 0h0m-320 1h0m-605 4h0m341 0h0m610 1h0m-407 1h0m104 0h0m194 0h0m200 1h0m-768 2h0m127 2h0m116 1h0m356 1h0m-800 1h0m190 0h0m782 1h0m-1026 1h0m85 0h0m479 3h0m154 1h0m-166 1h0m189 1h0m262 2h0m-1082 2h0m74 0h0m176 1h0m201 1h0m-384 1h0m458 0h0m-528 2h0m1074 1h0m-769 1h0m800 2h0m-512 2h0m123 0h0m203 1h0m-933 1h0m772 0h0m-611 1h0m-28 6h0m909 1h0m-961 3h0m521 0h0m255 0h0m-475 1h0m-311 1h0m19 1h0m547 3h0m399 0h0m-486 2h0m-427 3h0m846 0h0m129 1h0m-364 1h0m-748 2h0m690 0h0m-508 1h0m822 1h0m-788 3h0m-244 1h0m1023 0h0m-274 1h0m-330 2h0m222 0h0m15 0h0m269 0h0m-89 2h0m-75 1h0m196 0h0m-570 1h0m646 0h0m-179 1h0m-619 1h0m36 0h0m724 0h0m-574 1h0m14 1h0m-363 1h0m156 0h0m601 1h0m-724 1h0m561 0h0m-577 2h0m470 0h0m-115 2h0m162 0h0m-483 1h0m583 0h0m232 0h0m234 1h0m-129 1h0m-155 3h0m-188 1h0m-261 2h0m2 0h0m-155 1h0m91 0h0m154 0h0m91 0h0m112 0h0m-518 4h0m567 0h0m-498 1h0m61 1h0m-280 2h0m21 0h0m778 2h0m-734 2h0m174 1h0m575 0h0m-683 1h0m190 0h0m418 1h0m-599 2h0m408 2h0m479 0h0m-649 1h0m11 2h0m216 0h0m26 0h0m-275 1h0m3 1h0m488 1h0m174 1h0m-966 1h0m-36 1h0m595 0h0m-345 1h0m720 0h0m-905 1h0m-53 1h0m413 2h0m-405 2h0m203 0h0m0 1h0m-203 6h0m131 0h0m299 0h0m76 0h0m534 1h0m-745 1h0m-218 3h0m398 0h0m535 0h0m-897 1h0m421 1h0m-523 2h0m323 1h0m52 0h0m532 0h0m-541 2h0m395 1h0m-157 2h0m-579 2h0m681 0h0m-597 1h0m812 10h0m-63 1h0m-769 3h0m691 0h0m-636 1h0m443 4h0m220 0h0m7 1h0m34 2h0m-504 3h0m161 1h0m547 0h0m-975 3h0m26 0h0m152 0h0m93 0h0m-146 1h0m278 0h0m425 0h0m128 0h0m-257 1h0m-295 1h0m439 3h0m-546 1h0m480 0h0m-47 1h0m41 3h0m-970 1h0m432 1h0m504 2h0m94 1h0m-966 1h0m691 0h0m-501 1h0m503 0h0m-707 1h0m482 0h0m418 0h0m-264 1h0m-642 1h0m459 0h0m421 0h0m-687 2h0m401 0h0m-316 1h0m387 2h0m-407 1h0m293 0h0m416 0h0m23 0h0m70 0h0m-481 1h0m295 0h0m-706 2h0m39 0h0m565 2h0m-469 1h0m259 0h0m558 0h0m-886 1h0m256 0h0m41 0h0m546 0h0m-899 1h0m389 0h0m174 1h0m322 0h0m-856 2h0m874 0h0m-150 1h0m-312 2h0m-568 1h0m711 0h0m-764 3h0m739 1h0m130 0h0m-436 1h0m358 1h0m-753 1h0m361 0h0m277 2h0m-128 1h0m467 0h0m58 0h0m-276 1h0m52 1h0m-788 1h0m-81 3h0m59 0h0m1072 0h0m-360 1h0m-187 2h0m284 3h0m6 1h0m283 2h0m-460 1h0m172 1h0m-825 1h0m751 0h0m163 0h0m-650 2h0m-138 1h0m102 0h0m570 0h0m154 0h0m-85 2h0m238 0h0m-1131 1h0m1114 2h0m-214 1h0m-881 2h0m171 0h0m222 1h0m-436 1h0m982 0h0m-328 1h0m-420 2h0m352 2h0m-556 1h0m1099 6h0m-441 1h0m54 0h0m-489 1h0m122 2h0m284 1h0m-680 2h0m42 0h0m808 0h0m171 3h0m-820 2h0m970 3h0m-898 2h0m550 0h0m193 0h0m-860 1h0m582 0h0m-461 1h0m384 1h0m-544 1h0m344 0h0m390 1h0m51 0h0m-627 1h0m157 0h0m143 0h0m-380 1h0m-51 1h0m572 3h0m-19 2h0m29 0h0m65 4h0m-326 4h0m434 0h0m-109 2h0m-684 2h0m123 0h0m201 3h0m54 0h0m-448 2h0m86 0h0m80 0h0m28 0h0m769 0h0m179 0h0m-588 1h0m7 0h0m32 0h0m-52 1h0m218 0h0m357 1h0m13 0h0m-965 1h0m591 1h0m-741 1h0m259 0h0m-147 2h0m758 0h0m-819 1h0m940 2h0m-828 1h0m64 1h0m227 0h0m155 1h0m182 1h0m-821 1h0m13 1h0m484 0h0m420 0h0m-793 1h0m497 1h0m283 3h0m-446 1h0m-368 1h0m111 0h0m22 1h0m553 1h0m-754 3h0m1023 0h0m-670 1h0m344 0h0m-579 2h0m418 1h0m366 2h0m-631 1h0m154 2h0m-104 1h0m123 0h0m-256 1h0m552 0h0m-410 1h0m559 1h0m-552 1h0m475 0h0m-131 1h0m233 0h0m-924 1h0m408 0h0m94 0h0m285 0h0m-546 2h0m331 0h0m-206 4h0m21 0h0m623 0h0m-299 1h0m-662 1h0m594 0h0m-239 1h0m-377 6h0m219 0h0m425 1h0m281 0h0m-146 1h0m-551 1h0m862 1h0m-270 1h0m148 0h0m-190 2h0m-593 1h0m128 0h0m547 2h0m-173 1h0m-331 4h0m188 2h0m-176 3h0m211 0h0m-372 3h0m42 1h0m-238 1h0m670 0h0m147 2h0m-366 1h0m-482 4h0m501 0h0m-202 2h0m744 1h0m-989 1h0m194 1h0m385 0h0m324 0h0m-408 1h0m356 0h0m-211 1h0m-625 1h0m47 0h0m710 0h0m-467 2h0m92 1h0m-276 1h0m331 2h0m-490 1h0m817 0h0m309 1h0m-1064 2h0m-6 3h0m914 3h0m-953 1h0m409 1h0m480 1h0m-29 2h0m114 0h0m114 0h0m-510 1h0m261 0h0m-456 1h0m28 2h0m271 1h0m234 0h0m163 0h0m-875 2h0m722 3h0m-266 1h0m208 0h0m40 1h0m-209 1h0m190 0h0m-613 1h0m104 2h0m531 0h0m-21 2h0m-346 1h0m-489 1h0m476 0h0m264 0h0m63 0h0m-812 2h0m622 0h0m210 0h0m-114 1h0m105 0h0m-396 2h0m-299 1h0m431 0h0m-147 1h0m2 0h0m-18 1h0m-174 1h0m327 0h0m27 0h0m460 0h0m-428 1h0m204 0h0m-160 1h0m263 2h0m-669 2h0m552 0h0m-685 1h0m181 0h0m-351 1h0m1095 0h0m-537 2h0m57 0h0m-550 2h0m29 0h0m-86 1h0m547 1h0m-566 1h0m428 0h0m624 0h0m-1006 1h0m687 0h0m-57 1h0m320 1h0m-347 1h0m-422 3h0m187 1h0m453 0h0m85 1h0m-776 2h0m341 1h0m295 1h0m71 0h0m-619 1h0m97 0h0m38 1h0m-173 1h0m649 2h0m-484 1h0m135 0h0m-135 2h0m359 0h0m-610 3h0m-67 1h0m794 0h0m-562 1h0m266 2h0m267 0h0m-557 1h0m439 0h0m-216 1h0m8 1h0m566 0h0m-906 1h0m711 0h0m-265 3h0m289 1h0m-421 4h0m-349 2h0m302 0h0m39 1h0m517 0h0m-866 2h0m199 0h0m635 0h0m-129 1h0m-497 1h0m24 0h0m305 0h0m41 1h0m-443 1h0m697 1h0m119 0h0m-798 1h0m151 0h0m-399 1h0m130 0h0m199 0h0m483 0h0m-604 3h0m865 2h0m-1106 3h0m125 0h0m209 0h0m-317 1h0m624 0h0m-79 1h0m550 0h0m-733 1h0m82 1h0m402 1h0m-898 1h0m59 0h0m1064 0h0m-35 1h0m-886 1h0m549 0h0m107 0h0m-665 2h0m-96 1h0m539 0h0m231 1h0m-347 3h0m510 0h0m-441 2h0m552 0h0m-831 2h0m144 0h0m553 2h0m-576 1h0m525 0h0m-189 1h0m-368 1h0m686 0h0m-207 1h0m-523 1h0m405 1h0m-495 2h0m-143 1h0m526 0h0m130 0h0m189 1h0m-253 2h0m132 0h0m-725 2h0m615 0h0m107 0h0m-727 1h0m261 0h0m638 0h0m-97 2h0m-894 2h0m860 0h0m182 0h0m-74 2h0m-646 1h0m532 1h0m-627 1h0m82 0h0m27 0h0m552 0h0m-852 1h0m738 0h0m-708 1h0m285 0h0m207 0h0m484 0h0m-613 1h0m132 1h0m-305 1h0m737 1h0m-900 1h0m1036 0h0"/>
<path stroke="rgb(110,110,110)" stroke-width="2" stroke-linecap="square" d="M57 3h0m632 1h0m-684 4h0m681 2h0m81 0h0m-493 1h0m-249 3h0m686 1h0m-640 3h0m736 1h0m-718 2h0m1044 0h0m-218 1h0m-378 1h0m358 0h0m-69 2h0m-368 2h0m520 0h0m-883 2h0m164 1h0m178 5h0m587 1h0m-795 2h0m549 0h0m-174 1h0m358 1h0m-744 2h0m773 1h0m-860 1h0m787 0h0m-361 1h0m-144 1h0m95 3h0m483 0h0m-916 3h0m818 1h0m175 0h0m-696 7h0m718 0h0m10 0h0m-1030 1h0m567 1h0m183 10h0m309 0h0m-1016 2h0m200 0h0m577 0h0m-259 5h0m375 0h0m5 1h0m-460 1h0m593 3h0m-422 2h0m-410 1h0m500 0h0m105 0h0m-842 2h0m533 0h0m170 0h0m-142 1h0m-504 3h0m485 1h0m167 3h0m-4 1h0m-277 1h0m-309 1h0m330 0h0m-463 2h0m89 0h0m407 1h0m511 3h0m-402 1h0m-58 6h0m128 1h0m29 1h0m-13 1h0m238 0h0m128 0h0m-969 1h0m7 0h0m198 0h0m159 0h0m601 1h0m-889 1h0m586 1h0m-427 3h0m124 1h0m187 2h0m485 2h0m-463 1h0m273 1h0m-616 3h0m25 0h0m-38 1h0m751 3h0m-304 1h0m-298 1h0m-84 2h0m-409 2h0m1058 5h0m-660 1h0m-214 1h0m710 0h0m-304 1h0m325 1h0m-845 3h0m653 0h0m-429 1h0m-121 1h0m414 1h0m-296 2h0m70 0h0m374 1h0m-684 5h0m418 0h0m246 0h0m-267 1h0m605 6h0m-1065 1h0m884 0h0m-745 1h0m23 0h0m782 0h0m134 2h0m-174 1h0m-827 1h0m508 0h0m535 1h0m-544 3h0m413 1h0m-904 5h0m86 0h0m-102 1h0m300 1h0m150 3h0m-69 3h0m723 0h0m-312 2h0m-767 3h0m499 6h0m-519 2h0m243 3h0m70 0h0m602 0h0m-807 2h0m-65 2h0m140 1h0m-92 1h0m-23 2h0m127 3h0m-67 4h0m265 0h0m285 2h0m-705 1h0m57 0h0m656 1h0m200 2h0m-651 3h0m-53 1h0m-50 3h0m117 1h0m745 1h0m-274 2h0m-224 1h0m-87 4h0m130 1h0m45 3h0m313 0h0m105 1h0m-261 1h0m-738 1h0m-60 3h0m344 0h0m389 1h0m-404 1h0m518 3h0m-28 1h0m-380 1h0m-6 5h0m634 0h0m70 2h0m-466 2h0m-388 4h0m214 0h0m-321 3h0m73 1h0m704 0h0m-9 3h0m64 0h0m-851 5h0m185 1h0m499 1h0m276 3h0m-371 1h0m-743 1h0m180 0h0m200 0h0m-298 2h0m216 2h0m772 0h0m-471 1h0m30 0h0m-153 9h0m-495 1h0m146 0h0m168 1h0m190 6h0m-238 3h0m478 0h0m-43 1h0m440 1h0m10 1h0m-477 3h0m445 0h0m41 3h0m-370 1h0m-370 1h0m87 0h0m393 0h0m-781 3h0m675 3h0m126 1h0m226 0h0m-1080 1h0m102 2h0m2 0h0m-25 3h0m21 0h0m139 0h0m353 2h0m30 0h0m-306 1h0m-66 1h0m182 5h0m389 0h0m95 0h0m71 4h0m-446 3h0m-391 3h0m-134 6h0m558 0h0m-366 2h0m891 3h0m-1046 1h0m600 2h0m105 0h0m25 1h0m213 7h0m-811 1h0m637 5h0m-471 1h0m-67 5h0m347 0h0m16 1h0m-612 2h0m424 1h0m72 0h0m-141 2h0m14 1h0m181 3h0m230 0h0m-767 1h0m923 2h0m-539 6h0m294 0h0m-199 1h0m100 2h0m-497 2h0m648 0h0m217 2h0m-649 1h0m452 1h0m-543 2h0m-45 2h0m518 1h0m-469 5h0m571 0h0m-30 3h0m-544 4h0m688 0h0m-602 3h0m396 2h0m-237 3h0m114 0h0m-299 2h0m440 1h0m-153 1h0m55 3h0m-430 1h0m437 2h0m335 0h0m-204 4h0m252 0h0m-818 1h0m460 0h0m-445 1h0m504 0h0m142 0h0m-133 1h0m-542 2h0m372 0h0m-234 1h0m578 2h0m56 0h0m94 0h0m-354 3h0m-17 3h0m-694 1h0m279 1h0m75 0h0m707 0h0m-1095 1h0m863 0h0m256 0h0m-768 2h0m98 1h0m-386 1h0m231 0h0m67 1h0m346 4h0m11 1h0m112 0h0m-786 3h0m85 0h0m206 1h0m399 0h0m-243 1h0m-10 3h0m-74 3h0m588 3h0m-646 2h0m123 0h0m14 4h0m297 0h0m-483 1h0m347 0h0m314 1h0m-131 2h0m104 0h0m-899 2h0m105 0h0m76 2h0m515 1h0m18 0h0m-51 1h0m71 0h0m52 0h0m-78 1h0m279 2h0m-1056 1h0m353 1h0m134 0h0m656 2h0m-825 2h0m347 0h0m-258 2h0m646 1h0m-456 1h0m336 0h0m-627 2h0m391 0h0m-702 4h0m8 3h0m899 1h0m-357 1h0m33 1h0m-232 3h0m637 0h0m-211 4h0m-11 3h0m-775 3h0m541 0h0m325 0h0m-308 1h0m-353 1h0m-129 3h0m379 1h0m525 2h0m70 1h0m-980 1h0m232 1h0m102 0h0m-358 3h0m196 1h0m297 2h0m-384 1h0m836 2h0m-756 1h0m-108 3h0m864 0h0m-741 2h0m748 1h0m-147 1h0m87 2h0m223 0h0m-509 3h0m-634 1h0m92 2h0m979 0h0m-543 1h0m607 1h0m-1034 10h0m451 4h0m158 1h0m345 0h0m-122 2h0m-240 4h0m-639 3h0m114 7h0m637 0h0m-87 1h0m283 2h0m-109 1h0m-212 5h0m-433 5h0m-117 2h0m755 2h0m-711 6h0m768 2h0m-728 1h0m107 1h0m67 2h0m244 1h0m492 0h0m-203 1h0m53 0h0"/>
<path stroke="rgb(130,130,130)" stroke-width="2" stroke-linecap="square" d="M459 4h0m248 2h0m-475 2h0m-48 1h0m825 0h0m-828 1h0m710 4h0m-226 6h0m-639 1h0m173 1h0m175 2h0m654 8h0m84 0h0m-106 8h0m91 4h0m-547 8h0m-209 1h0m448 1h0m4 1h0m-545 3h0m215 2h0m496 3h0m-68 1h0m285 0h0m-259 1h0m244 8h0m-95 8h0m-770 7h0m405 1h0m283 0h0m-881 2h0m429 1h0m-330 2h0m361 0h0m-168 9h0m-75 3h0m621 3h0m-494 7h0m139 5h0m411 0h0m-426 6h0m-201 20h0m-75 1h0m94 9h0m284 2h0m-577 1h0m924 1h0m-560 1h0m98 7h0m606 0h0m-876 6h0m606 0h0m-572 3h0m122 1h0m-421 3h0m446 2h0m397 1h0m-750 1h0m-99 5h0m852 11h0m304 1h0m-882 4h0m691 0h0m-859 2h0m-109 2h0m899 0h0m-851 1h0m1090 0h0m-398 4h0m-30 5h0m-648 10h0m3 2h0m-65 1h0m720 1h0m162 4h0m-155 3h0m276 2h0m-738 1h0m451 14h0m213 5h0m-351 4h0m-219 3h0m260 0h0m96 6h0m-63 1h0m-648 2h0m68 1h0m602 6h0m-304 3h0m-255 8h0m-27 1h0m687 0h0m-220 6h0m67 2h0m-312 1h0m-172 7h0m-41 1h0m423 4h0m603 0h0m-1072 3h0m159 1h0m309 2h0m-463 11h0m77 1h0m563 3h0m-35 1h0m-501 4h0m321 4h0m250 0h0m-327 9h0m-177 1h0m552 4h0m-34 4h0m-714 5h0m261 3h0m-115 2h0m265 0h0m-415 13h0m684 9h0m27 5h0m-269 3h0m547 3h0m-817 1h0m623 5h0m-174 2h0m-19 4h0m247 2h0m-788 1h0m313 2h0m-3 2h0m55 8h0m551 0h0m-62 4h0m198 0h0m-609 1h0m286 6h0m-804 2h0m425 9h0m-199 1h0m558 0h0m-497 4h0m305 2h0m-46 5h0m166 4h0m-604 2h0m390 1h0m-293 2h0m674 1h0m-643 7h0m259 5h0m573 3h0m-47 4h0m-91 5h0m-615 1h0m-47 1h0m-257 3h0m668 4h0m-70 3h0m-446 4h0m423 0h0m256 1h0m-497 1h0m704 2h0m-1038 4h0m561 3h0m-322 3h0m64 2h0m756 0h0m-268 4h0m-127 2h0m26 7h0m423 4h0m-921 3h0m602 2h0m206 2h0m-254 3h0m247 1h0m-324 4h0m-573 7h0m152 0h0m172 1h0m-205 2h0m353 2h0m238 2h0m-53 1h0m297 2h0m-686 4h0m-218 3h0m270 0h0m624 1h0m-1078 2h0m521 0h0m452 1h0m-695 5h0m247 1h0m-40 1h0m-436 2h0m468 0h0m-303 2h0m53 12h0m-116 7h0m574 0h0m37 4h0m-713 3h0m379 3h0m449 0h0m208 0h0m-129 1h0m-425 2h0m-96 15h0m-83 3h0m758 0h0m-138 1h0m-622 1h0m807 1h0"/>
<path stroke="rgb(150,150,150)" stroke-width="2" stroke-linecap="square" d="M692 19h0m-283 16h0m501 32h0m273 24h0m-396 2h0m-595 9h0m830 5h0m-538 35h0m-196 12h0m-254 4h0m342 6h0m612 6h0m-936 10h0m849 2h0m-627 30h0m809 16h0m49 4h0m-399 9h0m332 5h0m-628 13h0m-55 10h0m779 2h0m-79 4h0m34 35h0m-1046 4h0m212 21h0m832 27h0m-117 1h0m-258 16h0m66 46h0m-287 135h0m452 36h0m-639 61h0"/>
<path transform="translate(.5 .5)" stroke="rgb(165,165,165)" stroke-width="2.2" stroke-linecap="round" d="M1149 13h0m-766 2h0m701 2h0m-2 1h0m102 11h0m-614 4h0m390 1h0m-549 2h0m516 7h0m-445 2h0m-480 4h0m1090 0h0m-842 6h0m193 4h0m-39 2h0m281 3h0m110 1h0m-773 1h0m1069 2h0m13 5h0m-518 5h0m86 0h0m488 0h0m-345 3h0m-340 1h0m214 1h0m-571 3h0m536 3h0m-21 2h0m-246 1h0m68 1h0m-404 4h0m217 0h0m612 0h0m-119 2h0m-717 3h0m454 13h0m-149 8h0m499 1h0m-687 11h0m672 4h0m-415 3h0m-350 1h0m263 0h0m746 6h0m28 0h0m-265 2h0m-488 2h0m717 0h0m-938 6h0m909 6h0m-46 9h0m-822 1h0m302 1h0m-240 2h0m741 0h0m-32 7h0m-602 1h0m511 3h0m-223 3h0m-604 3h0m526 4h0m223 1h0m27 0h0m-295 3h0m595 0h0m-150 4h0m133 0h0m34 3h0m-764 2h0m60 0h0m281 0h0m-569 1h0m461 3h0m-142 5h0m144 0h0m94 6h0m303 0h0m-656 1h0m548 3h0m-710 1h0m-27 3h0m222 2h0m378 8h0m94 3h0m3 3h0m-149 1h0m-435 1h0m877 0h0m-811 9h0m769 6h0m-237 7h0m329 0h0m-1106 3h0m-25 8h0m886 0h0m-747 9h0m15 4h0m173 0h0m404 4h0m74 3h0m-307 2h0m-253 2h0m574 4h0m94 10h0m-264 2h0m7 4h0m-21 11h0m-331 5h0m-132 13h0m916 2h0m-670 5h0m-453 1h0m497 2h0m640 2h0m-376 22h0m-227 3h0m552 0h0m-332 1h0m-13 6h0m32 1h0m134 9h0m-227 1h0m-638 2h0m1041 1h0m-267 6h0m236 1h0m-1057 8h0m35 0h0m599 5h0m-296 2h0m727 0h0m-513 8h0m189 0h0m415 0h0m-1156 1h0m770 4h0m-383 1h0m548 0h0m-285 6h0m-35 2h0m41 1h0m-617 2h0m82 3h0m203 1h0m-100 1h0m736 1h0m-319 2h0m-260 2h0m744 9h0m-482 2h0m400 1h0m-940 3h0m1006 1h0m8 3h0m-362 2h0m-283 2h0m-54 8h0m188 2h0m425 0h0m-492 4h0m-6 7h0m411 0h0m163 0h0m-857 1h0m-96 12h0m981 0h0m-87 2h0m-721 1h0m-222 3h0m290 2h0m343 0h0m310 1h0m-468 2h0m200 1h0m-243 2h0m-146 1h0m-97 2h0m854 4h0m-779 2h0m-170 5h0m573 5h0m377 1h0m-247 4h0m-97 2h0m270 2h0m-120 2h0m96 1h0m-759 2h0m357 1h0m-463 1h0m480 3h0m-69 1h0m379 1h0m-574 7h0m-321 4h0m1042 9h0m-790 1h0m-306 1h0m485 1h0m555 8h0m-860 1h0m863 1h0m-1030 5h0m444 3h0m168 1h0m-420 4h0m685 0h0m117 0h0m-805 4h0m829 5h0m-256 1h0m-385 8h0m411 1h0m-654 9h0"/>
<path transform="translate(.5 .5)" stroke="rgb(195,195,195)" stroke-width="2.2" stroke-linecap="round" d="M1167 0h0m-1069 2h0m808 0h0m-370 2h0m278 0h0m-454 1h0m382 0h0m-47 1h0m-679 1h0m187 0h0m-112 1h0m252 1h0m-192 4h0m-135 1h0m771 0h0m-768 1h0m1107 3h0m-1067 2h0m92 1h0m899 1h0m-737 5h0m680 2h0m-414 2h0m215 2h0m-587 2h0m314 0h0m-343 1h0m-52 3h0m762 4h0m-341 6h0m-383 4h0m728 3h0m-388 2h0m131 5h0m-573 4h0m855 4h0m-125 2h0m-143 2h0m-247 4h0m-242 14h0m794 1h0m-12 1h0m-790 2h0m301 0h0m230 2h0m249 0h0m-381 1h0m-113 3h0m743 0h0m-1056 2h0m422 2h0m570 3h0m-960 2h0m818 5h0m-695 3h0m-144 1h0m199 0h0m-205 3h0m347 0h0m-233 1h0m624 4h0m-761 1h0m838 0h0m-421 2h0m10 3h0m202 0h0m-53 2h0m-581 1h0m570 2h0m-310 4h0m714 1h0m-400 1h0m475 8h0m-975 3h0m395 6h0m173 2h0m-405 2h0m-295 1h0m503 0h0m51 0h0m-18 1h0m378 0h0m-697 2h0m255 1h0m-45 9h0m186 1h0m447 0h0m-154 2h0m-460 1h0m59 0h0m533 1h0m-373 5h0m-300 1h0m-168 2h0m342 4h0m461 1h0m-208 2h0m-418 11h0m71 0h0m94 3h0m134 2h0m-668 1h0m430 1h0m-238 3h0m550 1h0m-672 1h0m1011 2h0m-131 2h0m-59 3h0m-921 3h0m120 0h0m372 3h0m-486 3h0m1083 3h0m-305 2h0m247 1h0m102 3h0m-532 1h0m-105 2h0m590 8h0m-158 1h0m-896 1h0m84 5h0m866 4h0m166 3h0m-937 1h0m944 3h0m-971 5h0m924 2h0m-84 3h0m-888 3h0m-19 1h0m911 0h0m-48 1h0m-804 6h0m191 1h0m98 4h0m347 2h0m142 4h0m-155 1h0m-346 3h0m640 3h0m-941 2h0m935 3h0m6 4h0m-536 2h0m306 1h0m100 1h0m-488 6h0m654 0h0m10 1h0m-488 1h0m-478 1h0m922 1h0m-707 3h0m479 0h0m265 0h0m-424 1h0m245 3h0m-220 1h0m-249 3h0m-295 5h0m101 0h0m661 0h0m-542 1h0m704 0h0m-536 7h0m528 0h0m-321 2h0m-291 1h0m372 7h0m-582 1h0m-38 7h0m738 2h0m-976 4h0m-12 2h0m310 2h0m731 2h0m-836 2h0m209 0h0m519 0h0m-944 1h0m304 2h0m-212 1h0m282 0h0m141 1h0m121 2h0m-639 4h0m1046 1h0m-936 1h0m45 0h0m1000 3h0m-815 4h0m323 2h0m-126 2h0m-121 2h0m222 3h0m-165 3h0m529 3h0m-744 1h0m908 1h0m-1055 2h0m298 0h0m31 0h0m-334 2h0m203 0h0m669 3h0m163 2h0m-620 3h0m457 9h0m-6 2h0m138 3h0m-788 1h0m-290 1h0m-18 1h0m650 1h0m361 0h0m63 5h0m-805 2h0m36 1h0m359 1h0m24 1h0m-526 1h0m94 5h0m27 1h0m535 5h0m-634 2h0m419 0h0m-193 6h0m101 6h0m201 5h0m-352 2h0m-273 2h0m-57 1h0m610 2h0m-394 1h0m138 0h0m301 0h0m-656 2h0m690 2h0m-531 1h0m720 2h0m-459 4h0m-223 1h0m88 0h0m116 1h0m631 1h0m90 0h0m-1129 1h0m287 6h0m189 3h0m-138 1h0m457 0h0m82 1h0m-859 2h0m316 3h0m815 1h0m-802 2h0m55 0h0m-242 2h0m714 0h0m-476 2h0m463 1h0m121 5h0m-778 1h0m-57 3h0m248 2h0m500 0h0m-530 2h0m368 0h0m380 0h0m-800 2h0m230 3h0m266 7h0m323 0h0m-746 1h0m218 0h0m-263 3h0m527 1h0m-417 1h0m658 0h0m-332 3h0m-636 4h0m61 1h0m490 0h0m-303 2h0m53 0h0m495 6h0m21 0h0m162 0h0m-1031 2h0m60 2h0m436 0h0m8 0h0m47 2h0m-308 3h0m498 4h0m-627 1h0m108 0h0m-105 5h0m-42 2h0m180 0h0m142 0h0m186 0h0m-88 2h0m200 1h0m-536 1h0m-208 1h0m30 0h0m437 0h0m-476 1h0m383 1h0m-418 2h0m12 0h0m114 0h0m829 1h0m-444 2h0m478 0h0m-827 1h0m-115 2h0m880 0h0m-417 2h0m148 7h0m-238 1h0m403 2h0m-125 4h0m-212 1h0m405 5h0m-844 3h0m367 3h0m369 0h0m81 0h0m36 0h0m-317 2h0"/>
<path transform="translate(.5 .5)" stroke="rgb(225,225,225)" stroke-width="2.2" stroke-linecap="round" d="M645 8h0m-148 6h0m-197 9h0m-223 2h0m759 0h0m-596 12h0m-37 1h0m796 1h0m120 4h0m-958 2h0m-154 4h0m309 11h0m-32 11h0m637 2h0m-127 1h0m383 14h0m-1002 11h0m252 7h0m64 3h0m430 6h0m-766 1h0m464 2h0m335 0h0m-568 1h0m720 25h0m70 2h0m-971 2h0m865 7h0m-403 2h0m-218 6h0m697 9h0m-291 23h0m12 0h0m-781 8h0m1082 5h0m-1107 3h0m889 4h0m82 7h0m-949 2h0m89 10h0m40 2h0m-195 7h0m934 7h0m56 26h0m-201 3h0m-581 24h0m475 18h0m-14 3h0m-125 1h0m-493 7h0m524 3h0m554 17h0m-1074 11h0m263 11h0m398 3h0m262 2h0m-201 6h0m-90 2h0m-285 1h0m357 13h0m-699 3h0m201 12h0m263 0h0m397 3h0m-906 1h0m632 0h0m-294 7h0m79 9h0m413 1h0m-616 1h0m201 2h0m-128 14h0m-61 1h0m580 1h0m-563 3h0m600 0h0m-646 6h0m440 17h0m85 2h0m-686 1h0m948 16h0m-204 5h0m-211 16h0m2 9h0m478 17h0m-1040 8h0m497 0h0m159 0h0m316 11h0m-187 2h0m-259 2h0m107 1h0m-392 13h0m186 4h0m-460 11h0m615 7h0m525 15h0m-445 6h0m91 0h0m-495 5h0m441 16h0"/>
<path transform="translate(.5 .5)" stroke="#fff" stroke-opacity=".16" stroke-width="6" stroke-linecap="round" d="M468 22h0m614 3h0m-809 12h0m436 71h0m-659 1h0m674 3h0m-634 13h0m1021 40h0m-1075 1h0m52 0h0m534 33h0m-185 26h0m-146 46h0m-184 20h0m461 1h0m-353 25h0m70 6h0m55 8h0m-331 1h0m1130 1h0m-231 15h0m-621 3h0m639 1h0m-19 23h0m129 17h0m-15 20h0m-319 13h0m117 20h0m302 12h0m-65 26h0m-384 6h0m410 44h0m-81 23h0m-520 2h0m-117 6h0m258 55h0m89 20h0m-669 1h0m920 0h0m-328 12h0"/>
<path transform="translate(.5 .5)" stroke="#e6e6e6" stroke-width="3" stroke-linecap="round" d="M468 22h0m614 3h0m-809 12h0m436 71h0m-659 1h0m674 3h0m-634 13h0m1021 40h0m-1075 1h0m52 0h0m534 33h0m-185 26h0m-146 46h0m-184 20h0m461 1h0m-353 25h0m70 6h0m55 8h0m-331 1h0m1130 1h0m-231 15h0m-621 3h0m639 1h0m-19 23h0m129 17h0m-15 20h0m-319 13h0m117 20h0m302 12h0m-65 26h0m-384 6h0m410 44h0m-81 23h0m-520 2h0m-117 6h0m258 55h0m89 20h0m-669 1h0m920 0h0m-328 12h0"/>
<path transform="translate(.5 .5)" stroke="#fff" stroke-opacity=".18" stroke-width="6.5" stroke-linecap="round" d="M916 16h0m-627 3h0m404 42h0m-538 1h0m-21 3h0m-19 4h0m757 17h0m-595 16h0m-26 18h0m182 9h0m284 34h0m-574 34h0m482 9h0m-358 55h0m238 9h0m-209 4h0m742 16h0m-83 18h0m-626 92h0m205 3h0m-445 48h0m581 21h0m-608 163h0m148 5h0"/>
<path transform="translate(.5 .5)" stroke="#fafafa" stroke-width="3.6" stroke-linecap="round" d="M916 16h0m-627 3h0m404 42h0m-538 1h0m-21 3h0m-19 4h0m757 17h0m-595 16h0m-26 18h0m182 9h0m284 34h0m-574 34h0m482 9h0m-358 55h0m238 9h0m-209 4h0m742 16h0m-83 18h0m-626 92h0m205 3h0m-445 48h0m581 21h0m-608 163h0m148 5h0"/>
      <ellipse cx="500.9" cy="81.6" rx="24" ry="18" fill="url(#bg2)" opacity="0.55"/><ellipse cx="500.9" cy="81.6" rx="13" ry="10" fill="url(#bg2)" opacity="1"/>
<ellipse cx="244" cy="107" rx="16" ry="12" fill="url(#bg2)" opacity="0.3"/>
      
<g transform="translate(-389,-110)">
 <path d="M1341 595 L1330 598 L1318 603 L1311 614 L1309 623 L1314 632 L1322 641 L1336 655 L1350 664 L1363 669 L1375 680 L1385 675 L1391 662 L1393 645 L1387 630 L1376 617 L1362 604 L1350 597 Z" fill="#7c776d"/>
 <path d="M1309 623 L1314 632 L1322 641 L1336 655 L1350 664 L1363 669 L1375 680 L1385 675 L1380 668 L1362 660 L1342 650 L1325 632 Z" fill="#4e4b45"/>
 <path d="M1318 602 L1341 595.2 L1360 603.4 L1375 617 L1385.7 630.5 L1389.8 641.3 L1376 636 L1356 623.7 L1335.6 617 L1319.3 614.2 L1312 612 Z" fill="#a39d90"/>
 <path d="M1324.7 611.5 L1331.5 617 L1335.6 630.5 L1346.4 644 L1349 655 L1341 652.2 L1330 636 L1322 625 Z" fill="#26241f"/>
 <path d="M1335.6 644 L1349 646.8 L1362.7 657.6 L1373.5 663 L1369.5 668.5 L1356 665.7 L1341 657.6 Z" fill="#2e2c27"/>
 <path d="M1360 630.5 L1370.8 641.3 L1374.9 652.2 L1366.8 655 L1358.6 644 Z" fill="#3c3933"/>
 <path d="M1380 645 L1390 650 L1388 664 L1381 660 Z" fill="#5c5850"/>
 <path d="M1278.6 625 L1282.7 624.4 L1286.8 633.2 L1289.5 644 L1286.8 646.8 L1281.3 646.8 L1275.9 638.6 Z" fill="#e3d9c4"/>
 <path d="M1257 655 L1265 655 L1281 663 L1297.6 668.5 L1315 668.5 L1316 672.5 L1308.5 673.2 L1292 671.2 L1276 667 L1259.7 663 Z" fill="#ddd3bd"/>
 <path d="M1261.7 641.3 L1270.5 642.7 L1286.8 649.5 L1300.3 654.9 L1305.7 660.3 L1303 663 L1286.8 657.6 L1270.5 652.2 L1261 648.1 Z" fill="#ece3d0"/>
 <path d="M1267.8 653.5 L1297.6 663 L1297.6 668.5 L1267.8 660.3 Z" fill="#a84a40"/>
 <path d="M1300.3 656.3 L1305.7 660.3 L1304.4 663 L1299 661 Z" fill="#b9463c"/>
 <path d="M1304.4 659.6 L1313.9 663 L1313.2 665 L1303.7 662.4 Z" fill="#222"/>
 <path d="M1284 671 L1295 672.5 L1300.3 675.2 L1297.6 678 L1286.8 675.2 Z" fill="#d9cfb9"/>
 <path d="M1297.6 673.9 L1308.5 676.6 L1308.5 679.3 L1297 677.3 Z" fill="#1e1e1e"/>
 <path d="M1258.3 678 L1263.7 679.3 L1270.5 676.6 L1276 673.9 L1273.2 679.3 L1265 684.7 L1259.7 684.7 Z" fill="#cfc4ad"/>
 <path d="M1288 664 L1296 667 L1294 670 L1287 667 Z" fill="#b3463d"/>
</g>

      </svg>
    </div>
  </div>

  <!-- ===== INSPECTOR ===== -->
  <div class="a" style="left:1577px;top:64px;width:422px;height:1091px;background:#707070">
    <div class="a" style="left:0;top:22px;width:422px;height:1069px;background:#a3a3a3"></div>
    <div class="tabbar" style="left:0;top:1px;width:422px;height:21px"></div>
    <div class="tab" style="left:0;top:1px;width:103px;height:21px"></div>
    <svg class="a" style="left:9px;top:5px" width="13" height="13" viewBox="0 0 13 13">
      <circle cx="6.5" cy="6.5" r="6" fill="#4a4a4a"/><rect x="5.4" y="5.2" width="2.2" height="5.2" fill="#a5a5a5"/><circle cx="6.5" cy="3.3" r="1.2" fill="#a5a5a5"/>
    </svg>
    <div class="t txt" style="left:27px;top:6px;color:#151515">Inspector</div>
    <svg class="a" style="left:381px;top:4px" width="12" height="12" viewBox="0 0 12 12">
      <path d="M2.5 5.5V3.5a3 3 0 0 1 6 0" fill="none" stroke="#4d4d4d" stroke-width="1.2"/>
      <rect x="1.5" y="6.5" width="9" height="5" rx="1" fill="none" stroke="#4d4d4d" stroke-width="1.2"/>
    </svg>
    <div class="a" style="left:405px;top:5px;width:2.4px;height:2.4px;border-radius:50%;background:#4a4a4a;box-shadow:0 4px 0 #4a4a4a,0 8px 0 #4a4a4a"></div>
  </div>

  <!-- ===== PROJECT ===== -->
  <div class="a" style="left:0;top:777px;width:1575px;height:378px;background:#a3a3a3">
    <div class="tabbar" style="left:0;top:0;width:1575px;height:21px"></div>
    <div class="tab" style="left:0;width:89px;height:21px"></div>
    <svg class="a" style="left:8px;top:5px" width="14" height="12" viewBox="0 0 14 12">
      <path d="M0.5 0.8h4.6l1.4 1.6h7v9H0.5z" fill="#4a4a4a"/>
    </svg>
    <div class="t txt" style="left:26px;top:5px;color:#151515">Project</div>
    <svg class="a" style="left:99px;top:4px" width="13" height="13" viewBox="0 0 13 13">
      <rect x="1" y="1" width="11" height="11.5" rx="1" fill="#4a4a4a"/><path d="M2.8 3.8h7.4M2.8 6.4h7.4M2.8 9h7.4" stroke="#8e8e8e" stroke-width="1"/>
    </svg>
    <div class="t txt" style="left:117px;top:5px;color:#151515">Console</div>
    <svg class="a" style="left:1535px;top:5px" width="12" height="12" viewBox="0 0 12 12">
      <path d="M2.5 5.5V3.5a3 3 0 0 1 6 0" fill="none" stroke="#4d4d4d" stroke-width="1.2"/>
      <rect x="1.5" y="6.5" width="9" height="5" rx="1" fill="none" stroke="#4d4d4d" stroke-width="1.2"/>
    </svg>
    <div class="a" style="left:1559px;top:5px;width:2.4px;height:2.4px;border-radius:50%;background:#4a4a4a;box-shadow:0 4px 0 #4a4a4a,0 8px 0 #4a4a4a"></div>
    <!-- toolbar -->
    <div class="a" style="left:0;top:21px;width:1575px;height:23px;background:#a5a5a5;border-bottom:1px solid #8e8e8e"></div>
    <div class="a" style="left:8px;top:31px;width:13px;height:2px;background:#3a3a3a"></div>
    <div class="a" style="left:13.5px;top:26px;width:2px;height:12px;background:#3a3a3a"></div>
    <div class="dd" style="left:26px;top:30px;border-left-width:4px;border-right-width:4px;border-top-width:5px;border-top-color:#444"></div>
    <div class="a" style="left:1059px;top:24px;width:353px;height:17px;background:#c1c1c1;border-radius:4px;border:1px solid #9a9a9a"></div>
    <svg class="a" style="left:1063px;top:27px" width="10" height="10" viewBox="0 0 10 10">
      <circle cx="4" cy="4" r="2.6" fill="none" stroke="#555" stroke-width="1.2"/><path d="M5.8 6l2.2 2.4" stroke="#555" stroke-width="1.4"/>
    </svg>
    <div class="a" style="left:1391px;top:24px;width:21px;height:17px;background:#a9a9a9;border-left:1px solid #9a9a9a;border-radius:0 4px 4px 0"></div>
    <svg class="a" style="left:1393px;top:26px" width="16" height="14" viewBox="0 0 16 14">
      <rect x="5" y="1.5" width="9.5" height="9.5" rx="1" fill="none" stroke="#505050" stroke-width="1.1"/>
      <rect x="1.5" y="8" width="5" height="4.5" fill="#a9a9a9" stroke="#505050" stroke-width="1.1"/>
      <path d="M7 8.5l5-5M8.5 3.5h3.5V7" fill="none" stroke="#505050" stroke-width="1.1"/>
    </svg>
    <div class="sep" style="left:1415px;top:21px;height:23px"></div>
    <div class="sep" style="left:1444px;top:21px;height:23px"></div>
    <div class="sep" style="left:1473px;top:21px;height:23px"></div>
    <div class="sep" style="left:1502px;top:21px;height:23px"></div>
    <div class="sep" style="left:1531px;top:21px;height:23px"></div>
    <svg class="a" style="left:1421px;top:24px" width="16" height="16" viewBox="0 0 16 16">
      <rect x="1.5" y="1" width="5.5" height="5.5" fill="#454545"/><path d="M10 4l4.5 7h-9z" fill="#454545"/><circle cx="5" cy="11" r="4" fill="#454545"/>
    </svg>
    <svg class="a" style="left:1450px;top:25px" width="15" height="15" viewBox="0 0 15 15">
      <path d="M8.5 1.5h5v5L6.5 13.5 1.5 8.5z" fill="#454545"/><circle cx="11" cy="4" r="1.1" fill="#a5a5a5"/>
    </svg>
    <div class="a" style="left:1480px;top:26px;width:14px;height:14px;border-radius:50%;background:#9e9e9e"></div>
    <svg class="a" style="left:1509px;top:25px" width="15" height="15" viewBox="0 0 15 15">
      <path d="M7.5 0.8l2 4.3 4.7.5-3.5 3.2 1 4.6-4.2-2.4-4.2 2.4 1-4.6L0.8 5.6l4.7-.5z" fill="#5a5a5a"/>
    </svg>
    <svg class="a" style="left:1537px;top:26px" width="16" height="13" viewBox="0 0 16 13">
      <path d="M1 6.5C3 3.5 5.3 2.2 8 2.2s5 1.3 7 4.3c-2 3-4.3 4.3-7 4.3S3 9.5 1 6.5z" fill="none" stroke="#3c3c3c" stroke-width="1.3"/>
      <circle cx="8" cy="6.5" r="2.2" fill="#3c3c3c"/><path d="M2.5 12L13.5 1" stroke="#3c3c3c" stroke-width="1.4"/>
    </svg>
    <div class="t txt" style="left:1554px;top:27px;color:#151515;letter-spacing:0">15</div>
    <!-- tree -->
    <div class="a" style="left:0;top:45px;width:216px;height:333px;overflow:hidden">
<div class="a" style="left:0;top:228.9px;width:216px;height:18px;background:#969696"></div>
<svg class="a" style="left:5.0px;top:3.5px" width="10" height="9" viewBox="0 0 10 9"><path d="M0 0.5h10l-5 8z" fill="#717171"/></svg>
<svg class="a" style="left:20.5px;top:0.5px" width="13" height="13" viewBox="0 0 13 13"><path d="M6.5 0.5l1.8 3.9 4.2.4-3.2 2.9.9 4.2-3.7-2.2-3.7 2.2.9-4.2L0.5 4.8l4.2-.4z" fill="#474747"/></svg>
<div class="t txt" style="left:39.0px;top:1.0px;font-weight:bold;letter-spacing:0px;color:#0e0e0e">Favorites</div>
<svg class="a" style="left:35.5px;top:19.2px" width="14" height="13" viewBox="0 0 14 13"><circle cx="5.5" cy="5.5" r="4.2" fill="none" stroke="#474747" stroke-width="1.1"/><path d="M8.8 8.8l3.4 3.2" stroke="#474747" stroke-width="1.6"/></svg>
<div class="t txt" style="left:54.0px;top:18.7px;color:#151515">All Materials</div>
<svg class="a" style="left:35.5px;top:36.9px" width="14" height="13" viewBox="0 0 14 13"><circle cx="5.5" cy="5.5" r="4.2" fill="none" stroke="#474747" stroke-width="1.1"/><path d="M8.8 8.8l3.4 3.2" stroke="#474747" stroke-width="1.6"/></svg>
<div class="t txt" style="left:54.0px;top:36.4px;color:#151515">All Models</div>
<svg class="a" style="left:35.5px;top:54.7px" width="14" height="13" viewBox="0 0 14 13"><circle cx="5.5" cy="5.5" r="4.2" fill="none" stroke="#474747" stroke-width="1.1"/><path d="M8.8 8.8l3.4 3.2" stroke="#474747" stroke-width="1.6"/></svg>
<div class="t txt" style="left:54.0px;top:54.2px;color:#151515">All Prefabs</div>
<svg class="a" style="left:5.0px;top:92.1px" width="10" height="9" viewBox="0 0 10 9"><path d="M0 0.5h10l-5 8z" fill="#717171"/></svg>
<svg class="a" style="left:20.0px;top:90.1px" width="16" height="12" viewBox="0 0 16 12"><path d="M0.5 11.5V0.8h5l1.5 1.7h6.5v2.2" fill="none" stroke="#474747" stroke-width="1.1"/><path d="M0.8 11.5l2.6-6.8h12.1l-2.6 6.8z" fill="#474747"/></svg>
<div class="t txt" style="left:39.0px;top:89.6px;font-weight:bold;letter-spacing:0px;color:#0e0e0e">Assets</div>
<svg class="a" style="left:20.0px;top:109.8px" width="10" height="9" viewBox="0 0 10 9"><path d="M0 0.5h10l-5 8z" fill="#717171"/></svg>
<svg class="a" style="left:35.0px;top:107.8px" width="16" height="12" viewBox="0 0 16 12"><path d="M0.5 11.5V0.8h5l1.5 1.7h6.5v2.2" fill="none" stroke="#474747" stroke-width="1.1"/><path d="M0.8 11.5l2.6-6.8h12.1l-2.6 6.8z" fill="#474747"/></svg>
<div class="t txt" style="left:53.5px;top:107.3px;color:#151515">BreakableAsteroids</div>
<svg class="a" style="left:51.0px;top:126.0px" width="15" height="12" viewBox="0 0 15 12"><path d="M0.5 0.8h5l1.5 1.7h7.5v9H0.5z" fill="#474747"/></svg>
<div class="t txt" style="left:69.0px;top:125.0px;color:#151515">Asteroids</div>
<svg class="a" style="left:51.0px;top:143.8px" width="15" height="12" viewBox="0 0 15 12"><path d="M0.5 0.8h5l1.5 1.7h7.5v9H0.5z" fill="#474747"/></svg>
<div class="t txt" style="left:69.0px;top:142.8px;color:#151515">Scenes</div>
<svg class="a" style="left:51.0px;top:161.5px" width="15" height="12" viewBox="0 0 15 12"><path d="M0.5 0.8h5l1.5 1.7h7.5v9H0.5z" fill="#474747"/></svg>
<div class="t txt" style="left:69.0px;top:160.5px;color:#151515">Scripts</div>
<svg class="a" style="left:51.0px;top:179.2px" width="15" height="12" viewBox="0 0 15 12"><path d="M0.5 0.8h5l1.5 1.7h7.5v9H0.5z" fill="#474747"/></svg>
<div class="t txt" style="left:69.0px;top:178.2px;color:#151515">Textures</div>
<svg class="a" style="left:35.5px;top:196.9px" width="15" height="12" viewBox="0 0 15 12"><path d="M0.5 0.8h5l1.5 1.7h7.5v9H0.5z" fill="#474747"/></svg>
<div class="t txt" style="left:53.5px;top:195.9px;color:#151515">Materials</div>
<svg class="a" style="left:35.5px;top:214.6px" width="15" height="12" viewBox="0 0 15 12"><path d="M0.5 0.8h5l1.5 1.7h7.5v9H0.5z" fill="#474747"/></svg>
<div class="t txt" style="left:53.5px;top:213.6px;color:#151515">Prefabs</div>
<svg class="a" style="left:35.5px;top:232.4px" width="15" height="12" viewBox="0 0 15 12"><path d="M0.5 0.8h5l1.5 1.7h7.5v9H0.5z" fill="#474747"/></svg>
<div class="t txt" style="left:53.5px;top:231.4px;color:#151515">Scenes</div>
<svg class="a" style="left:20.0px;top:251.6px" width="10" height="9" viewBox="0 0 10 9"><path d="M0 0.5h10l-5 8z" fill="#717171"/></svg>
<svg class="a" style="left:35.0px;top:249.6px" width="16" height="12" viewBox="0 0 16 12"><path d="M0.5 11.5V0.8h5l1.5 1.7h6.5v2.2" fill="none" stroke="#474747" stroke-width="1.1"/><path d="M0.8 11.5l2.6-6.8h12.1l-2.6 6.8z" fill="#474747"/></svg>
<div class="t txt" style="left:53.5px;top:249.1px;color:#151515">Spaceship Fighter</div>
<svg class="a" style="left:35.5px;top:269.3px" width="10" height="9" viewBox="0 0 10 9"><path d="M0 0.5h10l-5 8z" fill="#717171"/></svg>
<svg class="a" style="left:50.5px;top:267.3px" width="16" height="12" viewBox="0 0 16 12"><path d="M0.5 11.5V0.8h5l1.5 1.7h6.5v2.2" fill="none" stroke="#474747" stroke-width="1.1"/><path d="M0.8 11.5l2.6-6.8h12.1l-2.6 6.8z" fill="#474747"/></svg>
<div class="t txt" style="left:69.0px;top:266.8px;color:#151515">Models</div>
<svg class="a" style="left:66.5px;top:285.5px" width="15" height="12" viewBox="0 0 15 12"><path d="M0.5 0.8h5l1.5 1.7h7.5v9H0.5z" fill="#474747"/></svg>
<div class="t txt" style="left:84.5px;top:284.5px;color:#151515">Materials</div>
<svg class="a" style="left:51.0px;top:303.2px" width="15" height="12" viewBox="0 0 15 12"><path d="M0.5 0.8h5l1.5 1.7h7.5v9H0.5z" fill="#474747"/></svg>
<div class="t txt" style="left:69.0px;top:302.2px;color:#151515">Prefabs</div>
<svg class="a" style="left:51.0px;top:321.0px" width="15" height="12" viewBox="0 0 15 12"><path d="M0.5 0.8h5l1.5 1.7h7.5v9H0.5z" fill="#474747"/></svg>
<div class="t txt" style="left:69.0px;top:320.0px;color:#151515">Textures</div>
</div>
    <div class="a" style="left:216px;top:45px;width:15px;height:333px;background:#9c9c9c;border-left:1px solid #8f8f8f;border-right:1px solid #8f8f8f"></div>
    <svg class="a" style="left:219px;top:49px" width="9" height="7" viewBox="0 0 9 7"><path d="M0.5 6.5L4.5 0.5l4 6z" fill="#505050"/></svg>
    <div class="a" style="left:218.5px;top:61px;width:10px;height:257px;background:#8d8d8d;border-radius:5px"></div>
    <svg class="a" style="left:219px;top:366px" width="9" height="7" viewBox="0 0 9 7"><path d="M0.5 0.5h8l-4 6z" fill="#454545"/></svg>
    <!-- right content -->
    <div class="a" style="left:231px;top:45px;width:1344px;height:22px;background:#a8a8a8"></div>
    <div class="t txt" style="left:235px;top:49px;color:#1a1a1a">Assets</div>
    <svg class="a" style="left:284px;top:50px" width="7" height="11" viewBox="0 0 7 11"><path d="M1 1l4.5 4.5L1 10" fill="none" stroke="#6a6a6a" stroke-width="1.2"/></svg>
    <div class="t txt" style="left:296px;top:49px;color:#0e0e0e;font-weight:bold;letter-spacing:0px">Scenes</div>
    <div class="a" style="left:231px;top:67px;width:1344px;height:287px;background:#9e9e9e"></div>
    <svg class="a" style="left:257px;top:83.5px" width="53" height="63" viewBox="0 0 53 63"><path d="M0 14 L24.2 0.2 L24.2 10 L13 16.3 L26.5 23.5 L40 16.3 L28.8 10 L28.8 0.2 L53 14 L26.5 29Z" fill="#5a5a5a"/><path d="M0 14 L26.5 29 L26.5 62 L1.3 47.6 L8.5 43.5 L22.5 50.2 L22.5 31.8 L8.5 24.2 L8.5 36.9 L0 41.7Z" fill="#333"/><path d="M53 14 L26.5 29 L26.5 62 L51.7 47.6 L44.5 43.5 L30.5 50.2 L30.5 31.8 L44.5 24.2 L44.5 36.9 L53 41.7Z" fill="#050505"/></svg>
    <div class="t" style="left:253px;top:153.5px;font-size:11px;color:#1a1a1a;letter-spacing:0.05px">SampleSc...</div>
    <div class="a" style="left:231px;top:354px;width:1344px;height:24px;background:#a8a8a8;border-top:1px solid #939393"></div>
    <div class="a" style="left:1496px;top:365px;width:61px;height:2px;background:#6a6a6a"></div>
    <div class="a" style="left:1525px;top:360px;width:12px;height:12px;border-radius:50%;background:#4e4e4e"></div>
  </div>

  <!-- ===== STATUS BAR ===== -->
  <div class="a" style="left:0;top:1155px;width:1999px;height:25px;background:#6f6f6f">
    <svg class="a" style="left:1885px;top:4px" width="17" height="17" viewBox="0 0 17 17">
      <path d="M8 3c3 0 5 2.5 5 6s-2 6-5 6-5-2.5-5-6 2-6 5-6z" fill="#d6a631"/><path d="M3 5L1 3M13 5l2-2M2 9H0M14 9h2M3 13l-2 2M13 13l2 2" stroke="#d6a631" stroke-width="1.2"/>
    </svg>
    <svg class="a" style="left:1915px;top:4px" width="17" height="17" viewBox="0 0 17 17">
      <ellipse cx="8" cy="4" rx="6" ry="2.5" fill="#444"/><path d="M2 6.5c0 1.4 2.7 2.5 6 2.5s6-1.1 6-2.5v2.5c0 1.4-2.7 2.5-6 2.5s-6-1.1-6-2.5zM2 11c0 1.4 2.7 2.5 6 2.5s6-1.1 6-2.5v2.5c0 1.4-2.7 2.5-6 2.5s-6-1.1-6-2.5z" fill="#444"/>
    </svg>
    <svg class="a" style="left:1946px;top:4px" width="17" height="17" viewBox="0 0 17 17">
      <circle cx="8.5" cy="8.5" r="6" fill="none" stroke="#444" stroke-width="1.4"/><path d="M2 2l13 13" stroke="#444" stroke-width="1.4"/>
    </svg>
    <svg class="a" style="left:1975px;top:4px" width="17" height="17" viewBox="0 0 17 17">
      <circle cx="8.5" cy="8.5" r="7" fill="none" stroke="#4a4a4a" stroke-width="1.2"/><path d="M5 8.5l2.5 2.5 4.5-5" fill="none" stroke="#4a4a4a" stroke-width="1.3"/>
    </svg>
  </div>
</div>
<div class="a" style="left:0;top:1179px;width:1999px;height:1px;background:#4b6571"></div>
</body></html>
